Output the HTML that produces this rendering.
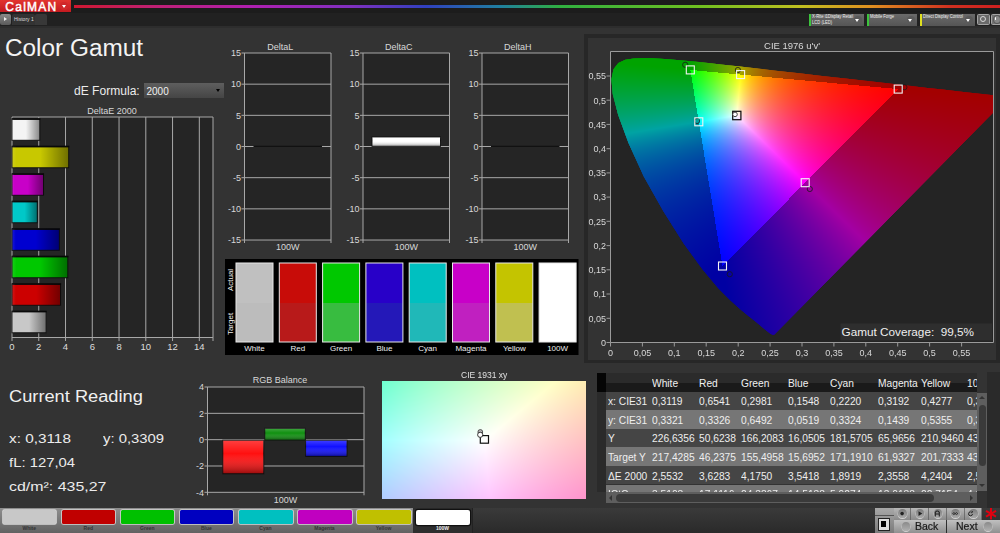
<!DOCTYPE html>
<html><head><meta charset="utf-8">
<style>
html,body{margin:0;padding:0;background:#333;}
#root{position:relative;width:1000px;height:533px;overflow:hidden;background:#333333;font-family:"Liberation Sans",sans-serif;color:#e8e8e8;}
.a{position:absolute;}
.t{position:absolute;white-space:nowrap;line-height:1;}
svg{position:absolute;left:0;top:0;}
svg text{font-family:"Liberation Sans",sans-serif;}
.fb7 rect{width:7px;height:7px;}
.fb4 rect{width:4px;height:4px;}
</style></head><body><div id="root">

<div class="a" style="left:0;top:0;width:1000px;height:13px;background:#1c1c1c"></div>
<div class="a" style="left:0;top:13px;width:1000px;height:13px;background:#212121"></div>
<div class="a" style="left:0;top:26px;width:1000px;height:2px;background:#2d2d2d"></div>
<div class="a" style="left:74px;top:5px;width:926px;height:2.5px;background:linear-gradient(90deg,#d01830 0%,#c02070 8%,#b020b0 19%,#8030c0 30%,#3040c0 38%,#2080a0 46%,#30b040 52.5%,#70c020 67.6%,#c0c020 78.4%,#e09020 86%,#d03020 94.6%,#d02020 100%)"></div>
<div class="a" style="left:0;top:0;width:71px;height:12px;background:linear-gradient(#e2342f,#c41a20)"></div>
<div class="t" style="left:5.3px;top:0.5px;font-size:12px;font-weight:normal;letter-spacing:1.25px;color:#fff;-webkit-text-stroke:0.45px #fff">CalMAN</div>
<div class="a" style="left:60px;top:2px;width:8px;height:8px;border-radius:50%;background:#d0282a"></div>
<div class="a" style="left:62px;top:5px;width:0;height:0;border-left:2.5px solid transparent;border-right:2.5px solid transparent;border-top:3px solid #fff"></div>
<div class="a" style="left:0;top:13.5px;width:10.5px;height:11.5px;background:linear-gradient(#8a8a8a,#5a5a5a);border-radius:2px"></div>
<div class="a" style="left:4px;top:17px;width:0;height:0;border-top:2.5px solid transparent;border-bottom:2.5px solid transparent;border-left:3px solid #eee"></div>
<div class="a" style="left:12px;top:13.5px;width:23px;height:11.5px;background:#333;border-radius:2px 2px 0 0"></div>
<div class="t" style="left:14px;top:16.5px;font-size:5px;color:#ddd">History 1</div>
<div class="a" style="left:35px;top:13.5px;width:12px;height:11.5px;background:#383838;border-radius:2px 2px 0 0"></div>
<div class="a" style="left:808.5px;top:14px;width:55.5px;height:11.5px;background:linear-gradient(#6a6a6a,#555)"></div>
<div class="a" style="left:808.5px;top:14px;width:2.5px;height:11.5px;background:#3cc43c"></div>
<div class="t" style="left:812.0px;top:15.0px;font-size:4.6px;color:#eee;transform-origin:0 0;transform:scaleX(0.9)">X-Rite i1Display Retail</div>
<div class="t" style="left:812.0px;top:20.5px;font-size:4.6px;color:#eee;transform-origin:0 0;transform:scaleX(0.9)">LCD (LED)</div>
<div class="a" style="left:853.5px;top:15.5px;width:8px;height:8px;border-radius:50%;background:#5a5a5a"></div>
<div class="a" style="left:855px;top:18.5px;width:0;height:0;border-left:2.5px solid transparent;border-right:2.5px solid transparent;border-top:3px solid #fff"></div>
<div class="a" style="left:866.5px;top:14px;width:50.5px;height:11.5px;background:linear-gradient(#6a6a6a,#555)"></div>
<div class="a" style="left:866.5px;top:14px;width:2.5px;height:11.5px;background:#3cc43c"></div>
<div class="t" style="left:870.0px;top:15.0px;font-size:4.6px;color:#eee;transform-origin:0 0;transform:scaleX(0.9)">Mobile Forge</div>
<div class="a" style="left:906.5px;top:15.5px;width:8px;height:8px;border-radius:50%;background:#5a5a5a"></div>
<div class="a" style="left:908px;top:18.5px;width:0;height:0;border-left:2.5px solid transparent;border-right:2.5px solid transparent;border-top:3px solid #fff"></div>
<div class="a" style="left:919.5px;top:14px;width:55.5px;height:11.5px;background:linear-gradient(#6a6a6a,#555)"></div>
<div class="a" style="left:919.5px;top:14px;width:2.5px;height:11.5px;background:#e0e020"></div>
<div class="t" style="left:923.0px;top:15.0px;font-size:4.6px;color:#eee;transform-origin:0 0;transform:scaleX(0.9)">Direct Display Control</div>
<div class="a" style="left:964.5px;top:15.5px;width:8px;height:8px;border-radius:50%;background:#5a5a5a"></div>
<div class="a" style="left:966px;top:18.5px;width:0;height:0;border-left:2.5px solid transparent;border-right:2.5px solid transparent;border-top:3px solid #fff"></div>
<div class="a" style="left:977px;top:13.5px;width:10.5px;height:9.5px;background:#6a6a6a;border:1px solid #a4a4a4;border-radius:1.5px"></div>
<div class="a" style="left:979.6px;top:15.5px;width:4.2px;height:4.2px;border-radius:50%;border:1.3px solid #d8d8d8"></div>
<div class="a" style="left:991px;top:13.5px;width:10.5px;height:9.5px;background:#727272;border:1px solid #a4a4a4;border-radius:1.5px"></div>
<div class="a" style="left:993px;top:15px;width:6px;height:7px;border-radius:50%;background:#888;border:0.8px solid #555"></div>
<div class="a" style="left:994.6px;top:17px;width:1.8px;height:3px;border-radius:50%;background:#fff"></div>
<div class="t" style="left:5px;top:36.5px;font-size:23.5px;color:#f4f4f4;transform-origin:0 0;transform:scaleX(1.036)">Color Gamut</div>
<div class="t" style="left:74px;top:85px;font-size:12.5px;color:#ececec;transform-origin:0 0;transform:scaleX(0.965)">dE Formula:</div>
<div class="a" style="left:144px;top:83px;width:80px;height:14.5px;background:linear-gradient(#5e5e5e,#454545)"></div>
<div class="t" style="left:146.5px;top:87px;font-size:10px;color:#f0f0f0">2000</div>
<div class="a" style="left:216px;top:89px;width:0;height:0;border-left:2.8px solid transparent;border-right:2.8px solid transparent;border-top:3.5px solid #000"></div>
<div class="t" style="left:9px;top:389px;font-size:16px;color:#f0f0f0;transform-origin:0 0;transform:scaleX(1.14)">Current Reading</div>
<div class="t" style="left:9px;top:431.5px;font-size:13.5px;color:#ececec;transform-origin:0 0;transform:scaleX(1.135)">x: 0,3118</div>
<div class="t" style="left:102.5px;top:431.5px;font-size:13.5px;color:#ececec;transform-origin:0 0;transform:scaleX(1.1)">y: 0,3309</div>
<div class="t" style="left:9px;top:455.5px;font-size:13.5px;color:#ececec;transform-origin:0 0;transform:scaleX(1.1)">fL: 127,04</div>
<div class="t" style="left:9px;top:479.5px;font-size:13.5px;color:#ececec;transform-origin:0 0;transform:scaleX(1.18)">cd/m²: 435,27</div>
<svg width="1000" height="533" viewBox="0 0 1000 533">
<defs>
<linearGradient id="hbar" x1="0" x2="1" y1="0" y2="0"><stop offset="0" stop-color="#fff" stop-opacity="0.10"/><stop offset="0.08" stop-color="#fff" stop-opacity="0"/><stop offset="0.5" stop-color="#000" stop-opacity="0"/><stop offset="1" stop-color="#000" stop-opacity="0.45"/></linearGradient>
<linearGradient id="vbar" x1="0" x2="0" y1="0" y2="1"><stop offset="0" stop-color="#fff" stop-opacity="0.2"/><stop offset="0.4" stop-color="#fff" stop-opacity="0"/><stop offset="1" stop-color="#000" stop-opacity="0.4"/></linearGradient>
</defs>
<rect x="12" y="117" width="201" height="220.5" fill="#252525"/>
<text x="112" y="114" font-size="9" fill="#d8d8d8" text-anchor="middle">DeltaE 2000</text>
<line x1="12.0" y1="117" x2="12.0" y2="341.0" stroke="#a8a8a8" stroke-width="1"/>
<text x="12.0" y="350" font-size="9.5" fill="#dddddd" text-anchor="middle">0</text>
<line x1="38.760000000000005" y1="117" x2="38.760000000000005" y2="341.0" stroke="#a8a8a8" stroke-width="1"/>
<text x="38.760000000000005" y="350" font-size="9.5" fill="#dddddd" text-anchor="middle">2</text>
<line x1="65.52000000000001" y1="117" x2="65.52000000000001" y2="341.0" stroke="#a8a8a8" stroke-width="1"/>
<text x="65.52000000000001" y="350" font-size="9.5" fill="#dddddd" text-anchor="middle">4</text>
<line x1="92.28" y1="117" x2="92.28" y2="341.0" stroke="#a8a8a8" stroke-width="1"/>
<text x="92.28" y="350" font-size="9.5" fill="#dddddd" text-anchor="middle">6</text>
<line x1="119.04" y1="117" x2="119.04" y2="341.0" stroke="#a8a8a8" stroke-width="1"/>
<text x="119.04" y="350" font-size="9.5" fill="#dddddd" text-anchor="middle">8</text>
<line x1="145.8" y1="117" x2="145.8" y2="341.0" stroke="#a8a8a8" stroke-width="1"/>
<text x="145.8" y="350" font-size="9.5" fill="#dddddd" text-anchor="middle">10</text>
<line x1="172.56" y1="117" x2="172.56" y2="341.0" stroke="#a8a8a8" stroke-width="1"/>
<text x="172.56" y="350" font-size="9.5" fill="#dddddd" text-anchor="middle">12</text>
<line x1="199.32000000000002" y1="117" x2="199.32000000000002" y2="341.0" stroke="#a8a8a8" stroke-width="1"/>
<text x="199.32000000000002" y="350" font-size="9.5" fill="#dddddd" text-anchor="middle">14</text>
<line x1="12" y1="117" x2="213" y2="117" stroke="#a8a8a8" stroke-width="1"/>
<line x1="213" y1="117" x2="213" y2="341.0" stroke="#a8a8a8" stroke-width="1"/>
<line x1="12" y1="337.5" x2="213" y2="337.5" stroke="#a8a8a8" stroke-width="1"/>
<rect x="12" y="118.8" width="27.8304" height="21.5" fill="#f4f4f4" stroke="#111" stroke-width="1"/>
<rect x="12" y="118.3" width="28.3304" height="1.6" fill="#0a0a0a"/>
<rect x="12" y="118.8" width="27.8304" height="21.5" fill="url(#hbar)"/>
<rect x="12" y="146.3" width="56.736552" height="21.5" fill="#c8c800" stroke="#111" stroke-width="1"/>
<rect x="12" y="145.8" width="57.236552" height="1.6" fill="#0a0a0a"/>
<rect x="12" y="146.3" width="56.736552" height="21.5" fill="url(#hbar)"/>
<rect x="12" y="173.8" width="31.520604" height="21.5" fill="#c800c8" stroke="#111" stroke-width="1"/>
<rect x="12" y="173.3" width="32.020604" height="1.6" fill="#0a0a0a"/>
<rect x="12" y="173.8" width="31.520604" height="21.5" fill="url(#hbar)"/>
<rect x="12" y="201.3" width="25.313622" height="21.5" fill="#00c8c8" stroke="#111" stroke-width="1"/>
<rect x="12" y="200.8" width="25.813622" height="1.6" fill="#0a0a0a"/>
<rect x="12" y="201.3" width="25.313622" height="21.5" fill="url(#hbar)"/>
<rect x="12" y="228.8" width="47.389284" height="21.5" fill="#0000d0" stroke="#111" stroke-width="1"/>
<rect x="12" y="228.3" width="47.889284" height="1.6" fill="#0a0a0a"/>
<rect x="12" y="228.8" width="47.389284" height="21.5" fill="url(#hbar)"/>
<rect x="12" y="256.3" width="55.8615" height="21.5" fill="#00c800" stroke="#111" stroke-width="1"/>
<rect x="12" y="255.8" width="56.3615" height="1.6" fill="#0a0a0a"/>
<rect x="12" y="256.3" width="55.8615" height="21.5" fill="url(#hbar)"/>
<rect x="12" y="283.8" width="48.546654000000004" height="21.5" fill="#cc0000" stroke="#111" stroke-width="1"/>
<rect x="12" y="283.3" width="49.046654000000004" height="1.6" fill="#0a0a0a"/>
<rect x="12" y="283.8" width="48.546654000000004" height="21.5" fill="url(#hbar)"/>
<rect x="12" y="311.3" width="34.161816" height="21.5" fill="#c8c8c8" stroke="#111" stroke-width="1"/>
<rect x="12" y="310.8" width="34.661816" height="1.6" fill="#0a0a0a"/>
<rect x="12" y="311.3" width="34.161816" height="21.5" fill="url(#hbar)"/>
<rect x="244.5" y="53" width="86.5" height="187" fill="#252525"/>
<text x="280.25" y="50" font-size="9" fill="#d8d8d8" text-anchor="middle">DeltaL</text>
<line x1="244.5" y1="53" x2="244.5" y2="243" stroke="#a8a8a8"/>
<line x1="331.0" y1="53" x2="331.0" y2="243" stroke="#a8a8a8"/>
<line x1="241.5" y1="53.0" x2="331.0" y2="53.0" stroke="#a8a8a8"/>
<text x="241.0" y="56.3" font-size="9" fill="#d8d8d8" text-anchor="end">15</text>
<line x1="241.5" y1="84.17" x2="331.0" y2="84.17" stroke="#a8a8a8"/>
<text x="241.0" y="87.47" font-size="9" fill="#d8d8d8" text-anchor="end">10</text>
<line x1="241.5" y1="115.34" x2="331.0" y2="115.34" stroke="#a8a8a8"/>
<text x="241.0" y="118.64" font-size="9" fill="#d8d8d8" text-anchor="end">5</text>
<line x1="241.5" y1="146.51" x2="331.0" y2="146.51" stroke="#a8a8a8"/>
<text x="241.0" y="149.81" font-size="9" fill="#d8d8d8" text-anchor="end">0</text>
<line x1="241.5" y1="177.68" x2="331.0" y2="177.68" stroke="#a8a8a8"/>
<text x="241.0" y="180.98000000000002" font-size="9" fill="#d8d8d8" text-anchor="end">-5</text>
<line x1="241.5" y1="208.85000000000002" x2="331.0" y2="208.85000000000002" stroke="#a8a8a8"/>
<text x="241.0" y="212.15000000000003" font-size="9" fill="#d8d8d8" text-anchor="end">-10</text>
<line x1="241.5" y1="240.02" x2="331.0" y2="240.02" stroke="#a8a8a8"/>
<text x="241.0" y="243.32000000000002" font-size="9" fill="#d8d8d8" text-anchor="end">-15</text>
<text x="287.75" y="249.5" font-size="9" fill="#d8d8d8" text-anchor="middle">100W</text>
<line x1="253.5" y1="146.3" x2="322.0" y2="146.3" stroke="#111" stroke-width="1.2"/>
<rect x="363" y="53" width="86.5" height="187" fill="#252525"/>
<text x="398.75" y="50" font-size="9" fill="#d8d8d8" text-anchor="middle">DeltaC</text>
<line x1="363" y1="53" x2="363" y2="243" stroke="#a8a8a8"/>
<line x1="449.5" y1="53" x2="449.5" y2="243" stroke="#a8a8a8"/>
<line x1="360" y1="53.0" x2="449.5" y2="53.0" stroke="#a8a8a8"/>
<text x="359.5" y="56.3" font-size="9" fill="#d8d8d8" text-anchor="end">15</text>
<line x1="360" y1="84.17" x2="449.5" y2="84.17" stroke="#a8a8a8"/>
<text x="359.5" y="87.47" font-size="9" fill="#d8d8d8" text-anchor="end">10</text>
<line x1="360" y1="115.34" x2="449.5" y2="115.34" stroke="#a8a8a8"/>
<text x="359.5" y="118.64" font-size="9" fill="#d8d8d8" text-anchor="end">5</text>
<line x1="360" y1="146.51" x2="449.5" y2="146.51" stroke="#a8a8a8"/>
<text x="359.5" y="149.81" font-size="9" fill="#d8d8d8" text-anchor="end">0</text>
<line x1="360" y1="177.68" x2="449.5" y2="177.68" stroke="#a8a8a8"/>
<text x="359.5" y="180.98000000000002" font-size="9" fill="#d8d8d8" text-anchor="end">-5</text>
<line x1="360" y1="208.85000000000002" x2="449.5" y2="208.85000000000002" stroke="#a8a8a8"/>
<text x="359.5" y="212.15000000000003" font-size="9" fill="#d8d8d8" text-anchor="end">-10</text>
<line x1="360" y1="240.02" x2="449.5" y2="240.02" stroke="#a8a8a8"/>
<text x="359.5" y="243.32000000000002" font-size="9" fill="#d8d8d8" text-anchor="end">-15</text>
<text x="406.25" y="249.5" font-size="9" fill="#d8d8d8" text-anchor="middle">100W</text>
<rect x="372" y="137.0" width="68.5" height="9.3" fill="#ffffff" stroke="#111"/>
<rect x="372" y="137.0" width="68.5" height="9.3" fill="url(#vbar)"/>
<rect x="482" y="53" width="86.5" height="187" fill="#252525"/>
<text x="517.75" y="50" font-size="9" fill="#d8d8d8" text-anchor="middle">DeltaH</text>
<line x1="482" y1="53" x2="482" y2="243" stroke="#a8a8a8"/>
<line x1="568.5" y1="53" x2="568.5" y2="243" stroke="#a8a8a8"/>
<line x1="479" y1="53.0" x2="568.5" y2="53.0" stroke="#a8a8a8"/>
<text x="478.5" y="56.3" font-size="9" fill="#d8d8d8" text-anchor="end">15</text>
<line x1="479" y1="84.17" x2="568.5" y2="84.17" stroke="#a8a8a8"/>
<text x="478.5" y="87.47" font-size="9" fill="#d8d8d8" text-anchor="end">10</text>
<line x1="479" y1="115.34" x2="568.5" y2="115.34" stroke="#a8a8a8"/>
<text x="478.5" y="118.64" font-size="9" fill="#d8d8d8" text-anchor="end">5</text>
<line x1="479" y1="146.51" x2="568.5" y2="146.51" stroke="#a8a8a8"/>
<text x="478.5" y="149.81" font-size="9" fill="#d8d8d8" text-anchor="end">0</text>
<line x1="479" y1="177.68" x2="568.5" y2="177.68" stroke="#a8a8a8"/>
<text x="478.5" y="180.98000000000002" font-size="9" fill="#d8d8d8" text-anchor="end">-5</text>
<line x1="479" y1="208.85000000000002" x2="568.5" y2="208.85000000000002" stroke="#a8a8a8"/>
<text x="478.5" y="212.15000000000003" font-size="9" fill="#d8d8d8" text-anchor="end">-10</text>
<line x1="479" y1="240.02" x2="568.5" y2="240.02" stroke="#a8a8a8"/>
<text x="478.5" y="243.32000000000002" font-size="9" fill="#d8d8d8" text-anchor="end">-15</text>
<text x="525.25" y="249.5" font-size="9" fill="#d8d8d8" text-anchor="middle">100W</text>
<line x1="491" y1="146.3" x2="559.5" y2="146.3" stroke="#111" stroke-width="1.2"/>
<rect x="225" y="259" width="353.5" height="96" fill="#000"/>
<rect x="236.0" y="263" width="37" height="40" fill="#c0c0c0"/>
<rect x="236.0" y="303" width="37" height="39" fill="#bcbcbc"/>
<rect x="236.0" y="263" width="37" height="79" fill="none" stroke="#e8e8e8" stroke-width="1"/>
<text x="254.5" y="351" font-size="8" fill="#eeeeee" text-anchor="middle">White</text>
<rect x="279.3" y="263" width="37" height="40" fill="#c80c08"/>
<rect x="279.3" y="303" width="37" height="39" fill="#b81a1a"/>
<rect x="279.3" y="263" width="37" height="79" fill="none" stroke="#e8e8e8" stroke-width="1"/>
<text x="297.8" y="351" font-size="8" fill="#eeeeee" text-anchor="middle">Red</text>
<rect x="322.6" y="263" width="37" height="40" fill="#00c800"/>
<rect x="322.6" y="303" width="37" height="39" fill="#38bc40"/>
<rect x="322.6" y="263" width="37" height="79" fill="none" stroke="#e8e8e8" stroke-width="1"/>
<text x="341.1" y="351" font-size="8" fill="#eeeeee" text-anchor="middle">Green</text>
<rect x="365.9" y="263" width="37" height="40" fill="#2800c8"/>
<rect x="365.9" y="303" width="37" height="39" fill="#2418b8"/>
<rect x="365.9" y="263" width="37" height="79" fill="none" stroke="#e8e8e8" stroke-width="1"/>
<text x="384.4" y="351" font-size="8" fill="#eeeeee" text-anchor="middle">Blue</text>
<rect x="409.2" y="263" width="37" height="40" fill="#00c0c0"/>
<rect x="409.2" y="303" width="37" height="39" fill="#20b8b8"/>
<rect x="409.2" y="263" width="37" height="79" fill="none" stroke="#e8e8e8" stroke-width="1"/>
<text x="427.7" y="351" font-size="8" fill="#eeeeee" text-anchor="middle">Cyan</text>
<rect x="452.5" y="263" width="37" height="40" fill="#c800c8"/>
<rect x="452.5" y="303" width="37" height="39" fill="#c020c0"/>
<rect x="452.5" y="263" width="37" height="79" fill="none" stroke="#e8e8e8" stroke-width="1"/>
<text x="471.0" y="351" font-size="8" fill="#eeeeee" text-anchor="middle">Magenta</text>
<rect x="495.79999999999995" y="263" width="37" height="40" fill="#c4c400"/>
<rect x="495.79999999999995" y="303" width="37" height="39" fill="#c0c050"/>
<rect x="495.79999999999995" y="263" width="37" height="79" fill="none" stroke="#e8e8e8" stroke-width="1"/>
<text x="514.3" y="351" font-size="8" fill="#eeeeee" text-anchor="middle">Yellow</text>
<rect x="539.0999999999999" y="263" width="37" height="40" fill="#ffffff"/>
<rect x="539.0999999999999" y="303" width="37" height="39" fill="#ffffff"/>
<rect x="539.0999999999999" y="263" width="37" height="79" fill="none" stroke="#e8e8e8" stroke-width="1"/>
<text x="557.5999999999999" y="351" font-size="8" fill="#eeeeee" text-anchor="middle">100W</text>
<text transform="translate(233,280) rotate(-90)" font-size="8" fill="#eeeeee" text-anchor="middle">Actual</text>
<text transform="translate(233,324) rotate(-90)" font-size="8" fill="#eeeeee" text-anchor="middle">Target</text>
<rect x="207.5" y="387" width="156.5" height="105.30000000000001" fill="#252525"/>
<text x="280" y="383" font-size="9" fill="#d8d8d8" text-anchor="middle">RGB Balance</text>
<line x1="207.5" y1="387" x2="207.5" y2="495.3" stroke="#a8a8a8"/>
<line x1="364" y1="387" x2="364" y2="495.3" stroke="#a8a8a8"/>
<line x1="204.5" y1="387.0" x2="364" y2="387.0" stroke="#a8a8a8"/>
<text x="204.0" y="390.3" font-size="9" fill="#d8d8d8" text-anchor="end">4</text>
<line x1="204.5" y1="413.33" x2="364" y2="413.33" stroke="#a8a8a8"/>
<text x="204.0" y="416.63" font-size="9" fill="#d8d8d8" text-anchor="end">2</text>
<line x1="204.5" y1="439.65999999999997" x2="364" y2="439.65999999999997" stroke="#a8a8a8"/>
<text x="204.0" y="442.96" font-size="9" fill="#d8d8d8" text-anchor="end">0</text>
<line x1="204.5" y1="465.99" x2="364" y2="465.99" stroke="#a8a8a8"/>
<text x="204.0" y="469.29" font-size="9" fill="#d8d8d8" text-anchor="end">-2</text>
<line x1="204.5" y1="492.32" x2="364" y2="492.32" stroke="#a8a8a8"/>
<text x="204.0" y="495.62" font-size="9" fill="#d8d8d8" text-anchor="end">-4</text>
<text x="285.5" y="502.5" font-size="9" fill="#d8d8d8" text-anchor="middle">100W</text>
<rect x="222.8" y="440.2" width="41.0" height="33.5835" fill="#ff1010" stroke="#111"/>
<rect x="222.8" y="440.2" width="41.0" height="33.5835" fill="url(#vbar)"/>
<rect x="264.8" y="428.347" width="40.5" height="11.853" fill="#109010" stroke="#111"/>
<rect x="264.8" y="428.347" width="40.5" height="11.853" fill="url(#vbar)"/>
<rect x="305.6" y="440.2" width="41.39999999999998" height="16.1991" fill="#1010ff" stroke="#111"/>
<rect x="305.6" y="440.2" width="41.39999999999998" height="16.1991" fill="url(#vbar)"/>
</svg>
<div class="a" style="left:584px;top:33.5px;width:416px;height:329.5px;background:#272727"></div>
<div class="a" style="left:587.5px;top:37.5px;width:408.5px;height:322px;background:#333333"></div>
<div class="a" style="left:610.5px;top:51.5px;width:383px;height:291px;background:#242424"></div>
<svg class="fb7" style="left:611px;top:52px" width="382" height="290" viewBox="0 0 382 290"><defs><clipPath id="lc"><polygon points="163.4,282.5 163.2,282.6 162.7,282.8 162.0,282.8 160.5,282.3 158.8,281.2 156.6,279.5 153.4,277.0 149.3,273.5 144.2,269.3 137.4,263.9 129.3,257.2 119.3,248.3 107.3,236.3 91.5,217.3 72.7,191.5 52.4,159.3 32.8,124.4 17.5,91.0 7.1,62.8 1.7,41.9 0.4,27.3 2.5,17.3 7.3,10.9 14.3,7.7 22.5,6.5 31.5,6.2 40.6,6.3 50.1,6.7 60.3,7.4 71.4,8.4 83.7,9.6 97.2,11.1 112.2,12.7 128.8,14.6 147.1,16.6 167.0,18.9 188.4,21.3 211.1,23.9 234.4,26.6 257.0,29.1 279.0,31.6 299.0,33.9 316.6,35.9 331.6,37.6 344.1,39.0 354.7,40.2 363.9,41.3 371.7,42.1 377.9,42.8 382.8,43.4 386.6,43.8 389.4,44.1 391.3,44.4 392.8,44.5 395.2,44.8 397.4,45.1"/></clipPath></defs><g clip-path="url(#lc)" shape-rendering="crispEdges"><rect x="0" y="0" fill="#00ff00"/><rect x="7" y="0" fill="#00ff00"/><rect x="14" y="0" fill="#00ff00"/><rect x="21" y="0" fill="#00ff00"/><rect x="28" y="0" fill="#00ff00"/><rect x="35" y="0" fill="#00ff00"/><rect x="42" y="0" fill="#00ff00"/><rect x="49" y="0" fill="#00ff00"/><rect x="56" y="0" fill="#00ff00"/><rect x="63" y="0" fill="#00ff00"/><rect x="70" y="0" fill="#00ff00"/><rect x="77" y="0" fill="#0dff00"/><rect x="84" y="0" fill="#28ff00"/><rect x="91" y="0" fill="#45ff00"/><rect x="98" y="0" fill="#63ff00"/><rect x="105" y="0" fill="#84ff00"/><rect x="112" y="0" fill="#a6ff00"/><rect x="119" y="0" fill="#cbff00"/><rect x="126" y="0" fill="#f3ff00"/><rect x="133" y="0" fill="#ffe300"/><rect x="140" y="0" fill="#ffc400"/><rect x="147" y="0" fill="#ffaa00"/><rect x="154" y="0" fill="#ff9500"/><rect x="161" y="0" fill="#ff8300"/><rect x="168" y="0" fill="#ff7400"/><rect x="175" y="0" fill="#ff6700"/><rect x="182" y="0" fill="#ff5c00"/><rect x="189" y="0" fill="#ff5200"/><rect x="196" y="0" fill="#ff4900"/><rect x="203" y="0" fill="#ff4100"/><rect x="210" y="0" fill="#ff3a00"/><rect x="217" y="0" fill="#ff3300"/><rect x="224" y="0" fill="#ff2e00"/><rect x="231" y="0" fill="#ff2800"/><rect x="238" y="0" fill="#ff2300"/><rect x="245" y="0" fill="#ff1f00"/><rect x="252" y="0" fill="#ff1b00"/><rect x="259" y="0" fill="#ff1700"/><rect x="266" y="0" fill="#ff1400"/><rect x="273" y="0" fill="#ff1000"/><rect x="280" y="0" fill="#ff0d00"/><rect x="287" y="0" fill="#ff0a00"/><rect x="294" y="0" fill="#ff0800"/><rect x="301" y="0" fill="#ff0500"/><rect x="308" y="0" fill="#ff0300"/><rect x="315" y="0" fill="#ff0100"/><rect x="322" y="0" fill="#ff0000"/><rect x="329" y="0" fill="#ff0000"/><rect x="336" y="0" fill="#ff0000"/><rect x="343" y="0" fill="#ff0000"/><rect x="350" y="0" fill="#ff0000"/><rect x="357" y="0" fill="#ff0000"/><rect x="364" y="0" fill="#ff0000"/><rect x="371" y="0" fill="#ff0000"/><rect x="378" y="0" fill="#ff0000"/><rect x="0" y="7" fill="#00ff00"/><rect x="7" y="7" fill="#00ff00"/><rect x="14" y="7" fill="#00ff00"/><rect x="21" y="7" fill="#00ff00"/><rect x="28" y="7" fill="#00ff00"/><rect x="35" y="7" fill="#00ff00"/><rect x="42" y="7" fill="#00ff00"/><rect x="49" y="7" fill="#00ff00"/><rect x="56" y="7" fill="#00ff00"/><rect x="63" y="7" fill="#00ff00"/><rect x="70" y="7" fill="#00ff00"/><rect x="77" y="7" fill="#09ff00"/><rect x="84" y="7" fill="#25ff00"/><rect x="91" y="7" fill="#42ff00"/><rect x="98" y="7" fill="#62ff00"/><rect x="105" y="7" fill="#83ff00"/><rect x="112" y="7" fill="#a7ff00"/><rect x="119" y="7" fill="#cdff00"/><rect x="126" y="7" fill="#f7ff00"/><rect x="133" y="7" fill="#ffdf00"/><rect x="140" y="7" fill="#ffbf00"/><rect x="147" y="7" fill="#ffa600"/><rect x="154" y="7" fill="#ff9100"/><rect x="161" y="7" fill="#ff7f00"/><rect x="168" y="7" fill="#ff7000"/><rect x="175" y="7" fill="#ff6300"/><rect x="182" y="7" fill="#ff5800"/><rect x="189" y="7" fill="#ff4e00"/><rect x="196" y="7" fill="#ff4500"/><rect x="203" y="7" fill="#ff3d00"/><rect x="210" y="7" fill="#ff3600"/><rect x="217" y="7" fill="#ff3000"/><rect x="224" y="7" fill="#ff2a00"/><rect x="231" y="7" fill="#ff2500"/><rect x="238" y="7" fill="#ff2000"/><rect x="245" y="7" fill="#ff1c00"/><rect x="252" y="7" fill="#ff1800"/><rect x="259" y="7" fill="#ff1400"/><rect x="266" y="7" fill="#ff1100"/><rect x="273" y="7" fill="#ff0e00"/><rect x="280" y="7" fill="#ff0b00"/><rect x="287" y="7" fill="#ff0800"/><rect x="294" y="7" fill="#ff0500"/><rect x="301" y="7" fill="#ff0300"/><rect x="308" y="7" fill="#ff0100"/><rect x="315" y="7" fill="#ff0000"/><rect x="322" y="7" fill="#ff0000"/><rect x="329" y="7" fill="#ff0000"/><rect x="336" y="7" fill="#ff0000"/><rect x="343" y="7" fill="#ff0000"/><rect x="350" y="7" fill="#ff0000"/><rect x="357" y="7" fill="#ff0000"/><rect x="364" y="7" fill="#ff0000"/><rect x="371" y="7" fill="#ff0000"/><rect x="378" y="7" fill="#ff0000"/><rect x="0" y="14" fill="#00ff12"/><rect x="7" y="14" fill="#00ff11"/><rect x="14" y="14" fill="#00ff0f"/><rect x="21" y="14" fill="#00ff0e"/><rect x="28" y="14" fill="#00ff0c"/><rect x="35" y="14" fill="#00ff0a"/><rect x="42" y="14" fill="#00ff09"/><rect x="49" y="14" fill="#00ff07"/><rect x="56" y="14" fill="#00ff05"/><rect x="63" y="14" fill="#00ff03"/><rect x="70" y="14" fill="#00ff00"/><rect x="77" y="14" fill="#05ff00"/><rect x="84" y="14" fill="#21ff00"/><rect x="91" y="14" fill="#40ff00"/><rect x="98" y="14" fill="#60ff00"/><rect x="105" y="14" fill="#83ff00"/><rect x="112" y="14" fill="#a8ff00"/><rect x="119" y="14" fill="#d0ff00"/><rect x="126" y="14" fill="#fbff00"/><rect x="133" y="14" fill="#ffdb00"/><rect x="140" y="14" fill="#ffbb00"/><rect x="147" y="14" fill="#ffa100"/><rect x="154" y="14" fill="#ff8c00"/><rect x="161" y="14" fill="#ff7b00"/><rect x="168" y="14" fill="#ff6c00"/><rect x="175" y="14" fill="#ff5f00"/><rect x="182" y="14" fill="#ff5400"/><rect x="189" y="14" fill="#ff4a00"/><rect x="196" y="14" fill="#ff4200"/><rect x="203" y="14" fill="#ff3a00"/><rect x="210" y="14" fill="#ff3300"/><rect x="217" y="14" fill="#ff2d00"/><rect x="224" y="14" fill="#ff2700"/><rect x="231" y="14" fill="#ff2200"/><rect x="238" y="14" fill="#ff1e00"/><rect x="245" y="14" fill="#ff1900"/><rect x="252" y="14" fill="#ff1500"/><rect x="259" y="14" fill="#ff1200"/><rect x="266" y="14" fill="#ff0e00"/><rect x="273" y="14" fill="#ff0b00"/><rect x="280" y="14" fill="#ff0800"/><rect x="287" y="14" fill="#ff0600"/><rect x="294" y="14" fill="#ff0300"/><rect x="301" y="14" fill="#ff0100"/><rect x="308" y="14" fill="#ff0000"/><rect x="315" y="14" fill="#ff0000"/><rect x="322" y="14" fill="#ff0000"/><rect x="329" y="14" fill="#ff0000"/><rect x="336" y="14" fill="#ff0000"/><rect x="343" y="14" fill="#ff0000"/><rect x="350" y="14" fill="#ff0000"/><rect x="357" y="14" fill="#ff0000"/><rect x="364" y="14" fill="#ff0000"/><rect x="371" y="14" fill="#ff0000"/><rect x="378" y="14" fill="#ff0000"/><rect x="0" y="21" fill="#00ff26"/><rect x="7" y="21" fill="#00ff25"/><rect x="14" y="21" fill="#00ff24"/><rect x="21" y="21" fill="#00ff23"/><rect x="28" y="21" fill="#00ff22"/><rect x="35" y="21" fill="#00ff21"/><rect x="42" y="21" fill="#00ff20"/><rect x="49" y="21" fill="#00ff1f"/><rect x="56" y="21" fill="#00ff1d"/><rect x="63" y="21" fill="#00ff1c"/><rect x="70" y="21" fill="#00ff1a"/><rect x="77" y="21" fill="#01ff19"/><rect x="84" y="21" fill="#1eff17"/><rect x="91" y="21" fill="#3dff15"/><rect x="98" y="21" fill="#5eff13"/><rect x="105" y="21" fill="#82ff11"/><rect x="112" y="21" fill="#a9ff0f"/><rect x="119" y="21" fill="#d2ff0c"/><rect x="126" y="21" fill="#ffff0a"/><rect x="133" y="21" fill="#ffd606"/><rect x="140" y="21" fill="#ffb603"/><rect x="147" y="21" fill="#ff9d00"/><rect x="154" y="21" fill="#ff8800"/><rect x="161" y="21" fill="#ff7600"/><rect x="168" y="21" fill="#ff6800"/><rect x="175" y="21" fill="#ff5b00"/><rect x="182" y="21" fill="#ff5000"/><rect x="189" y="21" fill="#ff4600"/><rect x="196" y="21" fill="#ff3e00"/><rect x="203" y="21" fill="#ff3600"/><rect x="210" y="21" fill="#ff3000"/><rect x="217" y="21" fill="#ff2a00"/><rect x="224" y="21" fill="#ff2400"/><rect x="231" y="21" fill="#ff1f00"/><rect x="238" y="21" fill="#ff1b00"/><rect x="245" y="21" fill="#ff1600"/><rect x="252" y="21" fill="#ff1300"/><rect x="259" y="21" fill="#ff0f00"/><rect x="266" y="21" fill="#ff0c00"/><rect x="273" y="21" fill="#ff0900"/><rect x="280" y="21" fill="#ff0600"/><rect x="287" y="21" fill="#ff0300"/><rect x="294" y="21" fill="#ff0100"/><rect x="301" y="21" fill="#ff0000"/><rect x="308" y="21" fill="#ff0000"/><rect x="315" y="21" fill="#ff0000"/><rect x="322" y="21" fill="#ff0000"/><rect x="329" y="21" fill="#ff0000"/><rect x="336" y="21" fill="#ff0000"/><rect x="343" y="21" fill="#ff0000"/><rect x="350" y="21" fill="#ff0000"/><rect x="357" y="21" fill="#ff0000"/><rect x="364" y="21" fill="#ff0000"/><rect x="371" y="21" fill="#ff0000"/><rect x="378" y="21" fill="#ff0000"/><rect x="0" y="28" fill="#00ff3b"/><rect x="7" y="28" fill="#00ff3b"/><rect x="14" y="28" fill="#00ff3a"/><rect x="21" y="28" fill="#00ff3a"/><rect x="28" y="28" fill="#00ff39"/><rect x="35" y="28" fill="#00ff39"/><rect x="42" y="28" fill="#00ff38"/><rect x="49" y="28" fill="#00ff38"/><rect x="56" y="28" fill="#00ff37"/><rect x="63" y="28" fill="#00ff36"/><rect x="70" y="28" fill="#00ff36"/><rect x="77" y="28" fill="#00ff35"/><rect x="84" y="28" fill="#1aff34"/><rect x="91" y="28" fill="#3aff33"/><rect x="98" y="28" fill="#5cff32"/><rect x="105" y="28" fill="#81ff31"/><rect x="112" y="28" fill="#a9ff30"/><rect x="119" y="28" fill="#d5ff2f"/><rect x="126" y="28" fill="#fffa2d"/><rect x="133" y="28" fill="#ffd124"/><rect x="140" y="28" fill="#ffb11e"/><rect x="147" y="28" fill="#ff9818"/><rect x="154" y="28" fill="#ff8314"/><rect x="161" y="28" fill="#ff7211"/><rect x="168" y="28" fill="#ff630e"/><rect x="175" y="28" fill="#ff570b"/><rect x="182" y="28" fill="#ff4c09"/><rect x="189" y="28" fill="#ff4307"/><rect x="196" y="28" fill="#ff3a05"/><rect x="203" y="28" fill="#ff3304"/><rect x="210" y="28" fill="#ff2c02"/><rect x="217" y="28" fill="#ff2601"/><rect x="224" y="28" fill="#ff2100"/><rect x="231" y="28" fill="#ff1c00"/><rect x="238" y="28" fill="#ff1800"/><rect x="245" y="28" fill="#ff1400"/><rect x="252" y="28" fill="#ff1000"/><rect x="259" y="28" fill="#ff0c00"/><rect x="266" y="28" fill="#ff0900"/><rect x="273" y="28" fill="#ff0600"/><rect x="280" y="28" fill="#ff0300"/><rect x="287" y="28" fill="#ff0100"/><rect x="294" y="28" fill="#ff0000"/><rect x="301" y="28" fill="#ff0000"/><rect x="308" y="28" fill="#ff0000"/><rect x="315" y="28" fill="#ff0000"/><rect x="322" y="28" fill="#ff0000"/><rect x="329" y="28" fill="#ff0000"/><rect x="336" y="28" fill="#ff0000"/><rect x="343" y="28" fill="#ff0000"/><rect x="350" y="28" fill="#ff0000"/><rect x="357" y="28" fill="#ff0000"/><rect x="364" y="28" fill="#ff0000"/><rect x="371" y="28" fill="#ff0000"/><rect x="378" y="28" fill="#ff0000"/><rect x="0" y="35" fill="#00ff51"/><rect x="7" y="35" fill="#00ff52"/><rect x="14" y="35" fill="#00ff52"/><rect x="21" y="35" fill="#00ff52"/><rect x="28" y="35" fill="#00ff52"/><rect x="35" y="35" fill="#00ff52"/><rect x="42" y="35" fill="#00ff52"/><rect x="49" y="35" fill="#00ff52"/><rect x="56" y="35" fill="#00ff53"/><rect x="63" y="35" fill="#00ff53"/><rect x="70" y="35" fill="#00ff53"/><rect x="77" y="35" fill="#00ff53"/><rect x="84" y="35" fill="#16ff53"/><rect x="91" y="35" fill="#37ff54"/><rect x="98" y="35" fill="#5aff54"/><rect x="105" y="35" fill="#81ff54"/><rect x="112" y="35" fill="#aaff54"/><rect x="119" y="35" fill="#d8ff55"/><rect x="126" y="35" fill="#fff652"/><rect x="133" y="35" fill="#ffcc44"/><rect x="140" y="35" fill="#ffac3a"/><rect x="147" y="35" fill="#ff9332"/><rect x="154" y="35" fill="#ff7e2b"/><rect x="161" y="35" fill="#ff6d25"/><rect x="168" y="35" fill="#ff5f21"/><rect x="175" y="35" fill="#ff521d"/><rect x="182" y="35" fill="#ff4819"/><rect x="189" y="35" fill="#ff3f16"/><rect x="196" y="35" fill="#ff3614"/><rect x="203" y="35" fill="#ff2f11"/><rect x="210" y="35" fill="#ff290f"/><rect x="217" y="35" fill="#ff230d"/><rect x="224" y="35" fill="#ff1e0b"/><rect x="231" y="35" fill="#ff190a"/><rect x="238" y="35" fill="#ff1509"/><rect x="245" y="35" fill="#ff1107"/><rect x="252" y="35" fill="#ff0d06"/><rect x="259" y="35" fill="#ff0a05"/><rect x="266" y="35" fill="#ff0604"/><rect x="273" y="35" fill="#ff0403"/><rect x="280" y="35" fill="#ff0102"/><rect x="287" y="35" fill="#ff0001"/><rect x="294" y="35" fill="#ff0000"/><rect x="301" y="35" fill="#ff0000"/><rect x="308" y="35" fill="#ff0000"/><rect x="315" y="35" fill="#ff0000"/><rect x="322" y="35" fill="#ff0000"/><rect x="329" y="35" fill="#ff0000"/><rect x="336" y="35" fill="#ff0000"/><rect x="343" y="35" fill="#ff0000"/><rect x="350" y="35" fill="#ff0000"/><rect x="357" y="35" fill="#ff0000"/><rect x="364" y="35" fill="#ff0000"/><rect x="371" y="35" fill="#ff0000"/><rect x="378" y="35" fill="#ff0000"/><rect x="0" y="42" fill="#00ff69"/><rect x="7" y="42" fill="#00ff69"/><rect x="14" y="42" fill="#00ff6a"/><rect x="21" y="42" fill="#00ff6b"/><rect x="28" y="42" fill="#00ff6c"/><rect x="35" y="42" fill="#00ff6d"/><rect x="42" y="42" fill="#00ff6e"/><rect x="49" y="42" fill="#00ff6f"/><rect x="56" y="42" fill="#00ff70"/><rect x="63" y="42" fill="#00ff71"/><rect x="70" y="42" fill="#00ff72"/><rect x="77" y="42" fill="#00ff73"/><rect x="84" y="42" fill="#11ff75"/><rect x="91" y="42" fill="#33ff76"/><rect x="98" y="42" fill="#58ff78"/><rect x="105" y="42" fill="#80ff7a"/><rect x="112" y="42" fill="#abff7c"/><rect x="119" y="42" fill="#dbff7e"/><rect x="126" y="42" fill="#fff179"/><rect x="133" y="42" fill="#ffc766"/><rect x="140" y="42" fill="#ffa757"/><rect x="147" y="42" fill="#ff8e4c"/><rect x="154" y="42" fill="#ff7942"/><rect x="161" y="42" fill="#ff683b"/><rect x="168" y="42" fill="#ff5a34"/><rect x="175" y="42" fill="#ff4e2f"/><rect x="182" y="42" fill="#ff442a"/><rect x="189" y="42" fill="#ff3a26"/><rect x="196" y="42" fill="#ff3322"/><rect x="203" y="42" fill="#ff2b1f"/><rect x="210" y="42" fill="#ff251c"/><rect x="217" y="42" fill="#ff1f1a"/><rect x="224" y="42" fill="#ff1a17"/><rect x="231" y="42" fill="#ff1615"/><rect x="238" y="42" fill="#ff1113"/><rect x="245" y="42" fill="#ff0e11"/><rect x="252" y="42" fill="#ff0a10"/><rect x="259" y="42" fill="#ff070e"/><rect x="266" y="42" fill="#ff040d"/><rect x="273" y="42" fill="#ff010c"/><rect x="280" y="42" fill="#ff000b"/><rect x="287" y="42" fill="#ff0009"/><rect x="294" y="42" fill="#ff0008"/><rect x="301" y="42" fill="#ff0007"/><rect x="308" y="42" fill="#ff0006"/><rect x="315" y="42" fill="#ff0006"/><rect x="322" y="42" fill="#ff0005"/><rect x="329" y="42" fill="#ff0004"/><rect x="336" y="42" fill="#ff0003"/><rect x="343" y="42" fill="#ff0003"/><rect x="350" y="42" fill="#ff0002"/><rect x="357" y="42" fill="#ff0001"/><rect x="364" y="42" fill="#ff0001"/><rect x="371" y="42" fill="#ff0000"/><rect x="378" y="42" fill="#ff0000"/><rect x="0" y="49" fill="#00ff81"/><rect x="7" y="49" fill="#00ff83"/><rect x="14" y="49" fill="#00ff84"/><rect x="21" y="49" fill="#00ff86"/><rect x="28" y="49" fill="#00ff87"/><rect x="35" y="49" fill="#00ff89"/><rect x="42" y="49" fill="#00ff8b"/><rect x="49" y="49" fill="#00ff8d"/><rect x="56" y="49" fill="#00ff8f"/><rect x="63" y="49" fill="#00ff91"/><rect x="70" y="49" fill="#00ff94"/><rect x="77" y="49" fill="#00ff96"/><rect x="84" y="49" fill="#0cff99"/><rect x="91" y="49" fill="#2fff9c"/><rect x="98" y="49" fill="#56ff9f"/><rect x="105" y="49" fill="#7fffa3"/><rect x="112" y="49" fill="#adffa7"/><rect x="119" y="49" fill="#deffab"/><rect x="126" y="49" fill="#ffeba2"/><rect x="133" y="49" fill="#ffc189"/><rect x="140" y="49" fill="#ffa176"/><rect x="147" y="49" fill="#ff8867"/><rect x="154" y="49" fill="#ff745b"/><rect x="161" y="49" fill="#ff6351"/><rect x="168" y="49" fill="#ff5548"/><rect x="175" y="49" fill="#ff4a41"/><rect x="182" y="49" fill="#ff3f3b"/><rect x="189" y="49" fill="#ff3636"/><rect x="196" y="49" fill="#ff2f31"/><rect x="203" y="49" fill="#ff282d"/><rect x="210" y="49" fill="#ff212a"/><rect x="217" y="49" fill="#ff1c26"/><rect x="224" y="49" fill="#ff1723"/><rect x="231" y="49" fill="#ff1221"/><rect x="238" y="49" fill="#ff0e1e"/><rect x="245" y="49" fill="#ff0b1c"/><rect x="252" y="49" fill="#ff071a"/><rect x="259" y="49" fill="#ff0418"/><rect x="266" y="49" fill="#ff0116"/><rect x="273" y="49" fill="#ff0015"/><rect x="280" y="49" fill="#ff0013"/><rect x="287" y="49" fill="#ff0012"/><rect x="294" y="49" fill="#ff0010"/><rect x="301" y="49" fill="#ff000f"/><rect x="308" y="49" fill="#ff000e"/><rect x="315" y="49" fill="#ff000d"/><rect x="322" y="49" fill="#ff000c"/><rect x="329" y="49" fill="#ff000b"/><rect x="336" y="49" fill="#ff000a"/><rect x="343" y="49" fill="#ff0009"/><rect x="350" y="49" fill="#ff0008"/><rect x="357" y="49" fill="#ff0008"/><rect x="364" y="49" fill="#ff0007"/><rect x="371" y="49" fill="#ff0006"/><rect x="378" y="49" fill="#ff0005"/><rect x="0" y="56" fill="#00ff9b"/><rect x="7" y="56" fill="#00ff9d"/><rect x="14" y="56" fill="#00ff9f"/><rect x="21" y="56" fill="#00ffa2"/><rect x="28" y="56" fill="#00ffa4"/><rect x="35" y="56" fill="#00ffa7"/><rect x="42" y="56" fill="#00ffaa"/><rect x="49" y="56" fill="#00ffad"/><rect x="56" y="56" fill="#00ffb0"/><rect x="63" y="56" fill="#00ffb4"/><rect x="70" y="56" fill="#00ffb7"/><rect x="77" y="56" fill="#00ffbb"/><rect x="84" y="56" fill="#07ffc0"/><rect x="91" y="56" fill="#2bffc5"/><rect x="98" y="56" fill="#53ffca"/><rect x="105" y="56" fill="#7effcf"/><rect x="112" y="56" fill="#aeffd5"/><rect x="119" y="56" fill="#e2ffdc"/><rect x="126" y="56" fill="#ffe6cd"/><rect x="133" y="56" fill="#ffbcad"/><rect x="140" y="56" fill="#ff9c95"/><rect x="147" y="56" fill="#ff8383"/><rect x="154" y="56" fill="#ff6f74"/><rect x="161" y="56" fill="#ff5e67"/><rect x="168" y="56" fill="#ff515d"/><rect x="175" y="56" fill="#ff4554"/><rect x="182" y="56" fill="#ff3b4d"/><rect x="189" y="56" fill="#ff3246"/><rect x="196" y="56" fill="#ff2a41"/><rect x="203" y="56" fill="#ff243c"/><rect x="210" y="56" fill="#ff1e37"/><rect x="217" y="56" fill="#ff1833"/><rect x="224" y="56" fill="#ff142f"/><rect x="231" y="56" fill="#ff0f2c"/><rect x="238" y="56" fill="#ff0b29"/><rect x="245" y="56" fill="#ff0726"/><rect x="252" y="56" fill="#ff0424"/><rect x="259" y="56" fill="#ff0122"/><rect x="266" y="56" fill="#ff0020"/><rect x="273" y="56" fill="#ff001e"/><rect x="280" y="56" fill="#ff001c"/><rect x="287" y="56" fill="#ff001a"/><rect x="294" y="56" fill="#ff0018"/><rect x="301" y="56" fill="#ff0017"/><rect x="308" y="56" fill="#ff0016"/><rect x="315" y="56" fill="#ff0014"/><rect x="322" y="56" fill="#ff0013"/><rect x="329" y="56" fill="#ff0012"/><rect x="336" y="56" fill="#ff0011"/><rect x="343" y="56" fill="#ff0010"/><rect x="350" y="56" fill="#ff000f"/><rect x="357" y="56" fill="#ff000e"/><rect x="364" y="56" fill="#ff000d"/><rect x="371" y="56" fill="#ff000c"/><rect x="378" y="56" fill="#ff000b"/><rect x="0" y="63" fill="#00ffb6"/><rect x="7" y="63" fill="#00ffb9"/><rect x="14" y="63" fill="#00ffbc"/><rect x="21" y="63" fill="#00ffc0"/><rect x="28" y="63" fill="#00ffc3"/><rect x="35" y="63" fill="#00ffc7"/><rect x="42" y="63" fill="#00ffcb"/><rect x="49" y="63" fill="#00ffcf"/><rect x="56" y="63" fill="#00ffd4"/><rect x="63" y="63" fill="#00ffd9"/><rect x="70" y="63" fill="#00ffde"/><rect x="77" y="63" fill="#00ffe4"/><rect x="84" y="63" fill="#01ffea"/><rect x="91" y="63" fill="#27fff1"/><rect x="98" y="63" fill="#50fff8"/><rect x="105" y="63" fill="#7dfeff"/><rect x="112" y="63" fill="#a9f6ff"/><rect x="119" y="63" fill="#d6edff"/><rect x="126" y="63" fill="#ffe0fa"/><rect x="133" y="63" fill="#ffb6d4"/><rect x="140" y="63" fill="#ff96b6"/><rect x="147" y="63" fill="#ff7da0"/><rect x="154" y="63" fill="#ff698e"/><rect x="161" y="63" fill="#ff597f"/><rect x="168" y="63" fill="#ff4c72"/><rect x="175" y="63" fill="#ff4068"/><rect x="182" y="63" fill="#ff365f"/><rect x="189" y="63" fill="#ff2e57"/><rect x="196" y="63" fill="#ff2650"/><rect x="203" y="63" fill="#ff204a"/><rect x="210" y="63" fill="#ff1a45"/><rect x="217" y="63" fill="#ff1540"/><rect x="224" y="63" fill="#ff103c"/><rect x="231" y="63" fill="#ff0c38"/><rect x="238" y="63" fill="#ff0834"/><rect x="245" y="63" fill="#ff0431"/><rect x="252" y="63" fill="#ff012e"/><rect x="259" y="63" fill="#ff002b"/><rect x="266" y="63" fill="#ff0029"/><rect x="273" y="63" fill="#ff0027"/><rect x="280" y="63" fill="#ff0024"/><rect x="287" y="63" fill="#ff0022"/><rect x="294" y="63" fill="#ff0021"/><rect x="301" y="63" fill="#ff001f"/><rect x="308" y="63" fill="#ff001d"/><rect x="315" y="63" fill="#ff001c"/><rect x="322" y="63" fill="#ff001a"/><rect x="329" y="63" fill="#ff0019"/><rect x="336" y="63" fill="#ff0017"/><rect x="343" y="63" fill="#ff0016"/><rect x="350" y="63" fill="#ff0015"/><rect x="357" y="63" fill="#ff0014"/><rect x="364" y="63" fill="#ff0013"/><rect x="371" y="63" fill="#ff0012"/><rect x="378" y="63" fill="#ff0011"/><rect x="0" y="70" fill="#00ffd3"/><rect x="7" y="70" fill="#00ffd7"/><rect x="14" y="70" fill="#00ffdb"/><rect x="21" y="70" fill="#00ffdf"/><rect x="28" y="70" fill="#00ffe4"/><rect x="35" y="70" fill="#00ffe9"/><rect x="42" y="70" fill="#00ffee"/><rect x="49" y="70" fill="#00fff4"/><rect x="56" y="70" fill="#00fffa"/><rect x="63" y="70" fill="#00feff"/><rect x="70" y="70" fill="#00f7ff"/><rect x="77" y="70" fill="#00f0ff"/><rect x="84" y="70" fill="#00e9ff"/><rect x="91" y="70" fill="#1ee1ff"/><rect x="98" y="70" fill="#42daff"/><rect x="105" y="70" fill="#67d2ff"/><rect x="112" y="70" fill="#8ccaff"/><rect x="119" y="70" fill="#b3c2ff"/><rect x="126" y="70" fill="#dabaff"/><rect x="133" y="70" fill="#ffaffc"/><rect x="140" y="70" fill="#ff90d9"/><rect x="147" y="70" fill="#ff77be"/><rect x="154" y="70" fill="#ff64a8"/><rect x="161" y="70" fill="#ff5497"/><rect x="168" y="70" fill="#ff4688"/><rect x="175" y="70" fill="#ff3b7c"/><rect x="182" y="70" fill="#ff3271"/><rect x="189" y="70" fill="#ff2968"/><rect x="196" y="70" fill="#ff2260"/><rect x="203" y="70" fill="#ff1c59"/><rect x="210" y="70" fill="#ff1653"/><rect x="217" y="70" fill="#ff114d"/><rect x="224" y="70" fill="#ff0c48"/><rect x="231" y="70" fill="#ff0844"/><rect x="238" y="70" fill="#ff0540"/><rect x="245" y="70" fill="#ff013c"/><rect x="252" y="70" fill="#ff0039"/><rect x="259" y="70" fill="#ff0035"/><rect x="266" y="70" fill="#ff0033"/><rect x="273" y="70" fill="#ff0030"/><rect x="280" y="70" fill="#ff002d"/><rect x="287" y="70" fill="#ff002b"/><rect x="294" y="70" fill="#ff0029"/><rect x="301" y="70" fill="#ff0027"/><rect x="308" y="70" fill="#ff0025"/><rect x="315" y="70" fill="#ff0023"/><rect x="322" y="70" fill="#ff0021"/><rect x="329" y="70" fill="#ff0020"/><rect x="336" y="70" fill="#ff001e"/><rect x="343" y="70" fill="#ff001d"/><rect x="350" y="70" fill="#ff001b"/><rect x="357" y="70" fill="#ff001a"/><rect x="364" y="70" fill="#ff0019"/><rect x="371" y="70" fill="#ff0018"/><rect x="378" y="70" fill="#ff0017"/><rect x="0" y="77" fill="#00fff1"/><rect x="7" y="77" fill="#00fff6"/><rect x="14" y="77" fill="#00fffb"/><rect x="21" y="77" fill="#00fdff"/><rect x="28" y="77" fill="#00f8ff"/><rect x="35" y="77" fill="#00f2ff"/><rect x="42" y="77" fill="#00ecff"/><rect x="49" y="77" fill="#00e6ff"/><rect x="56" y="77" fill="#00e0ff"/><rect x="63" y="77" fill="#00d9ff"/><rect x="70" y="77" fill="#00d3ff"/><rect x="77" y="77" fill="#00ccff"/><rect x="84" y="77" fill="#00c6ff"/><rect x="91" y="77" fill="#16bfff"/><rect x="98" y="77" fill="#35b8ff"/><rect x="105" y="77" fill="#55b1ff"/><rect x="112" y="77" fill="#76a9ff"/><rect x="119" y="77" fill="#98a2ff"/><rect x="126" y="77" fill="#ba9aff"/><rect x="133" y="77" fill="#dd92ff"/><rect x="140" y="77" fill="#ff89fd"/><rect x="147" y="77" fill="#ff71dd"/><rect x="154" y="77" fill="#ff5ec4"/><rect x="161" y="77" fill="#ff4eb0"/><rect x="168" y="77" fill="#ff419f"/><rect x="175" y="77" fill="#ff3690"/><rect x="182" y="77" fill="#ff2d84"/><rect x="189" y="77" fill="#ff257a"/><rect x="196" y="77" fill="#ff1e71"/><rect x="203" y="77" fill="#ff1869"/><rect x="210" y="77" fill="#ff1261"/><rect x="217" y="77" fill="#ff0d5b"/><rect x="224" y="77" fill="#ff0955"/><rect x="231" y="77" fill="#ff0550"/><rect x="238" y="77" fill="#ff014b"/><rect x="245" y="77" fill="#ff0047"/><rect x="252" y="77" fill="#ff0043"/><rect x="259" y="77" fill="#ff0040"/><rect x="266" y="77" fill="#ff003c"/><rect x="273" y="77" fill="#ff0039"/><rect x="280" y="77" fill="#ff0036"/><rect x="287" y="77" fill="#ff0034"/><rect x="294" y="77" fill="#ff0031"/><rect x="301" y="77" fill="#ff002f"/><rect x="308" y="77" fill="#ff002d"/><rect x="315" y="77" fill="#ff002b"/><rect x="322" y="77" fill="#ff0029"/><rect x="329" y="77" fill="#ff0027"/><rect x="336" y="77" fill="#ff0025"/><rect x="343" y="77" fill="#ff0023"/><rect x="350" y="77" fill="#ff0022"/><rect x="357" y="77" fill="#ff0021"/><rect x="364" y="77" fill="#ff001f"/><rect x="371" y="77" fill="#ff001e"/><rect x="378" y="77" fill="#ff001d"/><rect x="0" y="84" fill="#00eeff"/><rect x="7" y="84" fill="#00e9ff"/><rect x="14" y="84" fill="#00e4ff"/><rect x="21" y="84" fill="#00deff"/><rect x="28" y="84" fill="#00d9ff"/><rect x="35" y="84" fill="#00d3ff"/><rect x="42" y="84" fill="#00ceff"/><rect x="49" y="84" fill="#00c8ff"/><rect x="56" y="84" fill="#00c2ff"/><rect x="63" y="84" fill="#00bcff"/><rect x="70" y="84" fill="#00b6ff"/><rect x="77" y="84" fill="#00b0ff"/><rect x="84" y="84" fill="#00aaff"/><rect x="91" y="84" fill="#0fa3ff"/><rect x="98" y="84" fill="#2b9dff"/><rect x="105" y="84" fill="#4896ff"/><rect x="112" y="84" fill="#658fff"/><rect x="119" y="84" fill="#8388ff"/><rect x="126" y="84" fill="#a181ff"/><rect x="133" y="84" fill="#c07aff"/><rect x="140" y="84" fill="#e073ff"/><rect x="147" y="84" fill="#ff6bfe"/><rect x="154" y="84" fill="#ff58e1"/><rect x="161" y="84" fill="#ff48c9"/><rect x="168" y="84" fill="#ff3cb6"/><rect x="175" y="84" fill="#ff31a6"/><rect x="182" y="84" fill="#ff2898"/><rect x="189" y="84" fill="#ff208c"/><rect x="196" y="84" fill="#ff1981"/><rect x="203" y="84" fill="#ff1378"/><rect x="210" y="84" fill="#ff0e70"/><rect x="217" y="84" fill="#ff0969"/><rect x="224" y="84" fill="#ff0562"/><rect x="231" y="84" fill="#ff015c"/><rect x="238" y="84" fill="#ff0057"/><rect x="245" y="84" fill="#ff0052"/><rect x="252" y="84" fill="#ff004e"/><rect x="259" y="84" fill="#ff004a"/><rect x="266" y="84" fill="#ff0046"/><rect x="273" y="84" fill="#ff0043"/><rect x="280" y="84" fill="#ff003f"/><rect x="287" y="84" fill="#ff003c"/><rect x="294" y="84" fill="#ff003a"/><rect x="301" y="84" fill="#ff0037"/><rect x="308" y="84" fill="#ff0034"/><rect x="315" y="84" fill="#ff0032"/><rect x="322" y="84" fill="#ff0030"/><rect x="329" y="84" fill="#ff002e"/><rect x="336" y="84" fill="#ff002c"/><rect x="343" y="84" fill="#ff002a"/><rect x="350" y="84" fill="#ff0029"/><rect x="357" y="84" fill="#ff0027"/><rect x="364" y="84" fill="#ff0025"/><rect x="371" y="84" fill="#ff0024"/><rect x="378" y="84" fill="#ff0022"/><rect x="0" y="91" fill="#00d4ff"/><rect x="7" y="91" fill="#00cfff"/><rect x="14" y="91" fill="#00caff"/><rect x="21" y="91" fill="#00c5ff"/><rect x="28" y="91" fill="#00bfff"/><rect x="35" y="91" fill="#00baff"/><rect x="42" y="91" fill="#00b5ff"/><rect x="49" y="91" fill="#00afff"/><rect x="56" y="91" fill="#00aaff"/><rect x="63" y="91" fill="#00a4ff"/><rect x="70" y="91" fill="#009eff"/><rect x="77" y="91" fill="#0099ff"/><rect x="84" y="91" fill="#0093ff"/><rect x="91" y="91" fill="#098dff"/><rect x="98" y="91" fill="#2387ff"/><rect x="105" y="91" fill="#3d80ff"/><rect x="112" y="91" fill="#577aff"/><rect x="119" y="91" fill="#7274ff"/><rect x="126" y="91" fill="#8d6dff"/><rect x="133" y="91" fill="#a967ff"/><rect x="140" y="91" fill="#c660ff"/><rect x="147" y="91" fill="#e259ff"/><rect x="154" y="91" fill="#ff52fe"/><rect x="161" y="91" fill="#ff43e4"/><rect x="168" y="91" fill="#ff36ce"/><rect x="175" y="91" fill="#ff2cbb"/><rect x="182" y="91" fill="#ff23ac"/><rect x="189" y="91" fill="#ff1c9e"/><rect x="196" y="91" fill="#ff1592"/><rect x="203" y="91" fill="#ff0f88"/><rect x="210" y="91" fill="#ff0a7f"/><rect x="217" y="91" fill="#ff0677"/><rect x="224" y="91" fill="#ff0170"/><rect x="231" y="91" fill="#ff0069"/><rect x="238" y="91" fill="#ff0063"/><rect x="245" y="91" fill="#ff005e"/><rect x="252" y="91" fill="#ff0059"/><rect x="259" y="91" fill="#ff0054"/><rect x="266" y="91" fill="#ff0050"/><rect x="273" y="91" fill="#ff004c"/><rect x="280" y="91" fill="#ff0048"/><rect x="287" y="91" fill="#ff0045"/><rect x="294" y="91" fill="#ff0042"/><rect x="301" y="91" fill="#ff003f"/><rect x="308" y="91" fill="#ff003c"/><rect x="315" y="91" fill="#ff003a"/><rect x="322" y="91" fill="#ff0037"/><rect x="329" y="91" fill="#ff0035"/><rect x="336" y="91" fill="#ff0033"/><rect x="343" y="91" fill="#ff0031"/><rect x="350" y="91" fill="#ff002f"/><rect x="357" y="91" fill="#ff002d"/><rect x="364" y="91" fill="#ff002c"/><rect x="371" y="91" fill="#ff002a"/><rect x="378" y="91" fill="#ff0028"/><rect x="0" y="98" fill="#00bdff"/><rect x="7" y="98" fill="#00b8ff"/><rect x="14" y="98" fill="#00b4ff"/><rect x="21" y="98" fill="#00afff"/><rect x="28" y="98" fill="#00aaff"/><rect x="35" y="98" fill="#00a5ff"/><rect x="42" y="98" fill="#00a0ff"/><rect x="49" y="98" fill="#009bff"/><rect x="56" y="98" fill="#0096ff"/><rect x="63" y="98" fill="#0090ff"/><rect x="70" y="98" fill="#008bff"/><rect x="77" y="98" fill="#0085ff"/><rect x="84" y="98" fill="#0080ff"/><rect x="91" y="98" fill="#057aff"/><rect x="98" y="98" fill="#1c74ff"/><rect x="105" y="98" fill="#346fff"/><rect x="112" y="98" fill="#4c69ff"/><rect x="119" y="98" fill="#6463ff"/><rect x="126" y="98" fill="#7d5dff"/><rect x="133" y="98" fill="#9656ff"/><rect x="140" y="98" fill="#b050ff"/><rect x="147" y="98" fill="#ca4aff"/><rect x="154" y="98" fill="#e443ff"/><rect x="161" y="98" fill="#ff3cff"/><rect x="168" y="98" fill="#ff31e6"/><rect x="175" y="98" fill="#ff27d1"/><rect x="182" y="98" fill="#ff1ec0"/><rect x="189" y="98" fill="#ff17b1"/><rect x="196" y="98" fill="#ff10a4"/><rect x="203" y="98" fill="#ff0b98"/><rect x="210" y="98" fill="#ff068e"/><rect x="217" y="98" fill="#ff0285"/><rect x="224" y="98" fill="#ff007d"/><rect x="231" y="98" fill="#ff0076"/><rect x="238" y="98" fill="#ff006f"/><rect x="245" y="98" fill="#ff0069"/><rect x="252" y="98" fill="#ff0064"/><rect x="259" y="98" fill="#ff005f"/><rect x="266" y="98" fill="#ff005a"/><rect x="273" y="98" fill="#ff0056"/><rect x="280" y="98" fill="#ff0052"/><rect x="287" y="98" fill="#ff004e"/><rect x="294" y="98" fill="#ff004b"/><rect x="301" y="98" fill="#ff0047"/><rect x="308" y="98" fill="#ff0044"/><rect x="315" y="98" fill="#ff0042"/><rect x="322" y="98" fill="#ff003f"/><rect x="329" y="98" fill="#ff003c"/><rect x="336" y="98" fill="#ff003a"/><rect x="343" y="98" fill="#ff0038"/><rect x="350" y="98" fill="#ff0036"/><rect x="357" y="98" fill="#ff0034"/><rect x="364" y="98" fill="#ff0032"/><rect x="371" y="98" fill="#ff0030"/><rect x="378" y="98" fill="#ff002e"/><rect x="0" y="105" fill="#00aaff"/><rect x="7" y="105" fill="#00a6ff"/><rect x="14" y="105" fill="#00a1ff"/><rect x="21" y="105" fill="#009cff"/><rect x="28" y="105" fill="#0098ff"/><rect x="35" y="105" fill="#0093ff"/><rect x="42" y="105" fill="#008eff"/><rect x="49" y="105" fill="#0089ff"/><rect x="56" y="105" fill="#0084ff"/><rect x="63" y="105" fill="#007fff"/><rect x="70" y="105" fill="#007aff"/><rect x="77" y="105" fill="#0075ff"/><rect x="84" y="105" fill="#0070ff"/><rect x="91" y="105" fill="#016bff"/><rect x="98" y="105" fill="#1665ff"/><rect x="105" y="105" fill="#2c60ff"/><rect x="112" y="105" fill="#425aff"/><rect x="119" y="105" fill="#5854ff"/><rect x="126" y="105" fill="#6f4fff"/><rect x="133" y="105" fill="#8649ff"/><rect x="140" y="105" fill="#9e43ff"/><rect x="147" y="105" fill="#b53dff"/><rect x="154" y="105" fill="#cd37ff"/><rect x="161" y="105" fill="#e631ff"/><rect x="168" y="105" fill="#ff2bff"/><rect x="175" y="105" fill="#ff21e8"/><rect x="182" y="105" fill="#ff19d5"/><rect x="189" y="105" fill="#ff12c4"/><rect x="196" y="105" fill="#ff0cb6"/><rect x="203" y="105" fill="#ff06a9"/><rect x="210" y="105" fill="#ff029e"/><rect x="217" y="105" fill="#ff0094"/><rect x="224" y="105" fill="#ff008b"/><rect x="231" y="105" fill="#ff0083"/><rect x="238" y="105" fill="#ff007b"/><rect x="245" y="105" fill="#ff0075"/><rect x="252" y="105" fill="#ff006f"/><rect x="259" y="105" fill="#ff0069"/><rect x="266" y="105" fill="#ff0064"/><rect x="273" y="105" fill="#ff005f"/><rect x="280" y="105" fill="#ff005b"/><rect x="287" y="105" fill="#ff0057"/><rect x="294" y="105" fill="#ff0053"/><rect x="301" y="105" fill="#ff0050"/><rect x="308" y="105" fill="#ff004d"/><rect x="315" y="105" fill="#ff0049"/><rect x="322" y="105" fill="#ff0047"/><rect x="329" y="105" fill="#ff0044"/><rect x="336" y="105" fill="#ff0041"/><rect x="343" y="105" fill="#ff003f"/><rect x="350" y="105" fill="#ff003d"/><rect x="357" y="105" fill="#ff003a"/><rect x="364" y="105" fill="#ff0038"/><rect x="371" y="105" fill="#ff0036"/><rect x="378" y="105" fill="#ff0034"/><rect x="0" y="112" fill="#009aff"/><rect x="7" y="112" fill="#0095ff"/><rect x="14" y="112" fill="#0091ff"/><rect x="21" y="112" fill="#008cff"/><rect x="28" y="112" fill="#0088ff"/><rect x="35" y="112" fill="#0083ff"/><rect x="42" y="112" fill="#007fff"/><rect x="49" y="112" fill="#007aff"/><rect x="56" y="112" fill="#0076ff"/><rect x="63" y="112" fill="#0071ff"/><rect x="70" y="112" fill="#006cff"/><rect x="77" y="112" fill="#0067ff"/><rect x="84" y="112" fill="#0062ff"/><rect x="91" y="112" fill="#005dff"/><rect x="98" y="112" fill="#1258ff"/><rect x="105" y="112" fill="#2653ff"/><rect x="112" y="112" fill="#3a4eff"/><rect x="119" y="112" fill="#4f48ff"/><rect x="126" y="112" fill="#6343ff"/><rect x="133" y="112" fill="#793eff"/><rect x="140" y="112" fill="#8e38ff"/><rect x="147" y="112" fill="#a432ff"/><rect x="154" y="112" fill="#ba2dff"/><rect x="161" y="112" fill="#d027ff"/><rect x="168" y="112" fill="#e721ff"/><rect x="175" y="112" fill="#fe1bff"/><rect x="182" y="112" fill="#ff13ea"/><rect x="189" y="112" fill="#ff0dd8"/><rect x="196" y="112" fill="#ff07c8"/><rect x="203" y="112" fill="#ff02ba"/><rect x="210" y="112" fill="#ff00ad"/><rect x="217" y="112" fill="#ff00a2"/><rect x="224" y="112" fill="#ff0099"/><rect x="231" y="112" fill="#ff0090"/><rect x="238" y="112" fill="#ff0088"/><rect x="245" y="112" fill="#ff0081"/><rect x="252" y="112" fill="#ff007a"/><rect x="259" y="112" fill="#ff0074"/><rect x="266" y="112" fill="#ff006f"/><rect x="273" y="112" fill="#ff0069"/><rect x="280" y="112" fill="#ff0065"/><rect x="287" y="112" fill="#ff0060"/><rect x="294" y="112" fill="#ff005c"/><rect x="301" y="112" fill="#ff0058"/><rect x="308" y="112" fill="#ff0055"/><rect x="315" y="112" fill="#ff0051"/><rect x="322" y="112" fill="#ff004e"/><rect x="329" y="112" fill="#ff004b"/><rect x="336" y="112" fill="#ff0048"/><rect x="343" y="112" fill="#ff0046"/><rect x="350" y="112" fill="#ff0043"/><rect x="357" y="112" fill="#ff0041"/><rect x="364" y="112" fill="#ff003f"/><rect x="371" y="112" fill="#ff003d"/><rect x="378" y="112" fill="#ff003b"/><rect x="0" y="119" fill="#008bff"/><rect x="7" y="119" fill="#0087ff"/><rect x="14" y="119" fill="#0083ff"/><rect x="21" y="119" fill="#007fff"/><rect x="28" y="119" fill="#007aff"/><rect x="35" y="119" fill="#0076ff"/><rect x="42" y="119" fill="#0072ff"/><rect x="49" y="119" fill="#006dff"/><rect x="56" y="119" fill="#0069ff"/><rect x="63" y="119" fill="#0064ff"/><rect x="70" y="119" fill="#0060ff"/><rect x="77" y="119" fill="#005bff"/><rect x="84" y="119" fill="#0056ff"/><rect x="91" y="119" fill="#0052ff"/><rect x="98" y="119" fill="#0d4dff"/><rect x="105" y="119" fill="#2048ff"/><rect x="112" y="119" fill="#3343ff"/><rect x="119" y="119" fill="#463eff"/><rect x="126" y="119" fill="#5939ff"/><rect x="133" y="119" fill="#6d34ff"/><rect x="140" y="119" fill="#812fff"/><rect x="147" y="119" fill="#9529ff"/><rect x="154" y="119" fill="#a924ff"/><rect x="161" y="119" fill="#be1fff"/><rect x="168" y="119" fill="#d319ff"/><rect x="175" y="119" fill="#e814ff"/><rect x="182" y="119" fill="#fe0eff"/><rect x="189" y="119" fill="#ff08ec"/><rect x="196" y="119" fill="#ff02da"/><rect x="203" y="119" fill="#ff00cb"/><rect x="210" y="119" fill="#ff00bd"/><rect x="217" y="119" fill="#ff00b2"/><rect x="224" y="119" fill="#ff00a7"/><rect x="231" y="119" fill="#ff009d"/><rect x="238" y="119" fill="#ff0095"/><rect x="245" y="119" fill="#ff008d"/><rect x="252" y="119" fill="#ff0086"/><rect x="259" y="119" fill="#ff007f"/><rect x="266" y="119" fill="#ff0079"/><rect x="273" y="119" fill="#ff0073"/><rect x="280" y="119" fill="#ff006e"/><rect x="287" y="119" fill="#ff0069"/><rect x="294" y="119" fill="#ff0065"/><rect x="301" y="119" fill="#ff0061"/><rect x="308" y="119" fill="#ff005d"/><rect x="315" y="119" fill="#ff0059"/><rect x="322" y="119" fill="#ff0056"/><rect x="329" y="119" fill="#ff0053"/><rect x="336" y="119" fill="#ff0050"/><rect x="343" y="119" fill="#ff004d"/><rect x="350" y="119" fill="#ff004a"/><rect x="357" y="119" fill="#ff0048"/><rect x="364" y="119" fill="#ff0045"/><rect x="371" y="119" fill="#ff0043"/><rect x="378" y="119" fill="#ff0041"/><rect x="0" y="126" fill="#007eff"/><rect x="7" y="126" fill="#007aff"/><rect x="14" y="126" fill="#0076ff"/><rect x="21" y="126" fill="#0072ff"/><rect x="28" y="126" fill="#006eff"/><rect x="35" y="126" fill="#006aff"/><rect x="42" y="126" fill="#0066ff"/><rect x="49" y="126" fill="#0062ff"/><rect x="56" y="126" fill="#005dff"/><rect x="63" y="126" fill="#0059ff"/><rect x="70" y="126" fill="#0055ff"/><rect x="77" y="126" fill="#0050ff"/><rect x="84" y="126" fill="#004cff"/><rect x="91" y="126" fill="#0047ff"/><rect x="98" y="126" fill="#0a43ff"/><rect x="105" y="126" fill="#1b3eff"/><rect x="112" y="126" fill="#2d3aff"/><rect x="119" y="126" fill="#3f35ff"/><rect x="126" y="126" fill="#5130ff"/><rect x="133" y="126" fill="#632bff"/><rect x="140" y="126" fill="#7526ff"/><rect x="147" y="126" fill="#8821ff"/><rect x="154" y="126" fill="#9b1cff"/><rect x="161" y="126" fill="#ae17ff"/><rect x="168" y="126" fill="#c212ff"/><rect x="175" y="126" fill="#d50dff"/><rect x="182" y="126" fill="#e908ff"/><rect x="189" y="126" fill="#fe02ff"/><rect x="196" y="126" fill="#ff00ed"/><rect x="203" y="126" fill="#ff00dd"/><rect x="210" y="126" fill="#ff00ce"/><rect x="217" y="126" fill="#ff00c1"/><rect x="224" y="126" fill="#ff00b5"/><rect x="231" y="126" fill="#ff00ab"/><rect x="238" y="126" fill="#ff00a1"/><rect x="245" y="126" fill="#ff0099"/><rect x="252" y="126" fill="#ff0091"/><rect x="259" y="126" fill="#ff008a"/><rect x="266" y="126" fill="#ff0084"/><rect x="273" y="126" fill="#ff007e"/><rect x="280" y="126" fill="#ff0078"/><rect x="287" y="126" fill="#ff0073"/><rect x="294" y="126" fill="#ff006e"/><rect x="301" y="126" fill="#ff006a"/><rect x="308" y="126" fill="#ff0065"/><rect x="315" y="126" fill="#ff0061"/><rect x="322" y="126" fill="#ff005e"/><rect x="329" y="126" fill="#ff005a"/><rect x="336" y="126" fill="#ff0057"/><rect x="343" y="126" fill="#ff0054"/><rect x="350" y="126" fill="#ff0051"/><rect x="357" y="126" fill="#ff004e"/><rect x="364" y="126" fill="#ff004c"/><rect x="371" y="126" fill="#ff0049"/><rect x="378" y="126" fill="#ff0047"/><rect x="0" y="133" fill="#0073ff"/><rect x="7" y="133" fill="#006fff"/><rect x="14" y="133" fill="#006bff"/><rect x="21" y="133" fill="#0067ff"/><rect x="28" y="133" fill="#0064ff"/><rect x="35" y="133" fill="#0060ff"/><rect x="42" y="133" fill="#005cff"/><rect x="49" y="133" fill="#0058ff"/><rect x="56" y="133" fill="#0054ff"/><rect x="63" y="133" fill="#004fff"/><rect x="70" y="133" fill="#004bff"/><rect x="77" y="133" fill="#0047ff"/><rect x="84" y="133" fill="#0043ff"/><rect x="91" y="133" fill="#003fff"/><rect x="98" y="133" fill="#063aff"/><rect x="105" y="133" fill="#1736ff"/><rect x="112" y="133" fill="#2731ff"/><rect x="119" y="133" fill="#382dff"/><rect x="126" y="133" fill="#4928ff"/><rect x="133" y="133" fill="#5a24ff"/><rect x="140" y="133" fill="#6b1fff"/><rect x="147" y="133" fill="#7d1aff"/><rect x="154" y="133" fill="#8f16ff"/><rect x="161" y="133" fill="#a111ff"/><rect x="168" y="133" fill="#b30cff"/><rect x="175" y="133" fill="#c507ff"/><rect x="182" y="133" fill="#d802ff"/><rect x="189" y="133" fill="#ea00ff"/><rect x="196" y="133" fill="#fd00ff"/><rect x="203" y="133" fill="#ff00ef"/><rect x="210" y="133" fill="#ff00df"/><rect x="217" y="133" fill="#ff00d1"/><rect x="224" y="133" fill="#ff00c4"/><rect x="231" y="133" fill="#ff00b9"/><rect x="238" y="133" fill="#ff00af"/><rect x="245" y="133" fill="#ff00a5"/><rect x="252" y="133" fill="#ff009d"/><rect x="259" y="133" fill="#ff0095"/><rect x="266" y="133" fill="#ff008e"/><rect x="273" y="133" fill="#ff0088"/><rect x="280" y="133" fill="#ff0082"/><rect x="287" y="133" fill="#ff007c"/><rect x="294" y="133" fill="#ff0077"/><rect x="301" y="133" fill="#ff0072"/><rect x="308" y="133" fill="#ff006e"/><rect x="315" y="133" fill="#ff006a"/><rect x="322" y="133" fill="#ff0066"/><rect x="329" y="133" fill="#ff0062"/><rect x="336" y="133" fill="#ff005e"/><rect x="343" y="133" fill="#ff005b"/><rect x="350" y="133" fill="#ff0058"/><rect x="357" y="133" fill="#ff0055"/><rect x="364" y="133" fill="#ff0052"/><rect x="371" y="133" fill="#ff0050"/><rect x="378" y="133" fill="#ff004d"/><rect x="0" y="140" fill="#0069ff"/><rect x="7" y="140" fill="#0065ff"/><rect x="14" y="140" fill="#0061ff"/><rect x="21" y="140" fill="#005eff"/><rect x="28" y="140" fill="#005aff"/><rect x="35" y="140" fill="#0056ff"/><rect x="42" y="140" fill="#0052ff"/><rect x="49" y="140" fill="#004fff"/><rect x="56" y="140" fill="#004bff"/><rect x="63" y="140" fill="#0047ff"/><rect x="70" y="140" fill="#0043ff"/><rect x="77" y="140" fill="#003fff"/><rect x="84" y="140" fill="#003bff"/><rect x="91" y="140" fill="#0037ff"/><rect x="98" y="140" fill="#0333ff"/><rect x="105" y="140" fill="#132eff"/><rect x="112" y="140" fill="#222aff"/><rect x="119" y="140" fill="#3226ff"/><rect x="126" y="140" fill="#4222ff"/><rect x="133" y="140" fill="#521dff"/><rect x="140" y="140" fill="#6219ff"/><rect x="147" y="140" fill="#7314ff"/><rect x="154" y="140" fill="#8410ff"/><rect x="161" y="140" fill="#940bff"/><rect x="168" y="140" fill="#a507ff"/><rect x="175" y="140" fill="#b602ff"/><rect x="182" y="140" fill="#c800ff"/><rect x="189" y="140" fill="#d900ff"/><rect x="196" y="140" fill="#eb00ff"/><rect x="203" y="140" fill="#fd00ff"/><rect x="210" y="140" fill="#ff00f0"/><rect x="217" y="140" fill="#ff00e0"/><rect x="224" y="140" fill="#ff00d3"/><rect x="231" y="140" fill="#ff00c7"/><rect x="238" y="140" fill="#ff00bc"/><rect x="245" y="140" fill="#ff00b2"/><rect x="252" y="140" fill="#ff00a9"/><rect x="259" y="140" fill="#ff00a1"/><rect x="266" y="140" fill="#ff0099"/><rect x="273" y="140" fill="#ff0092"/><rect x="280" y="140" fill="#ff008c"/><rect x="287" y="140" fill="#ff0086"/><rect x="294" y="140" fill="#ff0080"/><rect x="301" y="140" fill="#ff007b"/><rect x="308" y="140" fill="#ff0076"/><rect x="315" y="140" fill="#ff0072"/><rect x="322" y="140" fill="#ff006e"/><rect x="329" y="140" fill="#ff006a"/><rect x="336" y="140" fill="#ff0066"/><rect x="343" y="140" fill="#ff0062"/><rect x="350" y="140" fill="#ff005f"/><rect x="357" y="140" fill="#ff005c"/><rect x="364" y="140" fill="#ff0059"/><rect x="371" y="140" fill="#ff0056"/><rect x="378" y="140" fill="#ff0053"/><rect x="0" y="147" fill="#0060ff"/><rect x="7" y="147" fill="#005cff"/><rect x="14" y="147" fill="#0059ff"/><rect x="21" y="147" fill="#0055ff"/><rect x="28" y="147" fill="#0051ff"/><rect x="35" y="147" fill="#004eff"/><rect x="42" y="147" fill="#004aff"/><rect x="49" y="147" fill="#0046ff"/><rect x="56" y="147" fill="#0043ff"/><rect x="63" y="147" fill="#003fff"/><rect x="70" y="147" fill="#003bff"/><rect x="77" y="147" fill="#0037ff"/><rect x="84" y="147" fill="#0034ff"/><rect x="91" y="147" fill="#0030ff"/><rect x="98" y="147" fill="#012cff"/><rect x="105" y="147" fill="#0f28ff"/><rect x="112" y="147" fill="#1e24ff"/><rect x="119" y="147" fill="#2d20ff"/><rect x="126" y="147" fill="#3c1bff"/><rect x="133" y="147" fill="#4b17ff"/><rect x="140" y="147" fill="#5b13ff"/><rect x="147" y="147" fill="#6a0fff"/><rect x="154" y="147" fill="#7a0bff"/><rect x="161" y="147" fill="#8a06ff"/><rect x="168" y="147" fill="#9902ff"/><rect x="175" y="147" fill="#aa00ff"/><rect x="182" y="147" fill="#ba00ff"/><rect x="189" y="147" fill="#ca00ff"/><rect x="196" y="147" fill="#db00ff"/><rect x="203" y="147" fill="#ec00ff"/><rect x="210" y="147" fill="#fd00ff"/><rect x="217" y="147" fill="#ff00f1"/><rect x="224" y="147" fill="#ff00e2"/><rect x="231" y="147" fill="#ff00d5"/><rect x="238" y="147" fill="#ff00c9"/><rect x="245" y="147" fill="#ff00bf"/><rect x="252" y="147" fill="#ff00b5"/><rect x="259" y="147" fill="#ff00ac"/><rect x="266" y="147" fill="#ff00a4"/><rect x="273" y="147" fill="#ff009d"/><rect x="280" y="147" fill="#ff0096"/><rect x="287" y="147" fill="#ff0090"/><rect x="294" y="147" fill="#ff008a"/><rect x="301" y="147" fill="#ff0084"/><rect x="308" y="147" fill="#ff007f"/><rect x="315" y="147" fill="#ff007a"/><rect x="322" y="147" fill="#ff0076"/><rect x="329" y="147" fill="#ff0071"/><rect x="336" y="147" fill="#ff006e"/><rect x="343" y="147" fill="#ff006a"/><rect x="350" y="147" fill="#ff0066"/><rect x="357" y="147" fill="#ff0063"/><rect x="364" y="147" fill="#ff0060"/><rect x="371" y="147" fill="#ff005d"/><rect x="378" y="147" fill="#ff005a"/><rect x="0" y="154" fill="#0057ff"/><rect x="7" y="154" fill="#0054ff"/><rect x="14" y="154" fill="#0051ff"/><rect x="21" y="154" fill="#004dff"/><rect x="28" y="154" fill="#004aff"/><rect x="35" y="154" fill="#0046ff"/><rect x="42" y="154" fill="#0043ff"/><rect x="49" y="154" fill="#003fff"/><rect x="56" y="154" fill="#003cff"/><rect x="63" y="154" fill="#0038ff"/><rect x="70" y="154" fill="#0034ff"/><rect x="77" y="154" fill="#0031ff"/><rect x="84" y="154" fill="#002dff"/><rect x="91" y="154" fill="#0029ff"/><rect x="98" y="154" fill="#0025ff"/><rect x="105" y="154" fill="#0c22ff"/><rect x="112" y="154" fill="#1a1eff"/><rect x="119" y="154" fill="#281aff"/><rect x="126" y="154" fill="#3716ff"/><rect x="133" y="154" fill="#4512ff"/><rect x="140" y="154" fill="#540eff"/><rect x="147" y="154" fill="#620aff"/><rect x="154" y="154" fill="#7106ff"/><rect x="161" y="154" fill="#8002ff"/><rect x="168" y="154" fill="#8f00ff"/><rect x="175" y="154" fill="#9e00ff"/><rect x="182" y="154" fill="#ad00ff"/><rect x="189" y="154" fill="#bd00ff"/><rect x="196" y="154" fill="#cd00ff"/><rect x="203" y="154" fill="#dd00ff"/><rect x="210" y="154" fill="#ed00ff"/><rect x="217" y="154" fill="#fd00ff"/><rect x="224" y="154" fill="#ff00f2"/><rect x="231" y="154" fill="#ff00e4"/><rect x="238" y="154" fill="#ff00d7"/><rect x="245" y="154" fill="#ff00cc"/><rect x="252" y="154" fill="#ff00c1"/><rect x="259" y="154" fill="#ff00b8"/><rect x="266" y="154" fill="#ff00af"/><rect x="273" y="154" fill="#ff00a8"/><rect x="280" y="154" fill="#ff00a0"/><rect x="287" y="154" fill="#ff0099"/><rect x="294" y="154" fill="#ff0093"/><rect x="301" y="154" fill="#ff008d"/><rect x="308" y="154" fill="#ff0088"/><rect x="315" y="154" fill="#ff0083"/><rect x="322" y="154" fill="#ff007e"/><rect x="329" y="154" fill="#ff0079"/><rect x="336" y="154" fill="#ff0075"/><rect x="343" y="154" fill="#ff0071"/><rect x="350" y="154" fill="#ff006d"/><rect x="357" y="154" fill="#ff006a"/><rect x="364" y="154" fill="#ff0066"/><rect x="371" y="154" fill="#ff0063"/><rect x="378" y="154" fill="#ff0060"/><rect x="0" y="161" fill="#0050ff"/><rect x="7" y="161" fill="#004dff"/><rect x="14" y="161" fill="#0049ff"/><rect x="21" y="161" fill="#0046ff"/><rect x="28" y="161" fill="#0043ff"/><rect x="35" y="161" fill="#003fff"/><rect x="42" y="161" fill="#003cff"/><rect x="49" y="161" fill="#0039ff"/><rect x="56" y="161" fill="#0035ff"/><rect x="63" y="161" fill="#0032ff"/><rect x="70" y="161" fill="#002eff"/><rect x="77" y="161" fill="#002bff"/><rect x="84" y="161" fill="#0027ff"/><rect x="91" y="161" fill="#0024ff"/><rect x="98" y="161" fill="#0020ff"/><rect x="105" y="161" fill="#0a1cff"/><rect x="112" y="161" fill="#1719ff"/><rect x="119" y="161" fill="#2415ff"/><rect x="126" y="161" fill="#3211ff"/><rect x="133" y="161" fill="#3f0dff"/><rect x="140" y="161" fill="#4d0aff"/><rect x="147" y="161" fill="#5b06ff"/><rect x="154" y="161" fill="#6902ff"/><rect x="161" y="161" fill="#7700ff"/><rect x="168" y="161" fill="#8500ff"/><rect x="175" y="161" fill="#9400ff"/><rect x="182" y="161" fill="#a200ff"/><rect x="189" y="161" fill="#b100ff"/><rect x="196" y="161" fill="#c000ff"/><rect x="203" y="161" fill="#cf00ff"/><rect x="210" y="161" fill="#de00ff"/><rect x="217" y="161" fill="#ed00ff"/><rect x="224" y="161" fill="#fd00ff"/><rect x="231" y="161" fill="#ff00f3"/><rect x="238" y="161" fill="#ff00e5"/><rect x="245" y="161" fill="#ff00d9"/><rect x="252" y="161" fill="#ff00ce"/><rect x="259" y="161" fill="#ff00c4"/><rect x="266" y="161" fill="#ff00bb"/><rect x="273" y="161" fill="#ff00b2"/><rect x="280" y="161" fill="#ff00ab"/><rect x="287" y="161" fill="#ff00a3"/><rect x="294" y="161" fill="#ff009d"/><rect x="301" y="161" fill="#ff0096"/><rect x="308" y="161" fill="#ff0091"/><rect x="315" y="161" fill="#ff008b"/><rect x="322" y="161" fill="#ff0086"/><rect x="329" y="161" fill="#ff0081"/><rect x="336" y="161" fill="#ff007d"/><rect x="343" y="161" fill="#ff0079"/><rect x="350" y="161" fill="#ff0075"/><rect x="357" y="161" fill="#ff0071"/><rect x="364" y="161" fill="#ff006d"/><rect x="371" y="161" fill="#ff006a"/><rect x="378" y="161" fill="#ff0067"/><rect x="0" y="168" fill="#0049ff"/><rect x="7" y="168" fill="#0046ff"/><rect x="14" y="168" fill="#0043ff"/><rect x="21" y="168" fill="#0040ff"/><rect x="28" y="168" fill="#003cff"/><rect x="35" y="168" fill="#0039ff"/><rect x="42" y="168" fill="#0036ff"/><rect x="49" y="168" fill="#0033ff"/><rect x="56" y="168" fill="#002fff"/><rect x="63" y="168" fill="#002cff"/><rect x="70" y="168" fill="#0029ff"/><rect x="77" y="168" fill="#0025ff"/><rect x="84" y="168" fill="#0022ff"/><rect x="91" y="168" fill="#001eff"/><rect x="98" y="168" fill="#001bff"/><rect x="105" y="168" fill="#0717ff"/><rect x="112" y="168" fill="#1414ff"/><rect x="119" y="168" fill="#2110ff"/><rect x="126" y="168" fill="#2d0dff"/><rect x="133" y="168" fill="#3a09ff"/><rect x="140" y="168" fill="#4705ff"/><rect x="147" y="168" fill="#5502ff"/><rect x="154" y="168" fill="#6200ff"/><rect x="161" y="168" fill="#6f00ff"/><rect x="168" y="168" fill="#7d00ff"/><rect x="175" y="168" fill="#8a00ff"/><rect x="182" y="168" fill="#9800ff"/><rect x="189" y="168" fill="#a600ff"/><rect x="196" y="168" fill="#b400ff"/><rect x="203" y="168" fill="#c200ff"/><rect x="210" y="168" fill="#d100ff"/><rect x="217" y="168" fill="#df00ff"/><rect x="224" y="168" fill="#ee00ff"/><rect x="231" y="168" fill="#fc00ff"/><rect x="238" y="168" fill="#ff00f3"/><rect x="245" y="168" fill="#ff00e6"/><rect x="252" y="168" fill="#ff00db"/><rect x="259" y="168" fill="#ff00d0"/><rect x="266" y="168" fill="#ff00c6"/><rect x="273" y="168" fill="#ff00bd"/><rect x="280" y="168" fill="#ff00b5"/><rect x="287" y="168" fill="#ff00ad"/><rect x="294" y="168" fill="#ff00a6"/><rect x="301" y="168" fill="#ff00a0"/><rect x="308" y="168" fill="#ff009a"/><rect x="315" y="168" fill="#ff0094"/><rect x="322" y="168" fill="#ff008e"/><rect x="329" y="168" fill="#ff0089"/><rect x="336" y="168" fill="#ff0085"/><rect x="343" y="168" fill="#ff0080"/><rect x="350" y="168" fill="#ff007c"/><rect x="357" y="168" fill="#ff0078"/><rect x="364" y="168" fill="#ff0074"/><rect x="371" y="168" fill="#ff0071"/><rect x="378" y="168" fill="#ff006d"/><rect x="0" y="175" fill="#0043ff"/><rect x="7" y="175" fill="#0040ff"/><rect x="14" y="175" fill="#003dff"/><rect x="21" y="175" fill="#003aff"/><rect x="28" y="175" fill="#0036ff"/><rect x="35" y="175" fill="#0033ff"/><rect x="42" y="175" fill="#0030ff"/><rect x="49" y="175" fill="#002dff"/><rect x="56" y="175" fill="#002aff"/><rect x="63" y="175" fill="#0027ff"/><rect x="70" y="175" fill="#0023ff"/><rect x="77" y="175" fill="#0020ff"/><rect x="84" y="175" fill="#001dff"/><rect x="91" y="175" fill="#001aff"/><rect x="98" y="175" fill="#0016ff"/><rect x="105" y="175" fill="#0513ff"/><rect x="112" y="175" fill="#110fff"/><rect x="119" y="175" fill="#1d0cff"/><rect x="126" y="175" fill="#2909ff"/><rect x="133" y="175" fill="#3605ff"/><rect x="140" y="175" fill="#4202ff"/><rect x="147" y="175" fill="#4f00ff"/><rect x="154" y="175" fill="#5b00ff"/><rect x="161" y="175" fill="#6800ff"/><rect x="168" y="175" fill="#7500ff"/><rect x="175" y="175" fill="#8200ff"/><rect x="182" y="175" fill="#8f00ff"/><rect x="189" y="175" fill="#9c00ff"/><rect x="196" y="175" fill="#aa00ff"/><rect x="203" y="175" fill="#b700ff"/><rect x="210" y="175" fill="#c500ff"/><rect x="217" y="175" fill="#d200ff"/><rect x="224" y="175" fill="#e000ff"/><rect x="231" y="175" fill="#ee00ff"/><rect x="238" y="175" fill="#fc00ff"/><rect x="245" y="175" fill="#ff00f4"/><rect x="252" y="175" fill="#ff00e8"/><rect x="259" y="175" fill="#ff00dc"/><rect x="266" y="175" fill="#ff00d2"/><rect x="273" y="175" fill="#ff00c8"/><rect x="280" y="175" fill="#ff00c0"/><rect x="287" y="175" fill="#ff00b8"/><rect x="294" y="175" fill="#ff00b0"/><rect x="301" y="175" fill="#ff00a9"/><rect x="308" y="175" fill="#ff00a3"/><rect x="315" y="175" fill="#ff009d"/><rect x="322" y="175" fill="#ff0097"/><rect x="329" y="175" fill="#ff0091"/><rect x="336" y="175" fill="#ff008c"/><rect x="343" y="175" fill="#ff0088"/><rect x="350" y="175" fill="#ff0083"/><rect x="357" y="175" fill="#ff007f"/><rect x="364" y="175" fill="#ff007b"/><rect x="371" y="175" fill="#ff0077"/><rect x="378" y="175" fill="#ff0074"/><rect x="0" y="182" fill="#003dff"/><rect x="7" y="182" fill="#003aff"/><rect x="14" y="182" fill="#0037ff"/><rect x="21" y="182" fill="#0034ff"/><rect x="28" y="182" fill="#0031ff"/><rect x="35" y="182" fill="#002eff"/><rect x="42" y="182" fill="#002bff"/><rect x="49" y="182" fill="#0028ff"/><rect x="56" y="182" fill="#0025ff"/><rect x="63" y="182" fill="#0022ff"/><rect x="70" y="182" fill="#001fff"/><rect x="77" y="182" fill="#001cff"/><rect x="84" y="182" fill="#0018ff"/><rect x="91" y="182" fill="#0015ff"/><rect x="98" y="182" fill="#0012ff"/><rect x="105" y="182" fill="#030fff"/><rect x="112" y="182" fill="#0e0cff"/><rect x="119" y="182" fill="#1a08ff"/><rect x="126" y="182" fill="#2605ff"/><rect x="133" y="182" fill="#3102ff"/><rect x="140" y="182" fill="#3d00ff"/><rect x="147" y="182" fill="#4900ff"/><rect x="154" y="182" fill="#5500ff"/><rect x="161" y="182" fill="#6200ff"/><rect x="168" y="182" fill="#6e00ff"/><rect x="175" y="182" fill="#7a00ff"/><rect x="182" y="182" fill="#8700ff"/><rect x="189" y="182" fill="#9300ff"/><rect x="196" y="182" fill="#a000ff"/><rect x="203" y="182" fill="#ad00ff"/><rect x="210" y="182" fill="#ba00ff"/><rect x="217" y="182" fill="#c700ff"/><rect x="224" y="182" fill="#d400ff"/><rect x="231" y="182" fill="#e100ff"/><rect x="238" y="182" fill="#ef00ff"/><rect x="245" y="182" fill="#fc00ff"/><rect x="252" y="182" fill="#ff00f5"/><rect x="259" y="182" fill="#ff00e9"/><rect x="266" y="182" fill="#ff00de"/><rect x="273" y="182" fill="#ff00d4"/><rect x="280" y="182" fill="#ff00ca"/><rect x="287" y="182" fill="#ff00c2"/><rect x="294" y="182" fill="#ff00ba"/><rect x="301" y="182" fill="#ff00b3"/><rect x="308" y="182" fill="#ff00ac"/><rect x="315" y="182" fill="#ff00a5"/><rect x="322" y="182" fill="#ff009f"/><rect x="329" y="182" fill="#ff009a"/><rect x="336" y="182" fill="#ff0094"/><rect x="343" y="182" fill="#ff008f"/><rect x="350" y="182" fill="#ff008b"/><rect x="357" y="182" fill="#ff0086"/><rect x="364" y="182" fill="#ff0082"/><rect x="371" y="182" fill="#ff007e"/><rect x="378" y="182" fill="#ff007a"/><rect x="0" y="189" fill="#0038ff"/><rect x="7" y="189" fill="#0035ff"/><rect x="14" y="189" fill="#0032ff"/><rect x="21" y="189" fill="#002fff"/><rect x="28" y="189" fill="#002cff"/><rect x="35" y="189" fill="#0029ff"/><rect x="42" y="189" fill="#0026ff"/><rect x="49" y="189" fill="#0023ff"/><rect x="56" y="189" fill="#0020ff"/><rect x="63" y="189" fill="#001dff"/><rect x="70" y="189" fill="#001aff"/><rect x="77" y="189" fill="#0017ff"/><rect x="84" y="189" fill="#0014ff"/><rect x="91" y="189" fill="#0011ff"/><rect x="98" y="189" fill="#000eff"/><rect x="105" y="189" fill="#010bff"/><rect x="112" y="189" fill="#0c08ff"/><rect x="119" y="189" fill="#1705ff"/><rect x="126" y="189" fill="#2202ff"/><rect x="133" y="189" fill="#2e00ff"/><rect x="140" y="189" fill="#3900ff"/><rect x="147" y="189" fill="#4400ff"/><rect x="154" y="189" fill="#5000ff"/><rect x="161" y="189" fill="#5c00ff"/><rect x="168" y="189" fill="#6700ff"/><rect x="175" y="189" fill="#7300ff"/><rect x="182" y="189" fill="#7f00ff"/><rect x="189" y="189" fill="#8b00ff"/><rect x="196" y="189" fill="#9700ff"/><rect x="203" y="189" fill="#a400ff"/><rect x="210" y="189" fill="#b000ff"/><rect x="217" y="189" fill="#bc00ff"/><rect x="224" y="189" fill="#c900ff"/><rect x="231" y="189" fill="#d500ff"/><rect x="238" y="189" fill="#e200ff"/><rect x="245" y="189" fill="#ef00ff"/><rect x="252" y="189" fill="#fc00ff"/><rect x="259" y="189" fill="#ff00f5"/><rect x="266" y="189" fill="#ff00ea"/><rect x="273" y="189" fill="#ff00df"/><rect x="280" y="189" fill="#ff00d5"/><rect x="287" y="189" fill="#ff00cc"/><rect x="294" y="189" fill="#ff00c4"/><rect x="301" y="189" fill="#ff00bc"/><rect x="308" y="189" fill="#ff00b5"/><rect x="315" y="189" fill="#ff00ae"/><rect x="322" y="189" fill="#ff00a8"/><rect x="329" y="189" fill="#ff00a2"/><rect x="336" y="189" fill="#ff009c"/><rect x="343" y="189" fill="#ff0097"/><rect x="350" y="189" fill="#ff0092"/><rect x="357" y="189" fill="#ff008e"/><rect x="364" y="189" fill="#ff0089"/><rect x="371" y="189" fill="#ff0085"/><rect x="378" y="189" fill="#ff0081"/><rect x="0" y="196" fill="#0033ff"/><rect x="7" y="196" fill="#0030ff"/><rect x="14" y="196" fill="#002dff"/><rect x="21" y="196" fill="#002aff"/><rect x="28" y="196" fill="#0028ff"/><rect x="35" y="196" fill="#0025ff"/><rect x="42" y="196" fill="#0022ff"/><rect x="49" y="196" fill="#001fff"/><rect x="56" y="196" fill="#001cff"/><rect x="63" y="196" fill="#0019ff"/><rect x="70" y="196" fill="#0016ff"/><rect x="77" y="196" fill="#0013ff"/><rect x="84" y="196" fill="#0011ff"/><rect x="91" y="196" fill="#000eff"/><rect x="98" y="196" fill="#000bff"/><rect x="105" y="196" fill="#0008ff"/><rect x="112" y="196" fill="#0a05ff"/><rect x="119" y="196" fill="#1401ff"/><rect x="126" y="196" fill="#1f00ff"/><rect x="133" y="196" fill="#2a00ff"/><rect x="140" y="196" fill="#3500ff"/><rect x="147" y="196" fill="#4000ff"/><rect x="154" y="196" fill="#4b00ff"/><rect x="161" y="196" fill="#5600ff"/><rect x="168" y="196" fill="#6100ff"/><rect x="175" y="196" fill="#6d00ff"/><rect x="182" y="196" fill="#7800ff"/><rect x="189" y="196" fill="#8400ff"/><rect x="196" y="196" fill="#8f00ff"/><rect x="203" y="196" fill="#9b00ff"/><rect x="210" y="196" fill="#a700ff"/><rect x="217" y="196" fill="#b300ff"/><rect x="224" y="196" fill="#bf00ff"/><rect x="231" y="196" fill="#cb00ff"/><rect x="238" y="196" fill="#d700ff"/><rect x="245" y="196" fill="#e300ff"/><rect x="252" y="196" fill="#ef00ff"/><rect x="259" y="196" fill="#fc00ff"/><rect x="266" y="196" fill="#ff00f6"/><rect x="273" y="196" fill="#ff00eb"/><rect x="280" y="196" fill="#ff00e0"/><rect x="287" y="196" fill="#ff00d7"/><rect x="294" y="196" fill="#ff00ce"/><rect x="301" y="196" fill="#ff00c6"/><rect x="308" y="196" fill="#ff00be"/><rect x="315" y="196" fill="#ff00b7"/><rect x="322" y="196" fill="#ff00b1"/><rect x="329" y="196" fill="#ff00aa"/><rect x="336" y="196" fill="#ff00a4"/><rect x="343" y="196" fill="#ff009f"/><rect x="350" y="196" fill="#ff009a"/><rect x="357" y="196" fill="#ff0095"/><rect x="364" y="196" fill="#ff0090"/><rect x="371" y="196" fill="#ff008c"/><rect x="378" y="196" fill="#ff0088"/><rect x="0" y="203" fill="#002eff"/><rect x="7" y="203" fill="#002bff"/><rect x="14" y="203" fill="#0029ff"/><rect x="21" y="203" fill="#0026ff"/><rect x="28" y="203" fill="#0023ff"/><rect x="35" y="203" fill="#0021ff"/><rect x="42" y="203" fill="#001eff"/><rect x="49" y="203" fill="#001bff"/><rect x="56" y="203" fill="#0018ff"/><rect x="63" y="203" fill="#0016ff"/><rect x="70" y="203" fill="#0013ff"/><rect x="77" y="203" fill="#0010ff"/><rect x="84" y="203" fill="#000dff"/><rect x="91" y="203" fill="#000aff"/><rect x="98" y="203" fill="#0007ff"/><rect x="105" y="203" fill="#0004ff"/><rect x="112" y="203" fill="#0801ff"/><rect x="119" y="203" fill="#1200ff"/><rect x="126" y="203" fill="#1c00ff"/><rect x="133" y="203" fill="#2700ff"/><rect x="140" y="203" fill="#3100ff"/><rect x="147" y="203" fill="#3c00ff"/><rect x="154" y="203" fill="#4600ff"/><rect x="161" y="203" fill="#5100ff"/><rect x="168" y="203" fill="#5c00ff"/><rect x="175" y="203" fill="#6700ff"/><rect x="182" y="203" fill="#7200ff"/><rect x="189" y="203" fill="#7d00ff"/><rect x="196" y="203" fill="#8800ff"/><rect x="203" y="203" fill="#9300ff"/><rect x="210" y="203" fill="#9e00ff"/><rect x="217" y="203" fill="#aa00ff"/><rect x="224" y="203" fill="#b500ff"/><rect x="231" y="203" fill="#c100ff"/><rect x="238" y="203" fill="#cc00ff"/><rect x="245" y="203" fill="#d800ff"/><rect x="252" y="203" fill="#e400ff"/><rect x="259" y="203" fill="#f000ff"/><rect x="266" y="203" fill="#fc00ff"/><rect x="273" y="203" fill="#ff00f7"/><rect x="280" y="203" fill="#ff00ec"/><rect x="287" y="203" fill="#ff00e2"/><rect x="294" y="203" fill="#ff00d8"/><rect x="301" y="203" fill="#ff00d0"/><rect x="308" y="203" fill="#ff00c8"/><rect x="315" y="203" fill="#ff00c0"/><rect x="322" y="203" fill="#ff00b9"/><rect x="329" y="203" fill="#ff00b3"/><rect x="336" y="203" fill="#ff00ad"/><rect x="343" y="203" fill="#ff00a7"/><rect x="350" y="203" fill="#ff00a1"/><rect x="357" y="203" fill="#ff009c"/><rect x="364" y="203" fill="#ff0097"/><rect x="371" y="203" fill="#ff0093"/><rect x="378" y="203" fill="#ff008e"/><rect x="0" y="210" fill="#002aff"/><rect x="7" y="210" fill="#0027ff"/><rect x="14" y="210" fill="#0025ff"/><rect x="21" y="210" fill="#0022ff"/><rect x="28" y="210" fill="#001fff"/><rect x="35" y="210" fill="#001dff"/><rect x="42" y="210" fill="#001aff"/><rect x="49" y="210" fill="#0017ff"/><rect x="56" y="210" fill="#0015ff"/><rect x="63" y="210" fill="#0012ff"/><rect x="70" y="210" fill="#000fff"/><rect x="77" y="210" fill="#000dff"/><rect x="84" y="210" fill="#000aff"/><rect x="91" y="210" fill="#0007ff"/><rect x="98" y="210" fill="#0004ff"/><rect x="105" y="210" fill="#0001ff"/><rect x="112" y="210" fill="#0600ff"/><rect x="119" y="210" fill="#1000ff"/><rect x="126" y="210" fill="#1a00ff"/><rect x="133" y="210" fill="#2400ff"/><rect x="140" y="210" fill="#2e00ff"/><rect x="147" y="210" fill="#3800ff"/><rect x="154" y="210" fill="#4200ff"/><rect x="161" y="210" fill="#4c00ff"/><rect x="168" y="210" fill="#5700ff"/><rect x="175" y="210" fill="#6100ff"/><rect x="182" y="210" fill="#6c00ff"/><rect x="189" y="210" fill="#7600ff"/><rect x="196" y="210" fill="#8100ff"/><rect x="203" y="210" fill="#8c00ff"/><rect x="210" y="210" fill="#9700ff"/><rect x="217" y="210" fill="#a200ff"/><rect x="224" y="210" fill="#ad00ff"/><rect x="231" y="210" fill="#b800ff"/><rect x="238" y="210" fill="#c300ff"/><rect x="245" y="210" fill="#ce00ff"/><rect x="252" y="210" fill="#d900ff"/><rect x="259" y="210" fill="#e500ff"/><rect x="266" y="210" fill="#f000ff"/><rect x="273" y="210" fill="#fc00ff"/><rect x="280" y="210" fill="#ff00f7"/><rect x="287" y="210" fill="#ff00ec"/><rect x="294" y="210" fill="#ff00e3"/><rect x="301" y="210" fill="#ff00da"/><rect x="308" y="210" fill="#ff00d1"/><rect x="315" y="210" fill="#ff00ca"/><rect x="322" y="210" fill="#ff00c2"/><rect x="329" y="210" fill="#ff00bb"/><rect x="336" y="210" fill="#ff00b5"/><rect x="343" y="210" fill="#ff00af"/><rect x="350" y="210" fill="#ff00a9"/><rect x="357" y="210" fill="#ff00a4"/><rect x="364" y="210" fill="#ff009f"/><rect x="371" y="210" fill="#ff009a"/><rect x="378" y="210" fill="#ff0095"/><rect x="0" y="217" fill="#0026ff"/><rect x="7" y="217" fill="#0023ff"/><rect x="14" y="217" fill="#0021ff"/><rect x="21" y="217" fill="#001eff"/><rect x="28" y="217" fill="#001cff"/><rect x="35" y="217" fill="#0019ff"/><rect x="42" y="217" fill="#0017ff"/><rect x="49" y="217" fill="#0014ff"/><rect x="56" y="217" fill="#0011ff"/><rect x="63" y="217" fill="#000fff"/><rect x="70" y="217" fill="#000cff"/><rect x="77" y="217" fill="#0009ff"/><rect x="84" y="217" fill="#0007ff"/><rect x="91" y="217" fill="#0004ff"/><rect x="98" y="217" fill="#0001ff"/><rect x="105" y="217" fill="#0000ff"/><rect x="112" y="217" fill="#0400ff"/><rect x="119" y="217" fill="#0e00ff"/><rect x="126" y="217" fill="#1700ff"/><rect x="133" y="217" fill="#2100ff"/><rect x="140" y="217" fill="#2b00ff"/><rect x="147" y="217" fill="#3400ff"/><rect x="154" y="217" fill="#3e00ff"/><rect x="161" y="217" fill="#4800ff"/><rect x="168" y="217" fill="#5200ff"/><rect x="175" y="217" fill="#5c00ff"/><rect x="182" y="217" fill="#6600ff"/><rect x="189" y="217" fill="#7000ff"/><rect x="196" y="217" fill="#7b00ff"/><rect x="203" y="217" fill="#8500ff"/><rect x="210" y="217" fill="#8f00ff"/><rect x="217" y="217" fill="#9a00ff"/><rect x="224" y="217" fill="#a400ff"/><rect x="231" y="217" fill="#af00ff"/><rect x="238" y="217" fill="#ba00ff"/><rect x="245" y="217" fill="#c500ff"/><rect x="252" y="217" fill="#cf00ff"/><rect x="259" y="217" fill="#da00ff"/><rect x="266" y="217" fill="#e500ff"/><rect x="273" y="217" fill="#f000ff"/><rect x="280" y="217" fill="#fc00ff"/><rect x="287" y="217" fill="#ff00f7"/><rect x="294" y="217" fill="#ff00ed"/><rect x="301" y="217" fill="#ff00e4"/><rect x="308" y="217" fill="#ff00db"/><rect x="315" y="217" fill="#ff00d3"/><rect x="322" y="217" fill="#ff00cb"/><rect x="329" y="217" fill="#ff00c4"/><rect x="336" y="217" fill="#ff00bd"/><rect x="343" y="217" fill="#ff00b7"/><rect x="350" y="217" fill="#ff00b1"/><rect x="357" y="217" fill="#ff00ab"/><rect x="364" y="217" fill="#ff00a6"/><rect x="371" y="217" fill="#ff00a1"/><rect x="378" y="217" fill="#ff009c"/><rect x="0" y="224" fill="#0022ff"/><rect x="7" y="224" fill="#0020ff"/><rect x="14" y="224" fill="#001dff"/><rect x="21" y="224" fill="#001bff"/><rect x="28" y="224" fill="#0018ff"/><rect x="35" y="224" fill="#0016ff"/><rect x="42" y="224" fill="#0013ff"/><rect x="49" y="224" fill="#0011ff"/><rect x="56" y="224" fill="#000eff"/><rect x="63" y="224" fill="#000cff"/><rect x="70" y="224" fill="#0009ff"/><rect x="77" y="224" fill="#0007ff"/><rect x="84" y="224" fill="#0004ff"/><rect x="91" y="224" fill="#0001ff"/><rect x="98" y="224" fill="#0000ff"/><rect x="105" y="224" fill="#0000ff"/><rect x="112" y="224" fill="#0200ff"/><rect x="119" y="224" fill="#0c00ff"/><rect x="126" y="224" fill="#1500ff"/><rect x="133" y="224" fill="#1e00ff"/><rect x="140" y="224" fill="#2800ff"/><rect x="147" y="224" fill="#3100ff"/><rect x="154" y="224" fill="#3b00ff"/><rect x="161" y="224" fill="#4400ff"/><rect x="168" y="224" fill="#4e00ff"/><rect x="175" y="224" fill="#5700ff"/><rect x="182" y="224" fill="#6100ff"/><rect x="189" y="224" fill="#6b00ff"/><rect x="196" y="224" fill="#7500ff"/><rect x="203" y="224" fill="#7f00ff"/><rect x="210" y="224" fill="#8900ff"/><rect x="217" y="224" fill="#9300ff"/><rect x="224" y="224" fill="#9d00ff"/><rect x="231" y="224" fill="#a700ff"/><rect x="238" y="224" fill="#b200ff"/><rect x="245" y="224" fill="#bc00ff"/><rect x="252" y="224" fill="#c600ff"/><rect x="259" y="224" fill="#d100ff"/><rect x="266" y="224" fill="#db00ff"/><rect x="273" y="224" fill="#e600ff"/><rect x="280" y="224" fill="#f100ff"/><rect x="287" y="224" fill="#fb00ff"/><rect x="294" y="224" fill="#ff00f8"/><rect x="301" y="224" fill="#ff00ee"/><rect x="308" y="224" fill="#ff00e5"/><rect x="315" y="224" fill="#ff00dc"/><rect x="322" y="224" fill="#ff00d4"/><rect x="329" y="224" fill="#ff00cd"/><rect x="336" y="224" fill="#ff00c6"/><rect x="343" y="224" fill="#ff00bf"/><rect x="350" y="224" fill="#ff00b9"/><rect x="357" y="224" fill="#ff00b3"/><rect x="364" y="224" fill="#ff00ad"/><rect x="371" y="224" fill="#ff00a8"/><rect x="378" y="224" fill="#ff00a3"/><rect x="0" y="231" fill="#001fff"/><rect x="7" y="231" fill="#001cff"/><rect x="14" y="231" fill="#001aff"/><rect x="21" y="231" fill="#0017ff"/><rect x="28" y="231" fill="#0015ff"/><rect x="35" y="231" fill="#0013ff"/><rect x="42" y="231" fill="#0010ff"/><rect x="49" y="231" fill="#000eff"/><rect x="56" y="231" fill="#000bff"/><rect x="63" y="231" fill="#0009ff"/><rect x="70" y="231" fill="#0006ff"/><rect x="77" y="231" fill="#0004ff"/><rect x="84" y="231" fill="#0001ff"/><rect x="91" y="231" fill="#0000ff"/><rect x="98" y="231" fill="#0000ff"/><rect x="105" y="231" fill="#0000ff"/><rect x="112" y="231" fill="#0100ff"/><rect x="119" y="231" fill="#0a00ff"/><rect x="126" y="231" fill="#1300ff"/><rect x="133" y="231" fill="#1c00ff"/><rect x="140" y="231" fill="#2500ff"/><rect x="147" y="231" fill="#2e00ff"/><rect x="154" y="231" fill="#3700ff"/><rect x="161" y="231" fill="#4000ff"/><rect x="168" y="231" fill="#4a00ff"/><rect x="175" y="231" fill="#5300ff"/><rect x="182" y="231" fill="#5c00ff"/><rect x="189" y="231" fill="#6600ff"/><rect x="196" y="231" fill="#6f00ff"/><rect x="203" y="231" fill="#7900ff"/><rect x="210" y="231" fill="#8300ff"/><rect x="217" y="231" fill="#8c00ff"/><rect x="224" y="231" fill="#9600ff"/><rect x="231" y="231" fill="#a000ff"/><rect x="238" y="231" fill="#aa00ff"/><rect x="245" y="231" fill="#b400ff"/><rect x="252" y="231" fill="#be00ff"/><rect x="259" y="231" fill="#c800ff"/><rect x="266" y="231" fill="#d200ff"/><rect x="273" y="231" fill="#dc00ff"/><rect x="280" y="231" fill="#e700ff"/><rect x="287" y="231" fill="#f100ff"/><rect x="294" y="231" fill="#fb00ff"/><rect x="301" y="231" fill="#ff00f8"/><rect x="308" y="231" fill="#ff00ef"/><rect x="315" y="231" fill="#ff00e6"/><rect x="322" y="231" fill="#ff00dd"/><rect x="329" y="231" fill="#ff00d6"/><rect x="336" y="231" fill="#ff00ce"/><rect x="343" y="231" fill="#ff00c7"/><rect x="350" y="231" fill="#ff00c1"/><rect x="357" y="231" fill="#ff00bb"/><rect x="364" y="231" fill="#ff00b5"/><rect x="371" y="231" fill="#ff00af"/><rect x="378" y="231" fill="#ff00aa"/><rect x="0" y="238" fill="#001bff"/><rect x="7" y="238" fill="#0019ff"/><rect x="14" y="238" fill="#0017ff"/><rect x="21" y="238" fill="#0014ff"/><rect x="28" y="238" fill="#0012ff"/><rect x="35" y="238" fill="#0010ff"/><rect x="42" y="238" fill="#000dff"/><rect x="49" y="238" fill="#000bff"/><rect x="56" y="238" fill="#0009ff"/><rect x="63" y="238" fill="#0006ff"/><rect x="70" y="238" fill="#0004ff"/><rect x="77" y="238" fill="#0001ff"/><rect x="84" y="238" fill="#0000ff"/><rect x="91" y="238" fill="#0000ff"/><rect x="98" y="238" fill="#0000ff"/><rect x="105" y="238" fill="#0000ff"/><rect x="112" y="238" fill="#0000ff"/><rect x="119" y="238" fill="#0800ff"/><rect x="126" y="238" fill="#1100ff"/><rect x="133" y="238" fill="#1900ff"/><rect x="140" y="238" fill="#2200ff"/><rect x="147" y="238" fill="#2b00ff"/><rect x="154" y="238" fill="#3400ff"/><rect x="161" y="238" fill="#3d00ff"/><rect x="168" y="238" fill="#4600ff"/><rect x="175" y="238" fill="#4f00ff"/><rect x="182" y="238" fill="#5800ff"/><rect x="189" y="238" fill="#6100ff"/><rect x="196" y="238" fill="#6a00ff"/><rect x="203" y="238" fill="#7300ff"/><rect x="210" y="238" fill="#7d00ff"/><rect x="217" y="238" fill="#8600ff"/><rect x="224" y="238" fill="#9000ff"/><rect x="231" y="238" fill="#9900ff"/><rect x="238" y="238" fill="#a300ff"/><rect x="245" y="238" fill="#ac00ff"/><rect x="252" y="238" fill="#b600ff"/><rect x="259" y="238" fill="#c000ff"/><rect x="266" y="238" fill="#c900ff"/><rect x="273" y="238" fill="#d300ff"/><rect x="280" y="238" fill="#dd00ff"/><rect x="287" y="238" fill="#e700ff"/><rect x="294" y="238" fill="#f100ff"/><rect x="301" y="238" fill="#fb00ff"/><rect x="308" y="238" fill="#ff00f9"/><rect x="315" y="238" fill="#ff00ef"/><rect x="322" y="238" fill="#ff00e7"/><rect x="329" y="238" fill="#ff00de"/><rect x="336" y="238" fill="#ff00d7"/><rect x="343" y="238" fill="#ff00d0"/><rect x="350" y="238" fill="#ff00c9"/><rect x="357" y="238" fill="#ff00c2"/><rect x="364" y="238" fill="#ff00bc"/><rect x="371" y="238" fill="#ff00b7"/><rect x="378" y="238" fill="#ff00b1"/><rect x="0" y="245" fill="#0018ff"/><rect x="7" y="245" fill="#0016ff"/><rect x="14" y="245" fill="#0014ff"/><rect x="21" y="245" fill="#0011ff"/><rect x="28" y="245" fill="#000fff"/><rect x="35" y="245" fill="#000dff"/><rect x="42" y="245" fill="#000bff"/><rect x="49" y="245" fill="#0008ff"/><rect x="56" y="245" fill="#0006ff"/><rect x="63" y="245" fill="#0004ff"/><rect x="70" y="245" fill="#0001ff"/><rect x="77" y="245" fill="#0000ff"/><rect x="84" y="245" fill="#0000ff"/><rect x="91" y="245" fill="#0000ff"/><rect x="98" y="245" fill="#0000ff"/><rect x="105" y="245" fill="#0000ff"/><rect x="112" y="245" fill="#0000ff"/><rect x="119" y="245" fill="#0600ff"/><rect x="126" y="245" fill="#0f00ff"/><rect x="133" y="245" fill="#1700ff"/><rect x="140" y="245" fill="#2000ff"/><rect x="147" y="245" fill="#2800ff"/><rect x="154" y="245" fill="#3100ff"/><rect x="161" y="245" fill="#3900ff"/><rect x="168" y="245" fill="#4200ff"/><rect x="175" y="245" fill="#4b00ff"/><rect x="182" y="245" fill="#5400ff"/><rect x="189" y="245" fill="#5d00ff"/><rect x="196" y="245" fill="#6500ff"/><rect x="203" y="245" fill="#6e00ff"/><rect x="210" y="245" fill="#7700ff"/><rect x="217" y="245" fill="#8000ff"/><rect x="224" y="245" fill="#8a00ff"/><rect x="231" y="245" fill="#9300ff"/><rect x="238" y="245" fill="#9c00ff"/><rect x="245" y="245" fill="#a500ff"/><rect x="252" y="245" fill="#af00ff"/><rect x="259" y="245" fill="#b800ff"/><rect x="266" y="245" fill="#c100ff"/><rect x="273" y="245" fill="#cb00ff"/><rect x="280" y="245" fill="#d400ff"/><rect x="287" y="245" fill="#de00ff"/><rect x="294" y="245" fill="#e800ff"/><rect x="301" y="245" fill="#f100ff"/><rect x="308" y="245" fill="#fb00ff"/><rect x="315" y="245" fill="#ff00f9"/><rect x="322" y="245" fill="#ff00f0"/><rect x="329" y="245" fill="#ff00e7"/><rect x="336" y="245" fill="#ff00df"/><rect x="343" y="245" fill="#ff00d8"/><rect x="350" y="245" fill="#ff00d1"/><rect x="357" y="245" fill="#ff00ca"/><rect x="364" y="245" fill="#ff00c4"/><rect x="371" y="245" fill="#ff00be"/><rect x="378" y="245" fill="#ff00b8"/><rect x="0" y="252" fill="#0015ff"/><rect x="7" y="252" fill="#0013ff"/><rect x="14" y="252" fill="#0011ff"/><rect x="21" y="252" fill="#000fff"/><rect x="28" y="252" fill="#000cff"/><rect x="35" y="252" fill="#000aff"/><rect x="42" y="252" fill="#0008ff"/><rect x="49" y="252" fill="#0006ff"/><rect x="56" y="252" fill="#0003ff"/><rect x="63" y="252" fill="#0001ff"/><rect x="70" y="252" fill="#0000ff"/><rect x="77" y="252" fill="#0000ff"/><rect x="84" y="252" fill="#0000ff"/><rect x="91" y="252" fill="#0000ff"/><rect x="98" y="252" fill="#0000ff"/><rect x="105" y="252" fill="#0000ff"/><rect x="112" y="252" fill="#0000ff"/><rect x="119" y="252" fill="#0500ff"/><rect x="126" y="252" fill="#0d00ff"/><rect x="133" y="252" fill="#1500ff"/><rect x="140" y="252" fill="#1d00ff"/><rect x="147" y="252" fill="#2600ff"/><rect x="154" y="252" fill="#2e00ff"/><rect x="161" y="252" fill="#3600ff"/><rect x="168" y="252" fill="#3f00ff"/><rect x="175" y="252" fill="#4700ff"/><rect x="182" y="252" fill="#5000ff"/><rect x="189" y="252" fill="#5800ff"/><rect x="196" y="252" fill="#6100ff"/><rect x="203" y="252" fill="#6a00ff"/><rect x="210" y="252" fill="#7200ff"/><rect x="217" y="252" fill="#7b00ff"/><rect x="224" y="252" fill="#8400ff"/><rect x="231" y="252" fill="#8d00ff"/><rect x="238" y="252" fill="#9600ff"/><rect x="245" y="252" fill="#9f00ff"/><rect x="252" y="252" fill="#a800ff"/><rect x="259" y="252" fill="#b100ff"/><rect x="266" y="252" fill="#ba00ff"/><rect x="273" y="252" fill="#c300ff"/><rect x="280" y="252" fill="#cc00ff"/><rect x="287" y="252" fill="#d500ff"/><rect x="294" y="252" fill="#df00ff"/><rect x="301" y="252" fill="#e800ff"/><rect x="308" y="252" fill="#f200ff"/><rect x="315" y="252" fill="#fb00ff"/><rect x="322" y="252" fill="#ff00f9"/><rect x="329" y="252" fill="#ff00f1"/><rect x="336" y="252" fill="#ff00e8"/><rect x="343" y="252" fill="#ff00e0"/><rect x="350" y="252" fill="#ff00d9"/><rect x="357" y="252" fill="#ff00d2"/><rect x="364" y="252" fill="#ff00cc"/><rect x="371" y="252" fill="#ff00c5"/><rect x="378" y="252" fill="#ff00c0"/><rect x="0" y="259" fill="#0013ff"/><rect x="7" y="259" fill="#0010ff"/><rect x="14" y="259" fill="#000eff"/><rect x="21" y="259" fill="#000cff"/><rect x="28" y="259" fill="#000aff"/><rect x="35" y="259" fill="#0008ff"/><rect x="42" y="259" fill="#0006ff"/><rect x="49" y="259" fill="#0003ff"/><rect x="56" y="259" fill="#0001ff"/><rect x="63" y="259" fill="#0000ff"/><rect x="70" y="259" fill="#0000ff"/><rect x="77" y="259" fill="#0000ff"/><rect x="84" y="259" fill="#0000ff"/><rect x="91" y="259" fill="#0000ff"/><rect x="98" y="259" fill="#0000ff"/><rect x="105" y="259" fill="#0000ff"/><rect x="112" y="259" fill="#0000ff"/><rect x="119" y="259" fill="#0300ff"/><rect x="126" y="259" fill="#0b00ff"/><rect x="133" y="259" fill="#1300ff"/><rect x="140" y="259" fill="#1b00ff"/><rect x="147" y="259" fill="#2300ff"/><rect x="154" y="259" fill="#2b00ff"/><rect x="161" y="259" fill="#3300ff"/><rect x="168" y="259" fill="#3c00ff"/><rect x="175" y="259" fill="#4400ff"/><rect x="182" y="259" fill="#4c00ff"/><rect x="189" y="259" fill="#5400ff"/><rect x="196" y="259" fill="#5d00ff"/><rect x="203" y="259" fill="#6500ff"/><rect x="210" y="259" fill="#6d00ff"/><rect x="217" y="259" fill="#7600ff"/><rect x="224" y="259" fill="#7e00ff"/><rect x="231" y="259" fill="#8700ff"/><rect x="238" y="259" fill="#9000ff"/><rect x="245" y="259" fill="#9800ff"/><rect x="252" y="259" fill="#a100ff"/><rect x="259" y="259" fill="#aa00ff"/><rect x="266" y="259" fill="#b300ff"/><rect x="273" y="259" fill="#bc00ff"/><rect x="280" y="259" fill="#c400ff"/><rect x="287" y="259" fill="#cd00ff"/><rect x="294" y="259" fill="#d600ff"/><rect x="301" y="259" fill="#e000ff"/><rect x="308" y="259" fill="#e900ff"/><rect x="315" y="259" fill="#f200ff"/><rect x="322" y="259" fill="#fb00ff"/><rect x="329" y="259" fill="#ff00fa"/><rect x="336" y="259" fill="#ff00f1"/><rect x="343" y="259" fill="#ff00e9"/><rect x="350" y="259" fill="#ff00e1"/><rect x="357" y="259" fill="#ff00da"/><rect x="364" y="259" fill="#ff00d3"/><rect x="371" y="259" fill="#ff00cd"/><rect x="378" y="259" fill="#ff00c7"/><rect x="0" y="266" fill="#0010ff"/><rect x="7" y="266" fill="#000eff"/><rect x="14" y="266" fill="#000cff"/><rect x="21" y="266" fill="#000aff"/><rect x="28" y="266" fill="#0008ff"/><rect x="35" y="266" fill="#0005ff"/><rect x="42" y="266" fill="#0003ff"/><rect x="49" y="266" fill="#0001ff"/><rect x="56" y="266" fill="#0000ff"/><rect x="63" y="266" fill="#0000ff"/><rect x="70" y="266" fill="#0000ff"/><rect x="77" y="266" fill="#0000ff"/><rect x="84" y="266" fill="#0000ff"/><rect x="91" y="266" fill="#0000ff"/><rect x="98" y="266" fill="#0000ff"/><rect x="105" y="266" fill="#0000ff"/><rect x="112" y="266" fill="#0000ff"/><rect x="119" y="266" fill="#0200ff"/><rect x="126" y="266" fill="#0a00ff"/><rect x="133" y="266" fill="#1100ff"/><rect x="140" y="266" fill="#1900ff"/><rect x="147" y="266" fill="#2100ff"/><rect x="154" y="266" fill="#2900ff"/><rect x="161" y="266" fill="#3100ff"/><rect x="168" y="266" fill="#3900ff"/><rect x="175" y="266" fill="#4100ff"/><rect x="182" y="266" fill="#4900ff"/><rect x="189" y="266" fill="#5100ff"/><rect x="196" y="266" fill="#5900ff"/><rect x="203" y="266" fill="#6100ff"/><rect x="210" y="266" fill="#6900ff"/><rect x="217" y="266" fill="#7100ff"/><rect x="224" y="266" fill="#7900ff"/><rect x="231" y="266" fill="#8200ff"/><rect x="238" y="266" fill="#8a00ff"/><rect x="245" y="266" fill="#9300ff"/><rect x="252" y="266" fill="#9b00ff"/><rect x="259" y="266" fill="#a300ff"/><rect x="266" y="266" fill="#ac00ff"/><rect x="273" y="266" fill="#b500ff"/><rect x="280" y="266" fill="#bd00ff"/><rect x="287" y="266" fill="#c600ff"/><rect x="294" y="266" fill="#cf00ff"/><rect x="301" y="266" fill="#d700ff"/><rect x="308" y="266" fill="#e000ff"/><rect x="315" y="266" fill="#e900ff"/><rect x="322" y="266" fill="#f200ff"/><rect x="329" y="266" fill="#fb00ff"/><rect x="336" y="266" fill="#ff00fa"/><rect x="343" y="266" fill="#ff00f2"/><rect x="350" y="266" fill="#ff00ea"/><rect x="357" y="266" fill="#ff00e2"/><rect x="364" y="266" fill="#ff00db"/><rect x="371" y="266" fill="#ff00d5"/><rect x="378" y="266" fill="#ff00ce"/><rect x="0" y="273" fill="#000dff"/><rect x="7" y="273" fill="#000bff"/><rect x="14" y="273" fill="#0009ff"/><rect x="21" y="273" fill="#0007ff"/><rect x="28" y="273" fill="#0005ff"/><rect x="35" y="273" fill="#0003ff"/><rect x="42" y="273" fill="#0001ff"/><rect x="49" y="273" fill="#0000ff"/><rect x="56" y="273" fill="#0000ff"/><rect x="63" y="273" fill="#0000ff"/><rect x="70" y="273" fill="#0000ff"/><rect x="77" y="273" fill="#0000ff"/><rect x="84" y="273" fill="#0000ff"/><rect x="91" y="273" fill="#0000ff"/><rect x="98" y="273" fill="#0000ff"/><rect x="105" y="273" fill="#0000ff"/><rect x="112" y="273" fill="#0000ff"/><rect x="119" y="273" fill="#0100ff"/><rect x="126" y="273" fill="#0800ff"/><rect x="133" y="273" fill="#1000ff"/><rect x="140" y="273" fill="#1700ff"/><rect x="147" y="273" fill="#1f00ff"/><rect x="154" y="273" fill="#2600ff"/><rect x="161" y="273" fill="#2e00ff"/><rect x="168" y="273" fill="#3600ff"/><rect x="175" y="273" fill="#3e00ff"/><rect x="182" y="273" fill="#4500ff"/><rect x="189" y="273" fill="#4d00ff"/><rect x="196" y="273" fill="#5500ff"/><rect x="203" y="273" fill="#5d00ff"/><rect x="210" y="273" fill="#6500ff"/><rect x="217" y="273" fill="#6d00ff"/><rect x="224" y="273" fill="#7500ff"/><rect x="231" y="273" fill="#7d00ff"/><rect x="238" y="273" fill="#8500ff"/><rect x="245" y="273" fill="#8d00ff"/><rect x="252" y="273" fill="#9500ff"/><rect x="259" y="273" fill="#9d00ff"/><rect x="266" y="273" fill="#a600ff"/><rect x="273" y="273" fill="#ae00ff"/><rect x="280" y="273" fill="#b600ff"/><rect x="287" y="273" fill="#bf00ff"/><rect x="294" y="273" fill="#c700ff"/><rect x="301" y="273" fill="#d000ff"/><rect x="308" y="273" fill="#d800ff"/><rect x="315" y="273" fill="#e100ff"/><rect x="322" y="273" fill="#ea00ff"/><rect x="329" y="273" fill="#f200ff"/><rect x="336" y="273" fill="#fb00ff"/><rect x="343" y="273" fill="#ff00fa"/><rect x="350" y="273" fill="#ff00f2"/><rect x="357" y="273" fill="#ff00ea"/><rect x="364" y="273" fill="#ff00e3"/><rect x="371" y="273" fill="#ff00dc"/><rect x="378" y="273" fill="#ff00d6"/><rect x="0" y="280" fill="#000bff"/><rect x="7" y="280" fill="#0009ff"/><rect x="14" y="280" fill="#0007ff"/><rect x="21" y="280" fill="#0005ff"/><rect x="28" y="280" fill="#0003ff"/><rect x="35" y="280" fill="#0001ff"/><rect x="42" y="280" fill="#0000ff"/><rect x="49" y="280" fill="#0000ff"/><rect x="56" y="280" fill="#0000ff"/><rect x="63" y="280" fill="#0000ff"/><rect x="70" y="280" fill="#0000ff"/><rect x="77" y="280" fill="#0000ff"/><rect x="84" y="280" fill="#0000ff"/><rect x="91" y="280" fill="#0000ff"/><rect x="98" y="280" fill="#0000ff"/><rect x="105" y="280" fill="#0000ff"/><rect x="112" y="280" fill="#0000ff"/><rect x="119" y="280" fill="#0000ff"/><rect x="126" y="280" fill="#0700ff"/><rect x="133" y="280" fill="#0e00ff"/><rect x="140" y="280" fill="#1500ff"/><rect x="147" y="280" fill="#1d00ff"/><rect x="154" y="280" fill="#2400ff"/><rect x="161" y="280" fill="#2c00ff"/><rect x="168" y="280" fill="#3300ff"/><rect x="175" y="280" fill="#3b00ff"/><rect x="182" y="280" fill="#4200ff"/><rect x="189" y="280" fill="#4a00ff"/><rect x="196" y="280" fill="#5100ff"/><rect x="203" y="280" fill="#5900ff"/><rect x="210" y="280" fill="#6100ff"/><rect x="217" y="280" fill="#6800ff"/><rect x="224" y="280" fill="#7000ff"/><rect x="231" y="280" fill="#7800ff"/><rect x="238" y="280" fill="#8000ff"/><rect x="245" y="280" fill="#8800ff"/><rect x="252" y="280" fill="#9000ff"/><rect x="259" y="280" fill="#9800ff"/><rect x="266" y="280" fill="#a000ff"/><rect x="273" y="280" fill="#a800ff"/><rect x="280" y="280" fill="#b000ff"/><rect x="287" y="280" fill="#b800ff"/><rect x="294" y="280" fill="#c000ff"/><rect x="301" y="280" fill="#c900ff"/><rect x="308" y="280" fill="#d100ff"/><rect x="315" y="280" fill="#d900ff"/><rect x="322" y="280" fill="#e200ff"/><rect x="329" y="280" fill="#ea00ff"/><rect x="336" y="280" fill="#f200ff"/><rect x="343" y="280" fill="#fb00ff"/><rect x="350" y="280" fill="#ff00fb"/><rect x="357" y="280" fill="#ff00f3"/><rect x="364" y="280" fill="#ff00eb"/><rect x="371" y="280" fill="#ff00e4"/><rect x="378" y="280" fill="#ff00dd"/><rect x="0" y="287" fill="#0009ff"/><rect x="7" y="287" fill="#0007ff"/><rect x="14" y="287" fill="#0005ff"/><rect x="21" y="287" fill="#0004ff"/><rect x="28" y="287" fill="#0002ff"/><rect x="35" y="287" fill="#0000ff"/><rect x="42" y="287" fill="#0000ff"/><rect x="49" y="287" fill="#0000ff"/><rect x="56" y="287" fill="#0000ff"/><rect x="63" y="287" fill="#0000ff"/><rect x="70" y="287" fill="#0000ff"/><rect x="77" y="287" fill="#0000ff"/><rect x="84" y="287" fill="#0000ff"/><rect x="91" y="287" fill="#0000ff"/><rect x="98" y="287" fill="#0000ff"/><rect x="105" y="287" fill="#0000ff"/><rect x="112" y="287" fill="#0000ff"/><rect x="119" y="287" fill="#0000ff"/><rect x="126" y="287" fill="#0500ff"/><rect x="133" y="287" fill="#0c00ff"/><rect x="140" y="287" fill="#1300ff"/><rect x="147" y="287" fill="#1b00ff"/><rect x="154" y="287" fill="#2200ff"/><rect x="161" y="287" fill="#2900ff"/><rect x="168" y="287" fill="#3000ff"/><rect x="175" y="287" fill="#3800ff"/><rect x="182" y="287" fill="#3f00ff"/><rect x="189" y="287" fill="#4600ff"/><rect x="196" y="287" fill="#4e00ff"/><rect x="203" y="287" fill="#5500ff"/><rect x="210" y="287" fill="#5d00ff"/><rect x="217" y="287" fill="#6400ff"/><rect x="224" y="287" fill="#6c00ff"/><rect x="231" y="287" fill="#7300ff"/><rect x="238" y="287" fill="#7b00ff"/><rect x="245" y="287" fill="#8300ff"/><rect x="252" y="287" fill="#8b00ff"/><rect x="259" y="287" fill="#9200ff"/><rect x="266" y="287" fill="#9a00ff"/><rect x="273" y="287" fill="#a200ff"/><rect x="280" y="287" fill="#aa00ff"/><rect x="287" y="287" fill="#b200ff"/><rect x="294" y="287" fill="#ba00ff"/><rect x="301" y="287" fill="#c200ff"/><rect x="308" y="287" fill="#ca00ff"/><rect x="315" y="287" fill="#d200ff"/><rect x="322" y="287" fill="#da00ff"/><rect x="329" y="287" fill="#e200ff"/><rect x="336" y="287" fill="#ea00ff"/><rect x="343" y="287" fill="#f300ff"/><rect x="350" y="287" fill="#fb00ff"/><rect x="357" y="287" fill="#ff00fb"/><rect x="364" y="287" fill="#ff00f3"/><rect x="371" y="287" fill="#ff00ec"/><rect x="378" y="287" fill="#ff00e4"/></g><path d="M163.4,282.5 163.2,282.6 162.7,282.8 162.0,282.8 160.5,282.3 158.8,281.2 156.6,279.5 153.4,277.0 149.3,273.5 144.2,269.3 137.4,263.9 129.3,257.2 119.3,248.3 107.3,236.3 91.5,217.3 72.7,191.5 52.4,159.3 32.8,124.4 17.5,91.0 7.1,62.8 1.7,41.9 0.4,27.3 2.5,17.3 7.3,10.9 14.3,7.7 22.5,6.5 31.5,6.2 40.6,6.3 50.1,6.7 60.3,7.4 71.4,8.4 83.7,9.6 97.2,11.1 112.2,12.7 128.8,14.6 147.1,16.6 167.0,18.9 188.4,21.3 211.1,23.9 234.4,26.6 257.0,29.1 279.0,31.6 299.0,33.9 316.6,35.9 331.6,37.6 344.1,39.0 354.7,40.2 363.9,41.3 371.7,42.1 377.9,42.8 382.8,43.4 386.6,43.8 389.4,44.1 391.3,44.4 392.8,44.5 395.2,44.8 397.4,45.1Z M287.2,37.1 79.3,17.9 111.5,214.0Z" fill="#000" fill-opacity="0.36" fill-rule="evenodd"/></svg>
<canvas id="cie" class="a" style="left:611px;top:52px" width="382" height="290"></canvas>
<script>(function(){var cv=document.getElementById("cie");if(!cv.getContext)return;var c=cv.getContext("2d");var W=382,H=290;var off=document.createElement("canvas");off.width=W;off.height=H;var o=off.getContext("2d");var im=o.createImageData(W,H);var d=im.data;var L=[[163.42,282.46],[163.17,282.62],[162.71,282.78],[161.97,282.78],[160.48,282.32],[158.83,281.23],[156.60,279.54],[153.37,276.96],[149.30,273.53],[144.16,269.33],[137.41,263.87],[129.29,257.17],[119.32,248.28],[107.35,236.25],[91.46,217.33],[72.71,191.46],[52.36,159.26],[32.78,124.43],[17.47,91.00],[7.09,62.81],[1.72,41.87],[0.42,27.28],[2.46,17.26],[7.34,10.90],[14.25,7.66],[22.48,6.46],[31.45,6.16],[40.57,6.27],[50.07,6.71],[60.31,7.44],[71.44,8.43],[83.67,9.65],[97.22,11.08],[112.21,12.74],[128.82,14.59],[147.06,16.65],[166.95,18.91],[188.41,21.35],[211.11,23.91],[234.43,26.57],[257.04,29.14],[279.04,31.63],[298.97,33.87],[316.59,35.88],[331.58,37.59],[344.13,39.00],[354.72,40.21],[363.89,41.25],[371.65,42.14],[377.93,42.84],[382.80,43.39],[386.59,43.82],[389.42,44.14],[391.27,44.36],[392.80,44.53],[395.18,44.80],[397.41,45.05]];function g(v){v=v<=0.0031308?12.92*v:1.055*Math.pow(v,1/2.4)-0.055;return Math.max(0,Math.min(255,Math.round(v*255)));}var P=[[0.4507,0.5229],[0.1250,0.5625],[0.1754,0.1579]];function inTri(u,v){var s=0;for(var k=0;k<3;k++){var a=P[k],b=P[(k+1)%3];var cr=(b[0]-a[0])*(v-a[1])-(b[1]-a[1])*(u-a[0]);if(cr>0)s++;}return s==0||s==3;}for(var j=0;j<H;j++){for(var i=0;i<W;i++){var u=(611.000000+i+0.5-610.500000)/638.300000,v=(342.500000-(52.000000+j+0.5))/484.600000;var den=6*u-16*v+12;var x=9*u/den,y=4*v/den;if(y<=0.001)y=0.001;var X=x/y,Z=(1-x-y)/y;var R=3.2406*X-1.5372-0.4986*Z,G=-0.9689*X+1.8758+0.0415*Z,B=0.0557*X-0.2040+1.0570*Z;var ins=inTri(u,v);if(R<0)R=0;if(G<0)G=0;if(B<0)B=0;var m=Math.max(R,G,B);if(m<=0)m=1;R/=m;G/=m;B/=m;var p=(j*W+i)*4;var k=ins?1:0.64;d[p]=Math.round(255*R*k);d[p+1]=Math.round(255*G*k);d[p+2]=Math.round(255*B*k);d[p+3]=255;}}o.putImageData(im,0,0);c.beginPath();c.moveTo(L[0][0],L[0][1]);for(var q=1;q<L.length;q++)c.lineTo(L[q][0],L[q][1]);c.closePath();c.clip();c.drawImage(off,0,0);})();</script>
<svg width="1000" height="533" viewBox="0 0 1000 533">
<text x="792" y="48.5" font-size="9.5" fill="#d8d8d8" text-anchor="middle">CIE 1976 u'v'</text>
<polyline points="610.5,51.5 993.5,51.5 993.5,342.5" fill="none" stroke="#9a9a9a" stroke-width="1"/>
<line x1="610.5" y1="51.5" x2="610.5" y2="342.5" stroke="#9a9a9a"/>
<line x1="610.5" y1="342.5" x2="993.5" y2="342.5" stroke="#9a9a9a"/>
<line x1="606.5" y1="342.5" x2="610.5" y2="342.5" stroke="#9a9a9a"/>
<text x="606" y="345.8" font-size="9" fill="#d8d8d8" text-anchor="end">0</text>
<line x1="610.5" y1="342.5" x2="610.5" y2="346.5" stroke="#9a9a9a"/>
<text x="610.5" y="356.2" font-size="9" fill="#d8d8d8" text-anchor="middle">0</text>
<line x1="606.5" y1="318.3" x2="610.5" y2="318.3" stroke="#9a9a9a"/>
<text x="606" y="321.6" font-size="9" fill="#d8d8d8" text-anchor="end">0,05</text>
<line x1="642.4" y1="342.5" x2="642.4" y2="346.5" stroke="#9a9a9a"/>
<text x="642.4" y="356.2" font-size="9" fill="#d8d8d8" text-anchor="middle">0,05</text>
<line x1="606.5" y1="294.0" x2="610.5" y2="294.0" stroke="#9a9a9a"/>
<text x="606" y="297.3" font-size="9" fill="#d8d8d8" text-anchor="end">0,1</text>
<line x1="674.3" y1="342.5" x2="674.3" y2="346.5" stroke="#9a9a9a"/>
<text x="674.3" y="356.2" font-size="9" fill="#d8d8d8" text-anchor="middle">0,1</text>
<line x1="606.5" y1="269.8" x2="610.5" y2="269.8" stroke="#9a9a9a"/>
<text x="606" y="273.1" font-size="9" fill="#d8d8d8" text-anchor="end">0,15</text>
<line x1="706.2" y1="342.5" x2="706.2" y2="346.5" stroke="#9a9a9a"/>
<text x="706.2" y="356.2" font-size="9" fill="#d8d8d8" text-anchor="middle">0,15</text>
<line x1="606.5" y1="245.6" x2="610.5" y2="245.6" stroke="#9a9a9a"/>
<text x="606" y="248.9" font-size="9" fill="#d8d8d8" text-anchor="end">0,2</text>
<line x1="738.2" y1="342.5" x2="738.2" y2="346.5" stroke="#9a9a9a"/>
<text x="738.2" y="356.2" font-size="9" fill="#d8d8d8" text-anchor="middle">0,2</text>
<line x1="606.5" y1="221.3" x2="610.5" y2="221.3" stroke="#9a9a9a"/>
<text x="606" y="224.7" font-size="9" fill="#d8d8d8" text-anchor="end">0,25</text>
<line x1="770.1" y1="342.5" x2="770.1" y2="346.5" stroke="#9a9a9a"/>
<text x="770.1" y="356.2" font-size="9" fill="#d8d8d8" text-anchor="middle">0,25</text>
<line x1="606.5" y1="197.1" x2="610.5" y2="197.1" stroke="#9a9a9a"/>
<text x="606" y="200.4" font-size="9" fill="#d8d8d8" text-anchor="end">0,3</text>
<line x1="802.0" y1="342.5" x2="802.0" y2="346.5" stroke="#9a9a9a"/>
<text x="802.0" y="356.2" font-size="9" fill="#d8d8d8" text-anchor="middle">0,3</text>
<line x1="606.5" y1="172.9" x2="610.5" y2="172.9" stroke="#9a9a9a"/>
<text x="606" y="176.2" font-size="9" fill="#d8d8d8" text-anchor="end">0,35</text>
<line x1="833.9" y1="342.5" x2="833.9" y2="346.5" stroke="#9a9a9a"/>
<text x="833.9" y="356.2" font-size="9" fill="#d8d8d8" text-anchor="middle">0,35</text>
<line x1="606.5" y1="148.7" x2="610.5" y2="148.7" stroke="#9a9a9a"/>
<text x="606" y="152.0" font-size="9" fill="#d8d8d8" text-anchor="end">0,4</text>
<line x1="865.8" y1="342.5" x2="865.8" y2="346.5" stroke="#9a9a9a"/>
<text x="865.8" y="356.2" font-size="9" fill="#d8d8d8" text-anchor="middle">0,4</text>
<line x1="606.5" y1="124.4" x2="610.5" y2="124.4" stroke="#9a9a9a"/>
<text x="606" y="127.7" font-size="9" fill="#d8d8d8" text-anchor="end">0,45</text>
<line x1="897.7" y1="342.5" x2="897.7" y2="346.5" stroke="#9a9a9a"/>
<text x="897.7" y="356.2" font-size="9" fill="#d8d8d8" text-anchor="middle">0,45</text>
<line x1="606.5" y1="100.2" x2="610.5" y2="100.2" stroke="#9a9a9a"/>
<text x="606" y="103.5" font-size="9" fill="#d8d8d8" text-anchor="end">0,5</text>
<line x1="929.6" y1="342.5" x2="929.6" y2="346.5" stroke="#9a9a9a"/>
<text x="929.6" y="356.2" font-size="9" fill="#d8d8d8" text-anchor="middle">0,5</text>
<line x1="606.5" y1="76.0" x2="610.5" y2="76.0" stroke="#9a9a9a"/>
<text x="606" y="79.3" font-size="9" fill="#d8d8d8" text-anchor="end">0,55</text>
<line x1="961.6" y1="342.5" x2="961.6" y2="346.5" stroke="#9a9a9a"/>
<text x="961.6" y="356.2" font-size="9" fill="#d8d8d8" text-anchor="middle">0,55</text>
<circle cx="904.4" cy="87.2" r="2.6" fill="none" stroke="#1a1a1a" stroke-width="1" opacity="0.8"/>
<circle cx="685.2" cy="64.8" r="2.6" fill="none" stroke="#1a1a1a" stroke-width="1" opacity="0.8"/>
<circle cx="729.8" cy="274.2" r="2.6" fill="none" stroke="#1a1a1a" stroke-width="1" opacity="0.8"/>
<circle cx="697.1" cy="121.0" r="2.6" fill="none" stroke="#1a1a1a" stroke-width="1" opacity="0.8"/>
<circle cx="809.8" cy="189.0" r="2.6" fill="none" stroke="#1a1a1a" stroke-width="1" opacity="0.8"/>
<circle cx="737.9" cy="70.0" r="2.6" fill="none" stroke="#1a1a1a" stroke-width="1" opacity="0.8"/>
<rect x="894.2" y="85.1" width="8" height="8" fill="none" stroke="#f4f4f4" stroke-width="1.1"/>
<rect x="686.3" y="65.9" width="8" height="8" fill="none" stroke="#f4f4f4" stroke-width="1.1"/>
<rect x="718.5" y="262.0" width="8" height="8" fill="none" stroke="#f4f4f4" stroke-width="1.1"/>
<rect x="694.8" y="117.8" width="8" height="8" fill="none" stroke="#f4f4f4" stroke-width="1.1"/>
<rect x="801.2" y="178.7" width="8" height="8" fill="none" stroke="#f4f4f4" stroke-width="1.1"/>
<rect x="736.6" y="70.6" width="8" height="8" fill="none" stroke="#f4f4f4" stroke-width="1.1"/>
<rect x="732.7" y="111.3" width="8.2" height="8.4" fill="none" stroke="#111" stroke-width="1.25"/>
<circle cx="735.0" cy="114.4" r="2.3" fill="#fff" stroke="#333" stroke-width="0.9"/>
<rect x="840.5" y="323.5" width="151.5" height="17" fill="#2e2e2e"/>
<text x="841.5" y="336" font-size="11.5" fill="#eeeeee" textLength="132.5" lengthAdjust="spacingAndGlyphs" xml:space="preserve">Gamut Coverage:  99,5%</text>
</svg>
<div class="t" style="left:461px;top:370.5px;font-size:8.5px;color:#e0e0e0">CIE 1931 xy</div>
<svg class="fb4" style="left:382px;top:381px" width="204" height="117.5" viewBox="0 0 204 117.5" shape-rendering="crispEdges"><rect x="0" y="0" fill="#73ffd1"/><rect x="4" y="0" fill="#78ffd0"/><rect x="8" y="0" fill="#7dffd0"/><rect x="12" y="0" fill="#81ffd0"/><rect x="16" y="0" fill="#86ffd0"/><rect x="20" y="0" fill="#8affcf"/><rect x="24" y="0" fill="#8effcf"/><rect x="28" y="0" fill="#92ffcf"/><rect x="32" y="0" fill="#96ffcf"/><rect x="36" y="0" fill="#9affcf"/><rect x="40" y="0" fill="#9effce"/><rect x="44" y="0" fill="#a1ffce"/><rect x="48" y="0" fill="#a5ffce"/><rect x="52" y="0" fill="#a8ffce"/><rect x="56" y="0" fill="#acffcd"/><rect x="60" y="0" fill="#afffcd"/><rect x="64" y="0" fill="#b3ffcd"/><rect x="68" y="0" fill="#b6ffcd"/><rect x="72" y="0" fill="#b9ffcc"/><rect x="76" y="0" fill="#bcffcc"/><rect x="80" y="0" fill="#bfffcc"/><rect x="84" y="0" fill="#c3ffcb"/><rect x="88" y="0" fill="#c6ffcb"/><rect x="92" y="0" fill="#c9ffcb"/><rect x="96" y="0" fill="#ccffcb"/><rect x="100" y="0" fill="#cfffca"/><rect x="104" y="0" fill="#d2ffca"/><rect x="108" y="0" fill="#d5ffca"/><rect x="112" y="0" fill="#d8ffca"/><rect x="116" y="0" fill="#daffc9"/><rect x="120" y="0" fill="#ddffc9"/><rect x="124" y="0" fill="#e0ffc9"/><rect x="128" y="0" fill="#e3ffc8"/><rect x="132" y="0" fill="#e6ffc8"/><rect x="136" y="0" fill="#e9ffc8"/><rect x="140" y="0" fill="#ebffc7"/><rect x="144" y="0" fill="#eeffc7"/><rect x="148" y="0" fill="#f1ffc7"/><rect x="152" y="0" fill="#f4ffc6"/><rect x="156" y="0" fill="#f6ffc6"/><rect x="160" y="0" fill="#f9ffc6"/><rect x="164" y="0" fill="#fcffc5"/><rect x="168" y="0" fill="#feffc5"/><rect x="172" y="0" fill="#fffdc3"/><rect x="176" y="0" fill="#fffac1"/><rect x="180" y="0" fill="#fff8be"/><rect x="184" y="0" fill="#fff5bc"/><rect x="188" y="0" fill="#fff3ba"/><rect x="192" y="0" fill="#fff1b8"/><rect x="196" y="0" fill="#ffeeb6"/><rect x="200" y="0" fill="#ffecb3"/><rect x="0" y="4" fill="#76ffd4"/><rect x="4" y="4" fill="#7bffd3"/><rect x="8" y="4" fill="#80ffd3"/><rect x="12" y="4" fill="#84ffd3"/><rect x="16" y="4" fill="#89ffd3"/><rect x="20" y="4" fill="#8dffd2"/><rect x="24" y="4" fill="#91ffd2"/><rect x="28" y="4" fill="#95ffd2"/><rect x="32" y="4" fill="#99ffd2"/><rect x="36" y="4" fill="#9dffd2"/><rect x="40" y="4" fill="#a1ffd1"/><rect x="44" y="4" fill="#a4ffd1"/><rect x="48" y="4" fill="#a8ffd1"/><rect x="52" y="4" fill="#abffd1"/><rect x="56" y="4" fill="#afffd0"/><rect x="60" y="4" fill="#b2ffd0"/><rect x="64" y="4" fill="#b5ffd0"/><rect x="68" y="4" fill="#b9ffd0"/><rect x="72" y="4" fill="#bcffcf"/><rect x="76" y="4" fill="#bfffcf"/><rect x="80" y="4" fill="#c2ffcf"/><rect x="84" y="4" fill="#c6ffcf"/><rect x="88" y="4" fill="#c9ffce"/><rect x="92" y="4" fill="#ccffce"/><rect x="96" y="4" fill="#cfffce"/><rect x="100" y="4" fill="#d2ffce"/><rect x="104" y="4" fill="#d5ffcd"/><rect x="108" y="4" fill="#d8ffcd"/><rect x="112" y="4" fill="#dbffcd"/><rect x="116" y="4" fill="#ddffcd"/><rect x="120" y="4" fill="#e0ffcc"/><rect x="124" y="4" fill="#e3ffcc"/><rect x="128" y="4" fill="#e6ffcc"/><rect x="132" y="4" fill="#e9ffcb"/><rect x="136" y="4" fill="#ecffcb"/><rect x="140" y="4" fill="#eeffcb"/><rect x="144" y="4" fill="#f1ffcb"/><rect x="148" y="4" fill="#f4ffca"/><rect x="152" y="4" fill="#f7ffca"/><rect x="156" y="4" fill="#f9ffca"/><rect x="160" y="4" fill="#fcffc9"/><rect x="164" y="4" fill="#ffffc9"/><rect x="168" y="4" fill="#fffcc7"/><rect x="172" y="4" fill="#fffac4"/><rect x="176" y="4" fill="#fff7c2"/><rect x="180" y="4" fill="#fff5c0"/><rect x="184" y="4" fill="#fff2bd"/><rect x="188" y="4" fill="#fff0bb"/><rect x="192" y="4" fill="#ffeeb9"/><rect x="196" y="4" fill="#ffebb7"/><rect x="200" y="4" fill="#ffe9b5"/><rect x="0" y="8" fill="#7affd6"/><rect x="4" y="8" fill="#7fffd6"/><rect x="8" y="8" fill="#83ffd6"/><rect x="12" y="8" fill="#88ffd6"/><rect x="16" y="8" fill="#8cffd6"/><rect x="20" y="8" fill="#90ffd6"/><rect x="24" y="8" fill="#94ffd5"/><rect x="28" y="8" fill="#98ffd5"/><rect x="32" y="8" fill="#9cffd5"/><rect x="36" y="8" fill="#a0ffd5"/><rect x="40" y="8" fill="#a4ffd4"/><rect x="44" y="8" fill="#a7ffd4"/><rect x="48" y="8" fill="#abffd4"/><rect x="52" y="8" fill="#aeffd4"/><rect x="56" y="8" fill="#b2ffd4"/><rect x="60" y="8" fill="#b5ffd3"/><rect x="64" y="8" fill="#b8ffd3"/><rect x="68" y="8" fill="#bcffd3"/><rect x="72" y="8" fill="#bfffd3"/><rect x="76" y="8" fill="#c2ffd2"/><rect x="80" y="8" fill="#c5ffd2"/><rect x="84" y="8" fill="#c9ffd2"/><rect x="88" y="8" fill="#ccffd2"/><rect x="92" y="8" fill="#cfffd2"/><rect x="96" y="8" fill="#d2ffd1"/><rect x="100" y="8" fill="#d5ffd1"/><rect x="104" y="8" fill="#d8ffd1"/><rect x="108" y="8" fill="#dbffd1"/><rect x="112" y="8" fill="#deffd0"/><rect x="116" y="8" fill="#e1ffd0"/><rect x="120" y="8" fill="#e3ffd0"/><rect x="124" y="8" fill="#e6ffd0"/><rect x="128" y="8" fill="#e9ffcf"/><rect x="132" y="8" fill="#ecffcf"/><rect x="136" y="8" fill="#efffcf"/><rect x="140" y="8" fill="#f2ffce"/><rect x="144" y="8" fill="#f4ffce"/><rect x="148" y="8" fill="#f7ffce"/><rect x="152" y="8" fill="#faffce"/><rect x="156" y="8" fill="#fdffcd"/><rect x="160" y="8" fill="#ffffcd"/><rect x="164" y="8" fill="#fffcca"/><rect x="168" y="8" fill="#fff9c8"/><rect x="172" y="8" fill="#fff7c5"/><rect x="176" y="8" fill="#fff4c3"/><rect x="180" y="8" fill="#fff2c1"/><rect x="184" y="8" fill="#ffefbe"/><rect x="188" y="8" fill="#ffedbc"/><rect x="192" y="8" fill="#ffebba"/><rect x="196" y="8" fill="#ffe8b8"/><rect x="200" y="8" fill="#ffe6b6"/><rect x="0" y="12" fill="#7dffda"/><rect x="4" y="12" fill="#82ffd9"/><rect x="8" y="12" fill="#87ffd9"/><rect x="12" y="12" fill="#8bffd9"/><rect x="16" y="12" fill="#8fffd9"/><rect x="20" y="12" fill="#93ffd9"/><rect x="24" y="12" fill="#97ffd8"/><rect x="28" y="12" fill="#9bffd8"/><rect x="32" y="12" fill="#9fffd8"/><rect x="36" y="12" fill="#a3ffd8"/><rect x="40" y="12" fill="#a7ffd8"/><rect x="44" y="12" fill="#aaffd7"/><rect x="48" y="12" fill="#aeffd7"/><rect x="52" y="12" fill="#b1ffd7"/><rect x="56" y="12" fill="#b5ffd7"/><rect x="60" y="12" fill="#b8ffd7"/><rect x="64" y="12" fill="#bcffd6"/><rect x="68" y="12" fill="#bfffd6"/><rect x="72" y="12" fill="#c2ffd6"/><rect x="76" y="12" fill="#c5ffd6"/><rect x="80" y="12" fill="#c8ffd6"/><rect x="84" y="12" fill="#ccffd5"/><rect x="88" y="12" fill="#cfffd5"/><rect x="92" y="12" fill="#d2ffd5"/><rect x="96" y="12" fill="#d5ffd5"/><rect x="100" y="12" fill="#d8ffd4"/><rect x="104" y="12" fill="#dbffd4"/><rect x="108" y="12" fill="#deffd4"/><rect x="112" y="12" fill="#e1ffd4"/><rect x="116" y="12" fill="#e4ffd4"/><rect x="120" y="12" fill="#e7ffd3"/><rect x="124" y="12" fill="#eaffd3"/><rect x="128" y="12" fill="#ecffd3"/><rect x="132" y="12" fill="#efffd3"/><rect x="136" y="12" fill="#f2ffd2"/><rect x="140" y="12" fill="#f5ffd2"/><rect x="144" y="12" fill="#f8ffd2"/><rect x="148" y="12" fill="#faffd1"/><rect x="152" y="12" fill="#fdffd1"/><rect x="156" y="12" fill="#fffed0"/><rect x="160" y="12" fill="#fffbce"/><rect x="164" y="12" fill="#fff9cb"/><rect x="168" y="12" fill="#fff6c9"/><rect x="172" y="12" fill="#fff3c6"/><rect x="176" y="12" fill="#fff1c4"/><rect x="180" y="12" fill="#ffefc2"/><rect x="184" y="12" fill="#ffecc0"/><rect x="188" y="12" fill="#ffeabd"/><rect x="192" y="12" fill="#ffe8bb"/><rect x="196" y="12" fill="#ffe5b9"/><rect x="200" y="12" fill="#ffe3b7"/><rect x="0" y="16" fill="#81ffdd"/><rect x="4" y="16" fill="#85ffdc"/><rect x="8" y="16" fill="#8affdc"/><rect x="12" y="16" fill="#8effdc"/><rect x="16" y="16" fill="#92ffdc"/><rect x="20" y="16" fill="#97ffdc"/><rect x="24" y="16" fill="#9bffdc"/><rect x="28" y="16" fill="#9fffdb"/><rect x="32" y="16" fill="#a2ffdb"/><rect x="36" y="16" fill="#a6ffdb"/><rect x="40" y="16" fill="#aaffdb"/><rect x="44" y="16" fill="#adffdb"/><rect x="48" y="16" fill="#b1ffda"/><rect x="52" y="16" fill="#b4ffda"/><rect x="56" y="16" fill="#b8ffda"/><rect x="60" y="16" fill="#bbffda"/><rect x="64" y="16" fill="#bfffda"/><rect x="68" y="16" fill="#c2ffda"/><rect x="72" y="16" fill="#c5ffd9"/><rect x="76" y="16" fill="#c8ffd9"/><rect x="80" y="16" fill="#ccffd9"/><rect x="84" y="16" fill="#cfffd9"/><rect x="88" y="16" fill="#d2ffd9"/><rect x="92" y="16" fill="#d5ffd8"/><rect x="96" y="16" fill="#d8ffd8"/><rect x="100" y="16" fill="#dbffd8"/><rect x="104" y="16" fill="#deffd8"/><rect x="108" y="16" fill="#e1ffd7"/><rect x="112" y="16" fill="#e4ffd7"/><rect x="116" y="16" fill="#e7ffd7"/><rect x="120" y="16" fill="#eaffd7"/><rect x="124" y="16" fill="#edffd7"/><rect x="128" y="16" fill="#f0ffd6"/><rect x="132" y="16" fill="#f2ffd6"/><rect x="136" y="16" fill="#f5ffd6"/><rect x="140" y="16" fill="#f8ffd6"/><rect x="144" y="16" fill="#fbffd5"/><rect x="148" y="16" fill="#feffd5"/><rect x="152" y="16" fill="#fffdd4"/><rect x="156" y="16" fill="#fffbd1"/><rect x="160" y="16" fill="#fff8ce"/><rect x="164" y="16" fill="#fff5cc"/><rect x="168" y="16" fill="#fff3ca"/><rect x="172" y="16" fill="#fff0c7"/><rect x="176" y="16" fill="#ffeec5"/><rect x="180" y="16" fill="#ffebc3"/><rect x="184" y="16" fill="#ffe9c1"/><rect x="188" y="16" fill="#ffe7be"/><rect x="192" y="16" fill="#ffe5bc"/><rect x="196" y="16" fill="#ffe2ba"/><rect x="200" y="16" fill="#ffe0b8"/><rect x="0" y="20" fill="#84ffe0"/><rect x="4" y="20" fill="#89ffe0"/><rect x="8" y="20" fill="#8dffdf"/><rect x="12" y="20" fill="#92ffdf"/><rect x="16" y="20" fill="#96ffdf"/><rect x="20" y="20" fill="#9affdf"/><rect x="24" y="20" fill="#9effdf"/><rect x="28" y="20" fill="#a2ffdf"/><rect x="32" y="20" fill="#a6ffde"/><rect x="36" y="20" fill="#a9ffde"/><rect x="40" y="20" fill="#adffde"/><rect x="44" y="20" fill="#b1ffde"/><rect x="48" y="20" fill="#b4ffde"/><rect x="52" y="20" fill="#b8ffde"/><rect x="56" y="20" fill="#bbffdd"/><rect x="60" y="20" fill="#beffdd"/><rect x="64" y="20" fill="#c2ffdd"/><rect x="68" y="20" fill="#c5ffdd"/><rect x="72" y="20" fill="#c8ffdd"/><rect x="76" y="20" fill="#ccffdd"/><rect x="80" y="20" fill="#cfffdc"/><rect x="84" y="20" fill="#d2ffdc"/><rect x="88" y="20" fill="#d5ffdc"/><rect x="92" y="20" fill="#d8ffdc"/><rect x="96" y="20" fill="#dbffdc"/><rect x="100" y="20" fill="#deffdb"/><rect x="104" y="20" fill="#e1ffdb"/><rect x="108" y="20" fill="#e4ffdb"/><rect x="112" y="20" fill="#e7ffdb"/><rect x="116" y="20" fill="#eaffdb"/><rect x="120" y="20" fill="#edffda"/><rect x="124" y="20" fill="#f0ffda"/><rect x="128" y="20" fill="#f3ffda"/><rect x="132" y="20" fill="#f6ffda"/><rect x="136" y="20" fill="#f9ffda"/><rect x="140" y="20" fill="#fcffd9"/><rect x="144" y="20" fill="#feffd9"/><rect x="148" y="20" fill="#fffdd7"/><rect x="152" y="20" fill="#fffad4"/><rect x="156" y="20" fill="#fff7d2"/><rect x="160" y="20" fill="#fff5cf"/><rect x="164" y="20" fill="#fff2cd"/><rect x="168" y="20" fill="#fff0cb"/><rect x="172" y="20" fill="#ffedc8"/><rect x="176" y="20" fill="#ffebc6"/><rect x="180" y="20" fill="#ffe8c4"/><rect x="184" y="20" fill="#ffe6c2"/><rect x="188" y="20" fill="#ffe4bf"/><rect x="192" y="20" fill="#ffe2bd"/><rect x="196" y="20" fill="#ffdfbb"/><rect x="200" y="20" fill="#ffddb9"/><rect x="0" y="24" fill="#88ffe3"/><rect x="4" y="24" fill="#8cffe3"/><rect x="8" y="24" fill="#91ffe3"/><rect x="12" y="24" fill="#95ffe2"/><rect x="16" y="24" fill="#99ffe2"/><rect x="20" y="24" fill="#9dffe2"/><rect x="24" y="24" fill="#a1ffe2"/><rect x="28" y="24" fill="#a5ffe2"/><rect x="32" y="24" fill="#a9ffe2"/><rect x="36" y="24" fill="#acffe2"/><rect x="40" y="24" fill="#b0ffe1"/><rect x="44" y="24" fill="#b4ffe1"/><rect x="48" y="24" fill="#b7ffe1"/><rect x="52" y="24" fill="#bbffe1"/><rect x="56" y="24" fill="#beffe1"/><rect x="60" y="24" fill="#c2ffe1"/><rect x="64" y="24" fill="#c5ffe0"/><rect x="68" y="24" fill="#c8ffe0"/><rect x="72" y="24" fill="#cbffe0"/><rect x="76" y="24" fill="#cfffe0"/><rect x="80" y="24" fill="#d2ffe0"/><rect x="84" y="24" fill="#d5ffe0"/><rect x="88" y="24" fill="#d8ffe0"/><rect x="92" y="24" fill="#dbffdf"/><rect x="96" y="24" fill="#deffdf"/><rect x="100" y="24" fill="#e1ffdf"/><rect x="104" y="24" fill="#e4ffdf"/><rect x="108" y="24" fill="#e8ffdf"/><rect x="112" y="24" fill="#ebffde"/><rect x="116" y="24" fill="#edffde"/><rect x="120" y="24" fill="#f0ffde"/><rect x="124" y="24" fill="#f3ffde"/><rect x="128" y="24" fill="#f6ffde"/><rect x="132" y="24" fill="#f9ffde"/><rect x="136" y="24" fill="#fcffdd"/><rect x="140" y="24" fill="#ffffdd"/><rect x="144" y="24" fill="#fffcda"/><rect x="148" y="24" fill="#fff9d8"/><rect x="152" y="24" fill="#fff7d5"/><rect x="156" y="24" fill="#fff4d3"/><rect x="160" y="24" fill="#fff1d0"/><rect x="164" y="24" fill="#ffefce"/><rect x="168" y="24" fill="#ffeccc"/><rect x="172" y="24" fill="#ffeac9"/><rect x="176" y="24" fill="#ffe8c7"/><rect x="180" y="24" fill="#ffe5c5"/><rect x="184" y="24" fill="#ffe3c3"/><rect x="188" y="24" fill="#ffe1c0"/><rect x="192" y="24" fill="#ffdfbe"/><rect x="196" y="24" fill="#ffdcbc"/><rect x="200" y="24" fill="#ffdaba"/><rect x="0" y="28" fill="#8bffe6"/><rect x="4" y="28" fill="#90ffe6"/><rect x="8" y="28" fill="#94ffe6"/><rect x="12" y="28" fill="#98ffe6"/><rect x="16" y="28" fill="#9cffe6"/><rect x="20" y="28" fill="#a0ffe5"/><rect x="24" y="28" fill="#a4ffe5"/><rect x="28" y="28" fill="#a8ffe5"/><rect x="32" y="28" fill="#acffe5"/><rect x="36" y="28" fill="#b0ffe5"/><rect x="40" y="28" fill="#b3ffe5"/><rect x="44" y="28" fill="#b7ffe5"/><rect x="48" y="28" fill="#baffe4"/><rect x="52" y="28" fill="#beffe4"/><rect x="56" y="28" fill="#c1ffe4"/><rect x="60" y="28" fill="#c5ffe4"/><rect x="64" y="28" fill="#c8ffe4"/><rect x="68" y="28" fill="#cbffe4"/><rect x="72" y="28" fill="#cfffe4"/><rect x="76" y="28" fill="#d2ffe4"/><rect x="80" y="28" fill="#d5ffe3"/><rect x="84" y="28" fill="#d8ffe3"/><rect x="88" y="28" fill="#dbffe3"/><rect x="92" y="28" fill="#dfffe3"/><rect x="96" y="28" fill="#e2ffe3"/><rect x="100" y="28" fill="#e5ffe3"/><rect x="104" y="28" fill="#e8ffe2"/><rect x="108" y="28" fill="#ebffe2"/><rect x="112" y="28" fill="#eeffe2"/><rect x="116" y="28" fill="#f1ffe2"/><rect x="120" y="28" fill="#f4ffe2"/><rect x="124" y="28" fill="#f7ffe2"/><rect x="128" y="28" fill="#faffe1"/><rect x="132" y="28" fill="#fdffe1"/><rect x="136" y="28" fill="#fffee1"/><rect x="140" y="28" fill="#fffbde"/><rect x="144" y="28" fill="#fff9db"/><rect x="148" y="28" fill="#fff6d9"/><rect x="152" y="28" fill="#fff3d6"/><rect x="156" y="28" fill="#fff1d4"/><rect x="160" y="28" fill="#ffeed1"/><rect x="164" y="28" fill="#ffeccf"/><rect x="168" y="28" fill="#ffe9cc"/><rect x="172" y="28" fill="#ffe7ca"/><rect x="176" y="28" fill="#ffe5c8"/><rect x="180" y="28" fill="#ffe2c6"/><rect x="184" y="28" fill="#ffe0c4"/><rect x="188" y="28" fill="#ffdec1"/><rect x="192" y="28" fill="#ffdcbf"/><rect x="196" y="28" fill="#ffdabd"/><rect x="200" y="28" fill="#ffd7bb"/><rect x="0" y="32" fill="#8fffe9"/><rect x="4" y="32" fill="#93ffe9"/><rect x="8" y="32" fill="#97ffe9"/><rect x="12" y="32" fill="#9cffe9"/><rect x="16" y="32" fill="#a0ffe9"/><rect x="20" y="32" fill="#a4ffe9"/><rect x="24" y="32" fill="#a8ffe9"/><rect x="28" y="32" fill="#abffe9"/><rect x="32" y="32" fill="#afffe8"/><rect x="36" y="32" fill="#b3ffe8"/><rect x="40" y="32" fill="#b7ffe8"/><rect x="44" y="32" fill="#baffe8"/><rect x="48" y="32" fill="#beffe8"/><rect x="52" y="32" fill="#c1ffe8"/><rect x="56" y="32" fill="#c5ffe8"/><rect x="60" y="32" fill="#c8ffe8"/><rect x="64" y="32" fill="#cbffe7"/><rect x="68" y="32" fill="#cfffe7"/><rect x="72" y="32" fill="#d2ffe7"/><rect x="76" y="32" fill="#d5ffe7"/><rect x="80" y="32" fill="#d8ffe7"/><rect x="84" y="32" fill="#dcffe7"/><rect x="88" y="32" fill="#dfffe7"/><rect x="92" y="32" fill="#e2ffe7"/><rect x="96" y="32" fill="#e5ffe6"/><rect x="100" y="32" fill="#e8ffe6"/><rect x="104" y="32" fill="#ebffe6"/><rect x="108" y="32" fill="#eeffe6"/><rect x="112" y="32" fill="#f1ffe6"/><rect x="116" y="32" fill="#f4ffe6"/><rect x="120" y="32" fill="#f7ffe6"/><rect x="124" y="32" fill="#faffe5"/><rect x="128" y="32" fill="#fdffe5"/><rect x="132" y="32" fill="#fffee4"/><rect x="136" y="32" fill="#fffbe1"/><rect x="140" y="32" fill="#fff8df"/><rect x="144" y="32" fill="#fff5dc"/><rect x="148" y="32" fill="#fff3d9"/><rect x="152" y="32" fill="#fff0d7"/><rect x="156" y="32" fill="#ffedd4"/><rect x="160" y="32" fill="#ffebd2"/><rect x="164" y="32" fill="#ffe8d0"/><rect x="168" y="32" fill="#ffe6cd"/><rect x="172" y="32" fill="#ffe4cb"/><rect x="176" y="32" fill="#ffe1c9"/><rect x="180" y="32" fill="#ffdfc7"/><rect x="184" y="32" fill="#ffddc5"/><rect x="188" y="32" fill="#ffdbc2"/><rect x="192" y="32" fill="#ffd9c0"/><rect x="196" y="32" fill="#ffd7be"/><rect x="200" y="32" fill="#ffd5bc"/><rect x="0" y="36" fill="#92ffed"/><rect x="4" y="36" fill="#96ffec"/><rect x="8" y="36" fill="#9bffec"/><rect x="12" y="36" fill="#9fffec"/><rect x="16" y="36" fill="#a3ffec"/><rect x="20" y="36" fill="#a7ffec"/><rect x="24" y="36" fill="#abffec"/><rect x="28" y="36" fill="#afffec"/><rect x="32" y="36" fill="#b2ffec"/><rect x="36" y="36" fill="#b6ffec"/><rect x="40" y="36" fill="#baffec"/><rect x="44" y="36" fill="#bdffec"/><rect x="48" y="36" fill="#c1ffeb"/><rect x="52" y="36" fill="#c4ffeb"/><rect x="56" y="36" fill="#c8ffeb"/><rect x="60" y="36" fill="#cbffeb"/><rect x="64" y="36" fill="#cfffeb"/><rect x="68" y="36" fill="#d2ffeb"/><rect x="72" y="36" fill="#d5ffeb"/><rect x="76" y="36" fill="#d9ffeb"/><rect x="80" y="36" fill="#dcffeb"/><rect x="84" y="36" fill="#dfffea"/><rect x="88" y="36" fill="#e2ffea"/><rect x="92" y="36" fill="#e5ffea"/><rect x="96" y="36" fill="#e8ffea"/><rect x="100" y="36" fill="#ecffea"/><rect x="104" y="36" fill="#efffea"/><rect x="108" y="36" fill="#f2ffea"/><rect x="112" y="36" fill="#f5ffea"/><rect x="116" y="36" fill="#f8ffea"/><rect x="120" y="36" fill="#fbffe9"/><rect x="124" y="36" fill="#feffe9"/><rect x="128" y="36" fill="#fffde7"/><rect x="132" y="36" fill="#fffae5"/><rect x="136" y="36" fill="#fff7e2"/><rect x="140" y="36" fill="#fff5df"/><rect x="144" y="36" fill="#fff2dd"/><rect x="148" y="36" fill="#ffefda"/><rect x="152" y="36" fill="#ffedd8"/><rect x="156" y="36" fill="#ffead5"/><rect x="160" y="36" fill="#ffe8d3"/><rect x="164" y="36" fill="#ffe5d0"/><rect x="168" y="36" fill="#ffe3ce"/><rect x="172" y="36" fill="#ffe1cc"/><rect x="176" y="36" fill="#ffdeca"/><rect x="180" y="36" fill="#ffdcc8"/><rect x="184" y="36" fill="#ffdac5"/><rect x="188" y="36" fill="#ffd8c3"/><rect x="192" y="36" fill="#ffd6c1"/><rect x="196" y="36" fill="#ffd4bf"/><rect x="200" y="36" fill="#ffd2bd"/><rect x="0" y="40" fill="#95fff0"/><rect x="4" y="40" fill="#9afff0"/><rect x="8" y="40" fill="#9efff0"/><rect x="12" y="40" fill="#a2fff0"/><rect x="16" y="40" fill="#a6fff0"/><rect x="20" y="40" fill="#aafff0"/><rect x="24" y="40" fill="#aeffef"/><rect x="28" y="40" fill="#b2ffef"/><rect x="32" y="40" fill="#b6ffef"/><rect x="36" y="40" fill="#baffef"/><rect x="40" y="40" fill="#bdffef"/><rect x="44" y="40" fill="#c1ffef"/><rect x="48" y="40" fill="#c4ffef"/><rect x="52" y="40" fill="#c8ffef"/><rect x="56" y="40" fill="#cbffef"/><rect x="60" y="40" fill="#cfffef"/><rect x="64" y="40" fill="#d2ffef"/><rect x="68" y="40" fill="#d5ffef"/><rect x="72" y="40" fill="#d9ffef"/><rect x="76" y="40" fill="#dcffee"/><rect x="80" y="40" fill="#dfffee"/><rect x="84" y="40" fill="#e2ffee"/><rect x="88" y="40" fill="#e6ffee"/><rect x="92" y="40" fill="#e9ffee"/><rect x="96" y="40" fill="#ecffee"/><rect x="100" y="40" fill="#efffee"/><rect x="104" y="40" fill="#f2ffee"/><rect x="108" y="40" fill="#f5ffee"/><rect x="112" y="40" fill="#f8ffee"/><rect x="116" y="40" fill="#fbffed"/><rect x="120" y="40" fill="#ffffed"/><rect x="124" y="40" fill="#fffceb"/><rect x="128" y="40" fill="#fffae8"/><rect x="132" y="40" fill="#fff7e5"/><rect x="136" y="40" fill="#fff4e3"/><rect x="140" y="40" fill="#fff1e0"/><rect x="144" y="40" fill="#ffeedd"/><rect x="148" y="40" fill="#ffecdb"/><rect x="152" y="40" fill="#ffe9d8"/><rect x="156" y="40" fill="#ffe7d6"/><rect x="160" y="40" fill="#ffe4d4"/><rect x="164" y="40" fill="#ffe2d1"/><rect x="168" y="40" fill="#ffe0cf"/><rect x="172" y="40" fill="#ffddcd"/><rect x="176" y="40" fill="#ffdbcb"/><rect x="180" y="40" fill="#ffd9c8"/><rect x="184" y="40" fill="#ffd7c6"/><rect x="188" y="40" fill="#ffd5c4"/><rect x="192" y="40" fill="#ffd3c2"/><rect x="196" y="40" fill="#ffd1c0"/><rect x="200" y="40" fill="#ffcfbe"/><rect x="0" y="44" fill="#99fff3"/><rect x="4" y="44" fill="#9dfff3"/><rect x="8" y="44" fill="#a2fff3"/><rect x="12" y="44" fill="#a6fff3"/><rect x="16" y="44" fill="#aafff3"/><rect x="20" y="44" fill="#aefff3"/><rect x="24" y="44" fill="#b2fff3"/><rect x="28" y="44" fill="#b5fff3"/><rect x="32" y="44" fill="#b9fff3"/><rect x="36" y="44" fill="#bdfff3"/><rect x="40" y="44" fill="#c1fff3"/><rect x="44" y="44" fill="#c4fff3"/><rect x="48" y="44" fill="#c8fff3"/><rect x="52" y="44" fill="#cbfff3"/><rect x="56" y="44" fill="#cffff3"/><rect x="60" y="44" fill="#d2fff2"/><rect x="64" y="44" fill="#d5fff2"/><rect x="68" y="44" fill="#d9fff2"/><rect x="72" y="44" fill="#dcfff2"/><rect x="76" y="44" fill="#dffff2"/><rect x="80" y="44" fill="#e3fff2"/><rect x="84" y="44" fill="#e6fff2"/><rect x="88" y="44" fill="#e9fff2"/><rect x="92" y="44" fill="#ecfff2"/><rect x="96" y="44" fill="#f0fff2"/><rect x="100" y="44" fill="#f3fff2"/><rect x="104" y="44" fill="#f6fff2"/><rect x="108" y="44" fill="#f9fff2"/><rect x="112" y="44" fill="#fcfff2"/><rect x="116" y="44" fill="#fffff1"/><rect x="120" y="44" fill="#fffcee"/><rect x="124" y="44" fill="#fff9eb"/><rect x="128" y="44" fill="#fff6e9"/><rect x="132" y="44" fill="#fff3e6"/><rect x="136" y="44" fill="#fff0e3"/><rect x="140" y="44" fill="#ffeee1"/><rect x="144" y="44" fill="#ffebde"/><rect x="148" y="44" fill="#ffe9dc"/><rect x="152" y="44" fill="#ffe6d9"/><rect x="156" y="44" fill="#ffe4d7"/><rect x="160" y="44" fill="#ffe1d4"/><rect x="164" y="44" fill="#ffdfd2"/><rect x="168" y="44" fill="#ffddd0"/><rect x="172" y="44" fill="#ffdace"/><rect x="176" y="44" fill="#ffd8cb"/><rect x="180" y="44" fill="#ffd6c9"/><rect x="184" y="44" fill="#ffd4c7"/><rect x="188" y="44" fill="#ffd2c5"/><rect x="192" y="44" fill="#ffd0c3"/><rect x="196" y="44" fill="#ffcec1"/><rect x="200" y="44" fill="#ffccbf"/><rect x="0" y="48" fill="#9dfff7"/><rect x="4" y="48" fill="#a1fff7"/><rect x="8" y="48" fill="#a5fff7"/><rect x="12" y="48" fill="#a9fff7"/><rect x="16" y="48" fill="#adfff7"/><rect x="20" y="48" fill="#b1fff7"/><rect x="24" y="48" fill="#b5fff7"/><rect x="28" y="48" fill="#b9fff7"/><rect x="32" y="48" fill="#bdfff6"/><rect x="36" y="48" fill="#c0fff6"/><rect x="40" y="48" fill="#c4fff6"/><rect x="44" y="48" fill="#c8fff6"/><rect x="48" y="48" fill="#cbfff6"/><rect x="52" y="48" fill="#cffff6"/><rect x="56" y="48" fill="#d2fff6"/><rect x="60" y="48" fill="#d6fff6"/><rect x="64" y="48" fill="#d9fff6"/><rect x="68" y="48" fill="#dcfff6"/><rect x="72" y="48" fill="#e0fff6"/><rect x="76" y="48" fill="#e3fff6"/><rect x="80" y="48" fill="#e6fff6"/><rect x="84" y="48" fill="#eafff6"/><rect x="88" y="48" fill="#edfff6"/><rect x="92" y="48" fill="#f0fff6"/><rect x="96" y="48" fill="#f3fff6"/><rect x="100" y="48" fill="#f6fff6"/><rect x="104" y="48" fill="#fafff6"/><rect x="108" y="48" fill="#fdfff6"/><rect x="112" y="48" fill="#fffef5"/><rect x="116" y="48" fill="#fffbf2"/><rect x="120" y="48" fill="#fff8ef"/><rect x="124" y="48" fill="#fff5ec"/><rect x="128" y="48" fill="#fff2e9"/><rect x="132" y="48" fill="#fff0e6"/><rect x="136" y="48" fill="#ffede4"/><rect x="140" y="48" fill="#ffeae1"/><rect x="144" y="48" fill="#ffe8df"/><rect x="148" y="48" fill="#ffe5dc"/><rect x="152" y="48" fill="#ffe3da"/><rect x="156" y="48" fill="#ffe0d7"/><rect x="160" y="48" fill="#ffded5"/><rect x="164" y="48" fill="#ffdcd3"/><rect x="168" y="48" fill="#ffd9d1"/><rect x="172" y="48" fill="#ffd7ce"/><rect x="176" y="48" fill="#ffd5cc"/><rect x="180" y="48" fill="#ffd3ca"/><rect x="184" y="48" fill="#ffd1c8"/><rect x="188" y="48" fill="#ffcfc6"/><rect x="192" y="48" fill="#ffcdc4"/><rect x="196" y="48" fill="#ffcbc2"/><rect x="200" y="48" fill="#ffc9c0"/><rect x="0" y="52" fill="#a0fffa"/><rect x="4" y="52" fill="#a4fffa"/><rect x="8" y="52" fill="#a9fffa"/><rect x="12" y="52" fill="#adfffa"/><rect x="16" y="52" fill="#b1fffa"/><rect x="20" y="52" fill="#b5fffa"/><rect x="24" y="52" fill="#b9fffa"/><rect x="28" y="52" fill="#bcfffa"/><rect x="32" y="52" fill="#c0fffa"/><rect x="36" y="52" fill="#c4fffa"/><rect x="40" y="52" fill="#c7fffa"/><rect x="44" y="52" fill="#cbfffa"/><rect x="48" y="52" fill="#cffffa"/><rect x="52" y="52" fill="#d2fffa"/><rect x="56" y="52" fill="#d6fffa"/><rect x="60" y="52" fill="#d9fffa"/><rect x="64" y="52" fill="#ddfffa"/><rect x="68" y="52" fill="#e0fffa"/><rect x="72" y="52" fill="#e3fffa"/><rect x="76" y="52" fill="#e7fffa"/><rect x="80" y="52" fill="#eafffa"/><rect x="84" y="52" fill="#edfffa"/><rect x="88" y="52" fill="#f0fffa"/><rect x="92" y="52" fill="#f4fffa"/><rect x="96" y="52" fill="#f7fffa"/><rect x="100" y="52" fill="#fafffa"/><rect x="104" y="52" fill="#fdfffa"/><rect x="108" y="52" fill="#fffdf8"/><rect x="112" y="52" fill="#fffaf5"/><rect x="116" y="52" fill="#fff7f2"/><rect x="120" y="52" fill="#fff4ef"/><rect x="124" y="52" fill="#fff2ed"/><rect x="128" y="52" fill="#ffefea"/><rect x="132" y="52" fill="#ffece7"/><rect x="136" y="52" fill="#ffe9e4"/><rect x="140" y="52" fill="#ffe7e2"/><rect x="144" y="52" fill="#ffe4df"/><rect x="148" y="52" fill="#ffe2dd"/><rect x="152" y="52" fill="#ffdfdb"/><rect x="156" y="52" fill="#ffddd8"/><rect x="160" y="52" fill="#ffdbd6"/><rect x="164" y="52" fill="#ffd8d4"/><rect x="168" y="52" fill="#ffd6d1"/><rect x="172" y="52" fill="#ffd4cf"/><rect x="176" y="52" fill="#ffd2cd"/><rect x="180" y="52" fill="#ffd0cb"/><rect x="184" y="52" fill="#ffcec9"/><rect x="188" y="52" fill="#ffccc7"/><rect x="192" y="52" fill="#ffcac5"/><rect x="196" y="52" fill="#ffc8c3"/><rect x="200" y="52" fill="#ffc6c1"/><rect x="0" y="56" fill="#a4fffe"/><rect x="4" y="56" fill="#a8fffe"/><rect x="8" y="56" fill="#acfffe"/><rect x="12" y="56" fill="#b0fffe"/><rect x="16" y="56" fill="#b4fffe"/><rect x="20" y="56" fill="#b8fffe"/><rect x="24" y="56" fill="#bcfffe"/><rect x="28" y="56" fill="#c0fffe"/><rect x="32" y="56" fill="#c4fffe"/><rect x="36" y="56" fill="#c7fffe"/><rect x="40" y="56" fill="#cbfffe"/><rect x="44" y="56" fill="#cffffe"/><rect x="48" y="56" fill="#d2fffe"/><rect x="52" y="56" fill="#d6fffe"/><rect x="56" y="56" fill="#d9fffe"/><rect x="60" y="56" fill="#ddfffe"/><rect x="64" y="56" fill="#e0fffe"/><rect x="68" y="56" fill="#e4fffe"/><rect x="72" y="56" fill="#e7fffe"/><rect x="76" y="56" fill="#eafffe"/><rect x="80" y="56" fill="#eefffe"/><rect x="84" y="56" fill="#f1fffe"/><rect x="88" y="56" fill="#f4fffe"/><rect x="92" y="56" fill="#f8fffe"/><rect x="96" y="56" fill="#fbfffe"/><rect x="100" y="56" fill="#fefffe"/><rect x="104" y="56" fill="#fffdfc"/><rect x="108" y="56" fill="#fffaf9"/><rect x="112" y="56" fill="#fff7f6"/><rect x="116" y="56" fill="#fff4f3"/><rect x="120" y="56" fill="#fff1f0"/><rect x="124" y="56" fill="#ffeeed"/><rect x="128" y="56" fill="#ffebea"/><rect x="132" y="56" fill="#ffe9e8"/><rect x="136" y="56" fill="#ffe6e5"/><rect x="140" y="56" fill="#ffe3e2"/><rect x="144" y="56" fill="#ffe1e0"/><rect x="148" y="56" fill="#ffdede"/><rect x="152" y="56" fill="#ffdcdb"/><rect x="156" y="56" fill="#ffdad9"/><rect x="160" y="56" fill="#ffd7d7"/><rect x="164" y="56" fill="#ffd5d4"/><rect x="168" y="56" fill="#ffd3d2"/><rect x="172" y="56" fill="#ffd1d0"/><rect x="176" y="56" fill="#ffcfce"/><rect x="180" y="56" fill="#ffcdcc"/><rect x="184" y="56" fill="#ffcbca"/><rect x="188" y="56" fill="#ffc9c8"/><rect x="192" y="56" fill="#ffc7c6"/><rect x="196" y="56" fill="#ffc5c4"/><rect x="200" y="56" fill="#ffc3c2"/><rect x="0" y="60" fill="#a6fcff"/><rect x="4" y="60" fill="#aafcff"/><rect x="8" y="60" fill="#aefcff"/><rect x="12" y="60" fill="#b2fcff"/><rect x="16" y="60" fill="#b6fcff"/><rect x="20" y="60" fill="#bafcff"/><rect x="24" y="60" fill="#befcff"/><rect x="28" y="60" fill="#c1fcff"/><rect x="32" y="60" fill="#c5fcff"/><rect x="36" y="60" fill="#c9fcff"/><rect x="40" y="60" fill="#ccfcff"/><rect x="44" y="60" fill="#d0fcff"/><rect x="48" y="60" fill="#d3fcff"/><rect x="52" y="60" fill="#d7fcff"/><rect x="56" y="60" fill="#dafcff"/><rect x="60" y="60" fill="#defcff"/><rect x="64" y="60" fill="#e1fcff"/><rect x="68" y="60" fill="#e5fcff"/><rect x="72" y="60" fill="#e8fcff"/><rect x="76" y="60" fill="#ebfcff"/><rect x="80" y="60" fill="#effcff"/><rect x="84" y="60" fill="#f2fcff"/><rect x="88" y="60" fill="#f5fcff"/><rect x="92" y="60" fill="#f8fcff"/><rect x="96" y="60" fill="#fcfcff"/><rect x="100" y="60" fill="#fffcff"/><rect x="104" y="60" fill="#fff9fc"/><rect x="108" y="60" fill="#fff6f9"/><rect x="112" y="60" fill="#fff3f6"/><rect x="116" y="60" fill="#fff0f3"/><rect x="120" y="60" fill="#ffedf0"/><rect x="124" y="60" fill="#ffeaee"/><rect x="128" y="60" fill="#ffe8eb"/><rect x="132" y="60" fill="#ffe5e8"/><rect x="136" y="60" fill="#ffe3e6"/><rect x="140" y="60" fill="#ffe0e3"/><rect x="144" y="60" fill="#ffdee1"/><rect x="148" y="60" fill="#ffdbde"/><rect x="152" y="60" fill="#ffd9dc"/><rect x="156" y="60" fill="#ffd6da"/><rect x="160" y="60" fill="#ffd4d7"/><rect x="164" y="60" fill="#ffd2d5"/><rect x="168" y="60" fill="#ffd0d3"/><rect x="172" y="60" fill="#ffced1"/><rect x="176" y="60" fill="#ffcccf"/><rect x="180" y="60" fill="#ffcacd"/><rect x="184" y="60" fill="#ffc8cb"/><rect x="188" y="60" fill="#ffc6c9"/><rect x="192" y="60" fill="#ffc4c7"/><rect x="196" y="60" fill="#ffc2c5"/><rect x="200" y="60" fill="#ffc0c3"/><rect x="0" y="64" fill="#a7f9ff"/><rect x="4" y="64" fill="#abf9ff"/><rect x="8" y="64" fill="#aff9ff"/><rect x="12" y="64" fill="#b3f9ff"/><rect x="16" y="64" fill="#b7f9ff"/><rect x="20" y="64" fill="#baf9ff"/><rect x="24" y="64" fill="#bef9ff"/><rect x="28" y="64" fill="#c2f8ff"/><rect x="32" y="64" fill="#c6f8ff"/><rect x="36" y="64" fill="#c9f8ff"/><rect x="40" y="64" fill="#cdf8ff"/><rect x="44" y="64" fill="#d0f8ff"/><rect x="48" y="64" fill="#d4f8ff"/><rect x="52" y="64" fill="#d7f8ff"/><rect x="56" y="64" fill="#dbf8ff"/><rect x="60" y="64" fill="#def8ff"/><rect x="64" y="64" fill="#e1f8ff"/><rect x="68" y="64" fill="#e5f8ff"/><rect x="72" y="64" fill="#e8f8ff"/><rect x="76" y="64" fill="#ebf8ff"/><rect x="80" y="64" fill="#eef8ff"/><rect x="84" y="64" fill="#f2f8ff"/><rect x="88" y="64" fill="#f5f8ff"/><rect x="92" y="64" fill="#f8f8ff"/><rect x="96" y="64" fill="#fbf8ff"/><rect x="100" y="64" fill="#fef8ff"/><rect x="104" y="64" fill="#fff5fc"/><rect x="108" y="64" fill="#fff2f9"/><rect x="112" y="64" fill="#ffeff6"/><rect x="116" y="64" fill="#ffecf4"/><rect x="120" y="64" fill="#ffeaf1"/><rect x="124" y="64" fill="#ffe7ee"/><rect x="128" y="64" fill="#ffe4eb"/><rect x="132" y="64" fill="#ffe2e9"/><rect x="136" y="64" fill="#ffdfe6"/><rect x="140" y="64" fill="#ffdde4"/><rect x="144" y="64" fill="#ffdae1"/><rect x="148" y="64" fill="#ffd8df"/><rect x="152" y="64" fill="#ffd5dd"/><rect x="156" y="64" fill="#ffd3da"/><rect x="160" y="64" fill="#ffd1d8"/><rect x="164" y="64" fill="#ffcfd6"/><rect x="168" y="64" fill="#ffcdd4"/><rect x="172" y="64" fill="#ffcbd1"/><rect x="176" y="64" fill="#ffc8cf"/><rect x="180" y="64" fill="#ffc6cd"/><rect x="184" y="64" fill="#ffc4cb"/><rect x="188" y="64" fill="#ffc3c9"/><rect x="192" y="64" fill="#ffc1c7"/><rect x="196" y="64" fill="#ffbfc6"/><rect x="200" y="64" fill="#ffbdc4"/><rect x="0" y="68" fill="#a8f5ff"/><rect x="4" y="68" fill="#acf5ff"/><rect x="8" y="68" fill="#b0f5ff"/><rect x="12" y="68" fill="#b4f5ff"/><rect x="16" y="68" fill="#b7f5ff"/><rect x="20" y="68" fill="#bbf5ff"/><rect x="24" y="68" fill="#bff5ff"/><rect x="28" y="68" fill="#c3f5ff"/><rect x="32" y="68" fill="#c6f5ff"/><rect x="36" y="68" fill="#caf5ff"/><rect x="40" y="68" fill="#cdf5ff"/><rect x="44" y="68" fill="#d1f5ff"/><rect x="48" y="68" fill="#d4f4ff"/><rect x="52" y="68" fill="#d7f4ff"/><rect x="56" y="68" fill="#dbf4ff"/><rect x="60" y="68" fill="#def4ff"/><rect x="64" y="68" fill="#e1f4ff"/><rect x="68" y="68" fill="#e5f4ff"/><rect x="72" y="68" fill="#e8f4ff"/><rect x="76" y="68" fill="#ebf4ff"/><rect x="80" y="68" fill="#eef4ff"/><rect x="84" y="68" fill="#f2f4ff"/><rect x="88" y="68" fill="#f5f4ff"/><rect x="92" y="68" fill="#f8f4ff"/><rect x="96" y="68" fill="#fbf4ff"/><rect x="100" y="68" fill="#fef4ff"/><rect x="104" y="68" fill="#fff1fd"/><rect x="108" y="68" fill="#ffeefa"/><rect x="112" y="68" fill="#ffebf7"/><rect x="116" y="68" fill="#ffe9f4"/><rect x="120" y="68" fill="#ffe6f1"/><rect x="124" y="68" fill="#ffe3ee"/><rect x="128" y="68" fill="#ffe1ec"/><rect x="132" y="68" fill="#ffdee9"/><rect x="136" y="68" fill="#ffdce7"/><rect x="140" y="68" fill="#ffd9e4"/><rect x="144" y="68" fill="#ffd7e2"/><rect x="148" y="68" fill="#ffd4df"/><rect x="152" y="68" fill="#ffd2dd"/><rect x="156" y="68" fill="#ffd0db"/><rect x="160" y="68" fill="#ffced9"/><rect x="164" y="68" fill="#ffccd6"/><rect x="168" y="68" fill="#ffc9d4"/><rect x="172" y="68" fill="#ffc7d2"/><rect x="176" y="68" fill="#ffc5d0"/><rect x="180" y="68" fill="#ffc3ce"/><rect x="184" y="68" fill="#ffc1cc"/><rect x="188" y="68" fill="#ffbfca"/><rect x="192" y="68" fill="#ffbec8"/><rect x="196" y="68" fill="#ffbcc6"/><rect x="200" y="68" fill="#ffbac5"/><rect x="0" y="72" fill="#a9f2ff"/><rect x="4" y="72" fill="#adf2ff"/><rect x="8" y="72" fill="#b1f1ff"/><rect x="12" y="72" fill="#b4f1ff"/><rect x="16" y="72" fill="#b8f1ff"/><rect x="20" y="72" fill="#bcf1ff"/><rect x="24" y="72" fill="#c0f1ff"/><rect x="28" y="72" fill="#c3f1ff"/><rect x="32" y="72" fill="#c7f1ff"/><rect x="36" y="72" fill="#caf1ff"/><rect x="40" y="72" fill="#cef1ff"/><rect x="44" y="72" fill="#d1f1ff"/><rect x="48" y="72" fill="#d4f1ff"/><rect x="52" y="72" fill="#d8f1ff"/><rect x="56" y="72" fill="#dbf0ff"/><rect x="60" y="72" fill="#def0ff"/><rect x="64" y="72" fill="#e2f0ff"/><rect x="68" y="72" fill="#e5f0ff"/><rect x="72" y="72" fill="#e8f0ff"/><rect x="76" y="72" fill="#ebf0ff"/><rect x="80" y="72" fill="#eef0ff"/><rect x="84" y="72" fill="#f2f0ff"/><rect x="88" y="72" fill="#f5f0ff"/><rect x="92" y="72" fill="#f8f0ff"/><rect x="96" y="72" fill="#fbf0ff"/><rect x="100" y="72" fill="#feefff"/><rect x="104" y="72" fill="#ffedfd"/><rect x="108" y="72" fill="#ffebfa"/><rect x="112" y="72" fill="#ffe8f7"/><rect x="116" y="72" fill="#ffe5f4"/><rect x="120" y="72" fill="#ffe2f2"/><rect x="124" y="72" fill="#ffe0ef"/><rect x="128" y="72" fill="#ffddec"/><rect x="132" y="72" fill="#ffdbea"/><rect x="136" y="72" fill="#ffd8e7"/><rect x="140" y="72" fill="#ffd6e5"/><rect x="144" y="72" fill="#ffd3e2"/><rect x="148" y="72" fill="#ffd1e0"/><rect x="152" y="72" fill="#ffcfde"/><rect x="156" y="72" fill="#ffcddc"/><rect x="160" y="72" fill="#ffcad9"/><rect x="164" y="72" fill="#ffc8d7"/><rect x="168" y="72" fill="#ffc6d5"/><rect x="172" y="72" fill="#ffc4d3"/><rect x="176" y="72" fill="#ffc2d1"/><rect x="180" y="72" fill="#ffc0cf"/><rect x="184" y="72" fill="#ffbecd"/><rect x="188" y="72" fill="#ffbccb"/><rect x="192" y="72" fill="#ffbac9"/><rect x="196" y="72" fill="#ffb9c7"/><rect x="200" y="72" fill="#ffb7c5"/><rect x="0" y="76" fill="#aaeeff"/><rect x="4" y="76" fill="#aeeeff"/><rect x="8" y="76" fill="#b2eeff"/><rect x="12" y="76" fill="#b5eeff"/><rect x="16" y="76" fill="#b9eeff"/><rect x="20" y="76" fill="#bdeeff"/><rect x="24" y="76" fill="#c0edff"/><rect x="28" y="76" fill="#c4edff"/><rect x="32" y="76" fill="#c7edff"/><rect x="36" y="76" fill="#cbedff"/><rect x="40" y="76" fill="#ceedff"/><rect x="44" y="76" fill="#d1edff"/><rect x="48" y="76" fill="#d5edff"/><rect x="52" y="76" fill="#d8edff"/><rect x="56" y="76" fill="#dbedff"/><rect x="60" y="76" fill="#dfedff"/><rect x="64" y="76" fill="#e2ecff"/><rect x="68" y="76" fill="#e5ecff"/><rect x="72" y="76" fill="#e8ecff"/><rect x="76" y="76" fill="#ebecff"/><rect x="80" y="76" fill="#eeecff"/><rect x="84" y="76" fill="#f1ecff"/><rect x="88" y="76" fill="#f4ecff"/><rect x="92" y="76" fill="#f8ecff"/><rect x="96" y="76" fill="#fbebff"/><rect x="100" y="76" fill="#feebff"/><rect x="104" y="76" fill="#ffeafd"/><rect x="108" y="76" fill="#ffe7fa"/><rect x="112" y="76" fill="#ffe4f8"/><rect x="116" y="76" fill="#ffe1f5"/><rect x="120" y="76" fill="#ffdff2"/><rect x="124" y="76" fill="#ffdcef"/><rect x="128" y="76" fill="#ffdaed"/><rect x="132" y="76" fill="#ffd7ea"/><rect x="136" y="76" fill="#ffd5e8"/><rect x="140" y="76" fill="#ffd2e5"/><rect x="144" y="76" fill="#ffd0e3"/><rect x="148" y="76" fill="#ffcee1"/><rect x="152" y="76" fill="#ffccde"/><rect x="156" y="76" fill="#ffc9dc"/><rect x="160" y="76" fill="#ffc7da"/><rect x="164" y="76" fill="#ffc5d8"/><rect x="168" y="76" fill="#ffc3d6"/><rect x="172" y="76" fill="#ffc1d4"/><rect x="176" y="76" fill="#ffbfd2"/><rect x="180" y="76" fill="#ffbdd0"/><rect x="184" y="76" fill="#ffbbce"/><rect x="188" y="76" fill="#ffb9cc"/><rect x="192" y="76" fill="#ffb7ca"/><rect x="196" y="76" fill="#ffb6c8"/><rect x="200" y="76" fill="#ffb4c6"/><rect x="0" y="80" fill="#abeaff"/><rect x="4" y="80" fill="#afeaff"/><rect x="8" y="80" fill="#b2eaff"/><rect x="12" y="80" fill="#b6eaff"/><rect x="16" y="80" fill="#baeaff"/><rect x="20" y="80" fill="#bdeaff"/><rect x="24" y="80" fill="#c1eaff"/><rect x="28" y="80" fill="#c4eaff"/><rect x="32" y="80" fill="#c8eaff"/><rect x="36" y="80" fill="#cbe9ff"/><rect x="40" y="80" fill="#cee9ff"/><rect x="44" y="80" fill="#d2e9ff"/><rect x="48" y="80" fill="#d5e9ff"/><rect x="52" y="80" fill="#d8e9ff"/><rect x="56" y="80" fill="#dbe9ff"/><rect x="60" y="80" fill="#dfe9ff"/><rect x="64" y="80" fill="#e2e9ff"/><rect x="68" y="80" fill="#e5e8ff"/><rect x="72" y="80" fill="#e8e8ff"/><rect x="76" y="80" fill="#ebe8ff"/><rect x="80" y="80" fill="#eee8ff"/><rect x="84" y="80" fill="#f1e8ff"/><rect x="88" y="80" fill="#f4e8ff"/><rect x="92" y="80" fill="#f7e8ff"/><rect x="96" y="80" fill="#fae7ff"/><rect x="100" y="80" fill="#fde7ff"/><rect x="104" y="80" fill="#ffe6fe"/><rect x="108" y="80" fill="#ffe3fb"/><rect x="112" y="80" fill="#ffe0f8"/><rect x="116" y="80" fill="#ffdef5"/><rect x="120" y="80" fill="#ffdbf2"/><rect x="124" y="80" fill="#ffd9f0"/><rect x="128" y="80" fill="#ffd6ed"/><rect x="132" y="80" fill="#ffd4eb"/><rect x="136" y="80" fill="#ffd1e8"/><rect x="140" y="80" fill="#ffcfe6"/><rect x="144" y="80" fill="#ffcde4"/><rect x="148" y="80" fill="#ffcae1"/><rect x="152" y="80" fill="#ffc8df"/><rect x="156" y="80" fill="#ffc6dd"/><rect x="160" y="80" fill="#ffc4db"/><rect x="164" y="80" fill="#ffc2d8"/><rect x="168" y="80" fill="#ffc0d6"/><rect x="172" y="80" fill="#ffbed4"/><rect x="176" y="80" fill="#ffbcd2"/><rect x="180" y="80" fill="#ffbad0"/><rect x="184" y="80" fill="#ffb8ce"/><rect x="188" y="80" fill="#ffb6cc"/><rect x="192" y="80" fill="#ffb4cb"/><rect x="196" y="80" fill="#ffb2c9"/><rect x="200" y="80" fill="#ffb1c7"/><rect x="0" y="84" fill="#ace7ff"/><rect x="4" y="84" fill="#b0e7ff"/><rect x="8" y="84" fill="#b3e7ff"/><rect x="12" y="84" fill="#b7e7ff"/><rect x="16" y="84" fill="#bae6ff"/><rect x="20" y="84" fill="#bee6ff"/><rect x="24" y="84" fill="#c1e6ff"/><rect x="28" y="84" fill="#c5e6ff"/><rect x="32" y="84" fill="#c8e6ff"/><rect x="36" y="84" fill="#cce6ff"/><rect x="40" y="84" fill="#cfe6ff"/><rect x="44" y="84" fill="#d2e5ff"/><rect x="48" y="84" fill="#d5e5ff"/><rect x="52" y="84" fill="#d9e5ff"/><rect x="56" y="84" fill="#dce5ff"/><rect x="60" y="84" fill="#dfe5ff"/><rect x="64" y="84" fill="#e2e5ff"/><rect x="68" y="84" fill="#e5e5ff"/><rect x="72" y="84" fill="#e8e4ff"/><rect x="76" y="84" fill="#ebe4ff"/><rect x="80" y="84" fill="#eee4ff"/><rect x="84" y="84" fill="#f1e4ff"/><rect x="88" y="84" fill="#f4e4ff"/><rect x="92" y="84" fill="#f7e4ff"/><rect x="96" y="84" fill="#fae3ff"/><rect x="100" y="84" fill="#fde3ff"/><rect x="104" y="84" fill="#ffe2fe"/><rect x="108" y="84" fill="#ffdffb"/><rect x="112" y="84" fill="#ffddf8"/><rect x="116" y="84" fill="#ffdaf6"/><rect x="120" y="84" fill="#ffd7f3"/><rect x="124" y="84" fill="#ffd5f0"/><rect x="128" y="84" fill="#ffd3ee"/><rect x="132" y="84" fill="#ffd0eb"/><rect x="136" y="84" fill="#ffcee9"/><rect x="140" y="84" fill="#ffcce6"/><rect x="144" y="84" fill="#ffc9e4"/><rect x="148" y="84" fill="#ffc7e2"/><rect x="152" y="84" fill="#ffc5e0"/><rect x="156" y="84" fill="#ffc3dd"/><rect x="160" y="84" fill="#ffc1db"/><rect x="164" y="84" fill="#ffbfd9"/><rect x="168" y="84" fill="#ffbdd7"/><rect x="172" y="84" fill="#ffbbd5"/><rect x="176" y="84" fill="#ffb9d3"/><rect x="180" y="84" fill="#ffb7d1"/><rect x="184" y="84" fill="#ffb5cf"/><rect x="188" y="84" fill="#ffb3cd"/><rect x="192" y="84" fill="#ffb1cb"/><rect x="196" y="84" fill="#ffafc9"/><rect x="200" y="84" fill="#ffaec8"/><rect x="0" y="88" fill="#ade3ff"/><rect x="4" y="88" fill="#b0e3ff"/><rect x="8" y="88" fill="#b4e3ff"/><rect x="12" y="88" fill="#b8e3ff"/><rect x="16" y="88" fill="#bbe3ff"/><rect x="20" y="88" fill="#bfe3ff"/><rect x="24" y="88" fill="#c2e3ff"/><rect x="28" y="88" fill="#c5e2ff"/><rect x="32" y="88" fill="#c9e2ff"/><rect x="36" y="88" fill="#cce2ff"/><rect x="40" y="88" fill="#cfe2ff"/><rect x="44" y="88" fill="#d2e2ff"/><rect x="48" y="88" fill="#d6e2ff"/><rect x="52" y="88" fill="#d9e1ff"/><rect x="56" y="88" fill="#dce1ff"/><rect x="60" y="88" fill="#dfe1ff"/><rect x="64" y="88" fill="#e2e1ff"/><rect x="68" y="88" fill="#e5e1ff"/><rect x="72" y="88" fill="#e8e1ff"/><rect x="76" y="88" fill="#ebe0ff"/><rect x="80" y="88" fill="#eee0ff"/><rect x="84" y="88" fill="#f1e0ff"/><rect x="88" y="88" fill="#f4e0ff"/><rect x="92" y="88" fill="#f7e0ff"/><rect x="96" y="88" fill="#fadfff"/><rect x="100" y="88" fill="#fddfff"/><rect x="104" y="88" fill="#ffdefe"/><rect x="108" y="88" fill="#ffdcfb"/><rect x="112" y="88" fill="#ffd9f9"/><rect x="116" y="88" fill="#ffd6f6"/><rect x="120" y="88" fill="#ffd4f3"/><rect x="124" y="88" fill="#ffd1f1"/><rect x="128" y="88" fill="#ffcfee"/><rect x="132" y="88" fill="#ffcdec"/><rect x="136" y="88" fill="#ffcae9"/><rect x="140" y="88" fill="#ffc8e7"/><rect x="144" y="88" fill="#ffc6e5"/><rect x="148" y="88" fill="#ffc4e2"/><rect x="152" y="88" fill="#ffc2e0"/><rect x="156" y="88" fill="#ffbfde"/><rect x="160" y="88" fill="#ffbddc"/><rect x="164" y="88" fill="#ffbbda"/><rect x="168" y="88" fill="#ffb9d8"/><rect x="172" y="88" fill="#ffb7d6"/><rect x="176" y="88" fill="#ffb5d4"/><rect x="180" y="88" fill="#ffb4d2"/><rect x="184" y="88" fill="#ffb2d0"/><rect x="188" y="88" fill="#ffb0ce"/><rect x="192" y="88" fill="#ffaecc"/><rect x="196" y="88" fill="#ffacca"/><rect x="200" y="88" fill="#ffaac8"/><rect x="0" y="92" fill="#aee0ff"/><rect x="4" y="92" fill="#b1e0ff"/><rect x="8" y="92" fill="#b5e0ff"/><rect x="12" y="92" fill="#b8dfff"/><rect x="16" y="92" fill="#bcdfff"/><rect x="20" y="92" fill="#bfdfff"/><rect x="24" y="92" fill="#c3dfff"/><rect x="28" y="92" fill="#c6dfff"/><rect x="32" y="92" fill="#c9dfff"/><rect x="36" y="92" fill="#ccdeff"/><rect x="40" y="92" fill="#d0deff"/><rect x="44" y="92" fill="#d3deff"/><rect x="48" y="92" fill="#d6deff"/><rect x="52" y="92" fill="#d9deff"/><rect x="56" y="92" fill="#dcddff"/><rect x="60" y="92" fill="#dfddff"/><rect x="64" y="92" fill="#e2ddff"/><rect x="68" y="92" fill="#e5ddff"/><rect x="72" y="92" fill="#e8ddff"/><rect x="76" y="92" fill="#ebdcff"/><rect x="80" y="92" fill="#eedcff"/><rect x="84" y="92" fill="#f1dcff"/><rect x="88" y="92" fill="#f4dcff"/><rect x="92" y="92" fill="#f7dcff"/><rect x="96" y="92" fill="#fadbff"/><rect x="100" y="92" fill="#fddbff"/><rect x="104" y="92" fill="#ffdbff"/><rect x="108" y="92" fill="#ffd8fc"/><rect x="112" y="92" fill="#ffd5f9"/><rect x="116" y="92" fill="#ffd3f6"/><rect x="120" y="92" fill="#ffd0f4"/><rect x="124" y="92" fill="#ffcef1"/><rect x="128" y="92" fill="#ffcbef"/><rect x="132" y="92" fill="#ffc9ec"/><rect x="136" y="92" fill="#ffc7ea"/><rect x="140" y="92" fill="#ffc5e7"/><rect x="144" y="92" fill="#ffc2e5"/><rect x="148" y="92" fill="#ffc0e3"/><rect x="152" y="92" fill="#ffbee1"/><rect x="156" y="92" fill="#ffbcdf"/><rect x="160" y="92" fill="#ffbadc"/><rect x="164" y="92" fill="#ffb8da"/><rect x="168" y="92" fill="#ffb6d8"/><rect x="172" y="92" fill="#ffb4d6"/><rect x="176" y="92" fill="#ffb2d4"/><rect x="180" y="92" fill="#ffb0d2"/><rect x="184" y="92" fill="#ffaed0"/><rect x="188" y="92" fill="#ffadcf"/><rect x="192" y="92" fill="#ffabcd"/><rect x="196" y="92" fill="#ffa9cb"/><rect x="200" y="92" fill="#ffa7c9"/><rect x="0" y="96" fill="#afdcff"/><rect x="4" y="96" fill="#b2dcff"/><rect x="8" y="96" fill="#b6dcff"/><rect x="12" y="96" fill="#b9dcff"/><rect x="16" y="96" fill="#bcdcff"/><rect x="20" y="96" fill="#c0dcff"/><rect x="24" y="96" fill="#c3dbff"/><rect x="28" y="96" fill="#c6dbff"/><rect x="32" y="96" fill="#cadbff"/><rect x="36" y="96" fill="#cddbff"/><rect x="40" y="96" fill="#d0dbff"/><rect x="44" y="96" fill="#d3daff"/><rect x="48" y="96" fill="#d6daff"/><rect x="52" y="96" fill="#d9daff"/><rect x="56" y="96" fill="#dcdaff"/><rect x="60" y="96" fill="#dfd9ff"/><rect x="64" y="96" fill="#e2d9ff"/><rect x="68" y="96" fill="#e5d9ff"/><rect x="72" y="96" fill="#e8d9ff"/><rect x="76" y="96" fill="#ebd9ff"/><rect x="80" y="96" fill="#eed8ff"/><rect x="84" y="96" fill="#f1d8ff"/><rect x="88" y="96" fill="#f4d8ff"/><rect x="92" y="96" fill="#f7d8ff"/><rect x="96" y="96" fill="#fad7ff"/><rect x="100" y="96" fill="#fcd7ff"/><rect x="104" y="96" fill="#ffd7ff"/><rect x="108" y="96" fill="#ffd4fc"/><rect x="112" y="96" fill="#ffd2f9"/><rect x="116" y="96" fill="#ffcff7"/><rect x="120" y="96" fill="#ffcdf4"/><rect x="124" y="96" fill="#ffcaf2"/><rect x="128" y="96" fill="#ffc8ef"/><rect x="132" y="96" fill="#ffc6ed"/><rect x="136" y="96" fill="#ffc3ea"/><rect x="140" y="96" fill="#ffc1e8"/><rect x="144" y="96" fill="#ffbfe6"/><rect x="148" y="96" fill="#ffbde3"/><rect x="152" y="96" fill="#ffbbe1"/><rect x="156" y="96" fill="#ffb9df"/><rect x="160" y="96" fill="#ffb7dd"/><rect x="164" y="96" fill="#ffb5db"/><rect x="168" y="96" fill="#ffb3d9"/><rect x="172" y="96" fill="#ffb1d7"/><rect x="176" y="96" fill="#ffafd5"/><rect x="180" y="96" fill="#ffadd3"/><rect x="184" y="96" fill="#ffabd1"/><rect x="188" y="96" fill="#ffa9cf"/><rect x="192" y="96" fill="#ffa8cd"/><rect x="196" y="96" fill="#ffa6cc"/><rect x="200" y="96" fill="#ffa4ca"/><rect x="0" y="100" fill="#afd9ff"/><rect x="4" y="100" fill="#b3d9ff"/><rect x="8" y="100" fill="#b6d9ff"/><rect x="12" y="100" fill="#bad8ff"/><rect x="16" y="100" fill="#bdd8ff"/><rect x="20" y="100" fill="#c0d8ff"/><rect x="24" y="100" fill="#c4d8ff"/><rect x="28" y="100" fill="#c7d8ff"/><rect x="32" y="100" fill="#cad7ff"/><rect x="36" y="100" fill="#cdd7ff"/><rect x="40" y="100" fill="#d0d7ff"/><rect x="44" y="100" fill="#d3d7ff"/><rect x="48" y="100" fill="#d6d6ff"/><rect x="52" y="100" fill="#d9d6ff"/><rect x="56" y="100" fill="#dcd6ff"/><rect x="60" y="100" fill="#dfd6ff"/><rect x="64" y="100" fill="#e2d5ff"/><rect x="68" y="100" fill="#e5d5ff"/><rect x="72" y="100" fill="#e8d5ff"/><rect x="76" y="100" fill="#ebd5ff"/><rect x="80" y="100" fill="#eed4ff"/><rect x="84" y="100" fill="#f1d4ff"/><rect x="88" y="100" fill="#f4d4ff"/><rect x="92" y="100" fill="#f7d4ff"/><rect x="96" y="100" fill="#f9d3ff"/><rect x="100" y="100" fill="#fcd3ff"/><rect x="104" y="100" fill="#ffd3ff"/><rect x="108" y="100" fill="#ffd0fc"/><rect x="112" y="100" fill="#ffcefa"/><rect x="116" y="100" fill="#ffcbf7"/><rect x="120" y="100" fill="#ffc9f4"/><rect x="124" y="100" fill="#ffc7f2"/><rect x="128" y="100" fill="#ffc4ef"/><rect x="132" y="100" fill="#ffc2ed"/><rect x="136" y="100" fill="#ffc0eb"/><rect x="140" y="100" fill="#ffbee8"/><rect x="144" y="100" fill="#ffbce6"/><rect x="148" y="100" fill="#ffb9e4"/><rect x="152" y="100" fill="#ffb7e2"/><rect x="156" y="100" fill="#ffb5e0"/><rect x="160" y="100" fill="#ffb3de"/><rect x="164" y="100" fill="#ffb1db"/><rect x="168" y="100" fill="#ffafd9"/><rect x="172" y="100" fill="#ffaed8"/><rect x="176" y="100" fill="#ffacd6"/><rect x="180" y="100" fill="#ffaad4"/><rect x="184" y="100" fill="#ffa8d2"/><rect x="188" y="100" fill="#ffa6d0"/><rect x="192" y="100" fill="#ffa4ce"/><rect x="196" y="100" fill="#ffa3cc"/><rect x="200" y="100" fill="#ffa1cb"/><rect x="0" y="104" fill="#b0d6ff"/><rect x="4" y="104" fill="#b4d5ff"/><rect x="8" y="104" fill="#b7d5ff"/><rect x="12" y="104" fill="#bad5ff"/><rect x="16" y="104" fill="#bed5ff"/><rect x="20" y="104" fill="#c1d4ff"/><rect x="24" y="104" fill="#c4d4ff"/><rect x="28" y="104" fill="#c7d4ff"/><rect x="32" y="104" fill="#cad4ff"/><rect x="36" y="104" fill="#ced3ff"/><rect x="40" y="104" fill="#d1d3ff"/><rect x="44" y="104" fill="#d4d3ff"/><rect x="48" y="104" fill="#d7d3ff"/><rect x="52" y="104" fill="#dad2ff"/><rect x="56" y="104" fill="#ddd2ff"/><rect x="60" y="104" fill="#e0d2ff"/><rect x="64" y="104" fill="#e2d2ff"/><rect x="68" y="104" fill="#e5d1ff"/><rect x="72" y="104" fill="#e8d1ff"/><rect x="76" y="104" fill="#ebd1ff"/><rect x="80" y="104" fill="#eed1ff"/><rect x="84" y="104" fill="#f1d0ff"/><rect x="88" y="104" fill="#f4d0ff"/><rect x="92" y="104" fill="#f6d0ff"/><rect x="96" y="104" fill="#f9cfff"/><rect x="100" y="104" fill="#fccfff"/><rect x="104" y="104" fill="#ffcfff"/><rect x="108" y="104" fill="#ffcdfd"/><rect x="112" y="104" fill="#ffcafa"/><rect x="116" y="104" fill="#ffc8f7"/><rect x="120" y="104" fill="#ffc5f5"/><rect x="124" y="104" fill="#ffc3f2"/><rect x="128" y="104" fill="#ffc1f0"/><rect x="132" y="104" fill="#ffbfed"/><rect x="136" y="104" fill="#ffbceb"/><rect x="140" y="104" fill="#ffbae9"/><rect x="144" y="104" fill="#ffb8e7"/><rect x="148" y="104" fill="#ffb6e4"/><rect x="152" y="104" fill="#ffb4e2"/><rect x="156" y="104" fill="#ffb2e0"/><rect x="160" y="104" fill="#ffb0de"/><rect x="164" y="104" fill="#ffaedc"/><rect x="168" y="104" fill="#ffacda"/><rect x="172" y="104" fill="#ffaad8"/><rect x="176" y="104" fill="#ffa8d6"/><rect x="180" y="104" fill="#ffa6d4"/><rect x="184" y="104" fill="#ffa5d2"/><rect x="188" y="104" fill="#ffa3d1"/><rect x="192" y="104" fill="#ffa1cf"/><rect x="196" y="104" fill="#ff9fcd"/><rect x="200" y="104" fill="#ff9ecb"/><rect x="0" y="108" fill="#b1d2ff"/><rect x="4" y="108" fill="#b4d2ff"/><rect x="8" y="108" fill="#b8d2ff"/><rect x="12" y="108" fill="#bbd1ff"/><rect x="16" y="108" fill="#bed1ff"/><rect x="20" y="108" fill="#c1d1ff"/><rect x="24" y="108" fill="#c5d1ff"/><rect x="28" y="108" fill="#c8d0ff"/><rect x="32" y="108" fill="#cbd0ff"/><rect x="36" y="108" fill="#ced0ff"/><rect x="40" y="108" fill="#d1d0ff"/><rect x="44" y="108" fill="#d4cfff"/><rect x="48" y="108" fill="#d7cfff"/><rect x="52" y="108" fill="#dacfff"/><rect x="56" y="108" fill="#ddceff"/><rect x="60" y="108" fill="#e0ceff"/><rect x="64" y="108" fill="#e3ceff"/><rect x="68" y="108" fill="#e5ceff"/><rect x="72" y="108" fill="#e8cdff"/><rect x="76" y="108" fill="#ebcdff"/><rect x="80" y="108" fill="#eecdff"/><rect x="84" y="108" fill="#f1ccff"/><rect x="88" y="108" fill="#f3ccff"/><rect x="92" y="108" fill="#f6ccff"/><rect x="96" y="108" fill="#f9ccff"/><rect x="100" y="108" fill="#fccbff"/><rect x="104" y="108" fill="#fecbff"/><rect x="108" y="108" fill="#ffc9fd"/><rect x="112" y="108" fill="#ffc6fa"/><rect x="116" y="108" fill="#ffc4f8"/><rect x="120" y="108" fill="#ffc2f5"/><rect x="124" y="108" fill="#ffbff3"/><rect x="128" y="108" fill="#ffbdf0"/><rect x="132" y="108" fill="#ffbbee"/><rect x="136" y="108" fill="#ffb9ec"/><rect x="140" y="108" fill="#ffb7e9"/><rect x="144" y="108" fill="#ffb5e7"/><rect x="148" y="108" fill="#ffb2e5"/><rect x="152" y="108" fill="#ffb0e3"/><rect x="156" y="108" fill="#ffaee1"/><rect x="160" y="108" fill="#ffaddf"/><rect x="164" y="108" fill="#ffabdd"/><rect x="168" y="108" fill="#ffa9db"/><rect x="172" y="108" fill="#ffa7d9"/><rect x="176" y="108" fill="#ffa5d7"/><rect x="180" y="108" fill="#ffa3d5"/><rect x="184" y="108" fill="#ffa1d3"/><rect x="188" y="108" fill="#ffa0d1"/><rect x="192" y="108" fill="#ff9ecf"/><rect x="196" y="108" fill="#ff9cce"/><rect x="200" y="108" fill="#ff9acc"/><rect x="0" y="112" fill="#b2cfff"/><rect x="4" y="112" fill="#b5ceff"/><rect x="8" y="112" fill="#b8ceff"/><rect x="12" y="112" fill="#bcceff"/><rect x="16" y="112" fill="#bfceff"/><rect x="20" y="112" fill="#c2cdff"/><rect x="24" y="112" fill="#c5cdff"/><rect x="28" y="112" fill="#c8cdff"/><rect x="32" y="112" fill="#cbccff"/><rect x="36" y="112" fill="#ceccff"/><rect x="40" y="112" fill="#d1ccff"/><rect x="44" y="112" fill="#d4ccff"/><rect x="48" y="112" fill="#d7cbff"/><rect x="52" y="112" fill="#dacbff"/><rect x="56" y="112" fill="#ddcbff"/><rect x="60" y="112" fill="#e0caff"/><rect x="64" y="112" fill="#e3caff"/><rect x="68" y="112" fill="#e5caff"/><rect x="72" y="112" fill="#e8caff"/><rect x="76" y="112" fill="#ebc9ff"/><rect x="80" y="112" fill="#eec9ff"/><rect x="84" y="112" fill="#f1c9ff"/><rect x="88" y="112" fill="#f3c8ff"/><rect x="92" y="112" fill="#f6c8ff"/><rect x="96" y="112" fill="#f9c8ff"/><rect x="100" y="112" fill="#fcc7ff"/><rect x="104" y="112" fill="#fec7ff"/><rect x="108" y="112" fill="#ffc5fd"/><rect x="112" y="112" fill="#ffc3fb"/><rect x="116" y="112" fill="#ffc0f8"/><rect x="120" y="112" fill="#ffbef5"/><rect x="124" y="112" fill="#ffbcf3"/><rect x="128" y="112" fill="#ffbaf1"/><rect x="132" y="112" fill="#ffb7ee"/><rect x="136" y="112" fill="#ffb5ec"/><rect x="140" y="112" fill="#ffb3ea"/><rect x="144" y="112" fill="#ffb1e8"/><rect x="148" y="112" fill="#ffafe5"/><rect x="152" y="112" fill="#ffade3"/><rect x="156" y="112" fill="#ffabe1"/><rect x="160" y="112" fill="#ffa9df"/><rect x="164" y="112" fill="#ffa7dd"/><rect x="168" y="112" fill="#ffa5db"/><rect x="172" y="112" fill="#ffa3d9"/><rect x="176" y="112" fill="#ffa2d7"/><rect x="180" y="112" fill="#ffa0d6"/><rect x="184" y="112" fill="#ff9ed4"/><rect x="188" y="112" fill="#ff9cd2"/><rect x="192" y="112" fill="#ff9bd0"/><rect x="196" y="112" fill="#ff99ce"/><rect x="200" y="112" fill="#ff97cd"/><rect x="0" y="116" fill="#b3cbff"/><rect x="4" y="116" fill="#b6cbff"/><rect x="8" y="116" fill="#b9cbff"/><rect x="12" y="116" fill="#bccaff"/><rect x="16" y="116" fill="#bfcaff"/><rect x="20" y="116" fill="#c3caff"/><rect x="24" y="116" fill="#c6c9ff"/><rect x="28" y="116" fill="#c9c9ff"/><rect x="32" y="116" fill="#ccc9ff"/><rect x="36" y="116" fill="#cfc9ff"/><rect x="40" y="116" fill="#d2c8ff"/><rect x="44" y="116" fill="#d4c8ff"/><rect x="48" y="116" fill="#d7c8ff"/><rect x="52" y="116" fill="#dac7ff"/><rect x="56" y="116" fill="#ddc7ff"/><rect x="60" y="116" fill="#e0c7ff"/><rect x="64" y="116" fill="#e3c6ff"/><rect x="68" y="116" fill="#e6c6ff"/><rect x="72" y="116" fill="#e8c6ff"/><rect x="76" y="116" fill="#ebc5ff"/><rect x="80" y="116" fill="#eec5ff"/><rect x="84" y="116" fill="#f1c5ff"/><rect x="88" y="116" fill="#f3c4ff"/><rect x="92" y="116" fill="#f6c4ff"/><rect x="96" y="116" fill="#f9c4ff"/><rect x="100" y="116" fill="#fbc3ff"/><rect x="104" y="116" fill="#fec3ff"/><rect x="108" y="116" fill="#ffc1fd"/><rect x="112" y="116" fill="#ffbffb"/><rect x="116" y="116" fill="#ffbdf8"/><rect x="120" y="116" fill="#ffbaf6"/><rect x="124" y="116" fill="#ffb8f3"/><rect x="128" y="116" fill="#ffb6f1"/><rect x="132" y="116" fill="#ffb4ef"/><rect x="136" y="116" fill="#ffb2ec"/><rect x="140" y="116" fill="#ffafea"/><rect x="144" y="116" fill="#ffade8"/><rect x="148" y="116" fill="#ffabe6"/><rect x="152" y="116" fill="#ffa9e4"/><rect x="156" y="116" fill="#ffa7e2"/><rect x="160" y="116" fill="#ffa6e0"/><rect x="164" y="116" fill="#ffa4de"/><rect x="168" y="116" fill="#ffa2dc"/><rect x="172" y="116" fill="#ffa0da"/><rect x="176" y="116" fill="#ff9ed8"/><rect x="180" y="116" fill="#ff9cd6"/><rect x="184" y="116" fill="#ff9bd4"/><rect x="188" y="116" fill="#ff99d2"/><rect x="192" y="116" fill="#ff97d1"/><rect x="196" y="116" fill="#ff95cf"/><rect x="200" y="116" fill="#ff94cd"/></svg>
<canvas id="xy" class="a" style="left:382px;top:381px;width:204px;height:117.5px" width="204" height="118"></canvas>
<svg width="1000" height="533" viewBox="0 0 1000 533">
<rect x="480.3" y="435.6" width="8.2" height="7.6" fill="none" stroke="#111" stroke-width="1.2"/>
<circle cx="480.3" cy="432" r="2.4" fill="#bbb" stroke="#333" stroke-width="0.8"/>
<circle cx="480.2" cy="434.8" r="2.6" fill="#fff" stroke="#222" stroke-width="0.9"/>
</svg>
<script>(function(){var cv=document.getElementById("xy");if(!cv.getContext)return;var c=cv.getContext("2d");var W=204,H=118;var im=c.createImageData(W,H);var d=im.data;function g(v){v=v<=0.0031308?12.92*v:1.055*Math.pow(v,1/2.4)-0.055;return Math.max(0,Math.min(255,Math.round(v*255)));}for(var j=0;j<H;j++){for(var i=0;i<W;i++){var x=0.3127+(i-W/2)*0.0005,y=0.329-(j-H/2)*0.0010;var X=x/y,Z=(1-x-y)/y;var R=3.2406*X-1.5372-0.4986*Z,G=-0.9689*X+1.8758+0.0415*Z,B=0.0557*X-0.2040+1.0570*Z;if(R<0)R=0;if(G<0)G=0;if(B<0)B=0;var m=Math.max(R,G,B);R/=m;G/=m;B/=m;var p=(j*W+i)*4;d[p]=g(R);d[p+1]=g(G);d[p+2]=g(B);d[p+3]=255;}}c.putImageData(im,0,0);})();</script>
<div class="a" style="left:597px;top:372.5px;width:380px;height:119.5px;overflow:hidden">
<div class="a" style="left:0;top:0;width:380px;height:10.5px;background:#2b2b2b"></div>
<div class="a" style="left:0;top:10.5px;width:380px;height:8.5px;background:#1a1a1a"></div>
<div class="a" style="left:0;top:19px;width:9px;height:100.5px;background:#2a2a2a"></div>
<div class="a" style="left:0;top:0;width:9px;height:19px;background:#050505"></div>
<div class="t" style="left:54.89999999999998px;top:5.5px;font-size:11px;color:#f0f0f0;transform-origin:0 0;transform:scaleX(0.93)">White</div>
<div class="t" style="left:102px;top:5.5px;font-size:11px;color:#f0f0f0;transform-origin:0 0;transform:scaleX(0.93)">Red</div>
<div class="t" style="left:143.89999999999998px;top:5.5px;font-size:11px;color:#f0f0f0;transform-origin:0 0;transform:scaleX(0.93)">Green</div>
<div class="t" style="left:191.39999999999998px;top:5.5px;font-size:11px;color:#f0f0f0;transform-origin:0 0;transform:scaleX(0.93)">Blue</div>
<div class="t" style="left:232.89999999999998px;top:5.5px;font-size:11px;color:#f0f0f0;transform-origin:0 0;transform:scaleX(0.93)">Cyan</div>
<div class="t" style="left:280.79999999999995px;top:5.5px;font-size:11px;color:#f0f0f0;transform-origin:0 0;transform:scaleX(0.93)">Magenta</div>
<div class="t" style="left:323.5px;top:5.5px;font-size:11px;color:#f0f0f0;transform-origin:0 0;transform:scaleX(0.93)">Yellow</div>
<div class="t" style="left:370.20000000000005px;top:5.5px;font-size:11px;color:#f0f0f0;transform-origin:0 0;transform:scaleX(0.93)">100W</div>
<div class="a" style="left:9px;top:19.0px;width:371px;height:18.6px;background:#454545"></div>
<div class="t" style="left:11px;top:23.6px;font-size:11px;color:#eeeeee;transform-origin:0 0;transform:scaleX(0.93)">x: CIE31</div>
<div class="t" style="left:54.89999999999998px;top:23.6px;font-size:11px;color:#eeeeee;transform-origin:0 0;transform:scaleX(0.93)">0,3119</div>
<div class="t" style="left:102px;top:23.6px;font-size:11px;color:#eeeeee;transform-origin:0 0;transform:scaleX(0.93)">0,6541</div>
<div class="t" style="left:143.89999999999998px;top:23.6px;font-size:11px;color:#eeeeee;transform-origin:0 0;transform:scaleX(0.93)">0,2981</div>
<div class="t" style="left:191.39999999999998px;top:23.6px;font-size:11px;color:#eeeeee;transform-origin:0 0;transform:scaleX(0.93)">0,1548</div>
<div class="t" style="left:232.89999999999998px;top:23.6px;font-size:11px;color:#eeeeee;transform-origin:0 0;transform:scaleX(0.93)">0,2220</div>
<div class="t" style="left:280.79999999999995px;top:23.6px;font-size:11px;color:#eeeeee;transform-origin:0 0;transform:scaleX(0.93)">0,3192</div>
<div class="t" style="left:323.5px;top:23.6px;font-size:11px;color:#eeeeee;transform-origin:0 0;transform:scaleX(0.93)">0,4277</div>
<div class="t" style="left:370.20000000000005px;top:23.6px;font-size:11px;color:#eeeeee;transform-origin:0 0;transform:scaleX(0.93)">0,3</div>
<div class="a" style="left:9px;top:37.6px;width:371px;height:18.6px;background:#767676"></div>
<div class="t" style="left:11px;top:42.2px;font-size:11px;color:#eeeeee;transform-origin:0 0;transform:scaleX(0.93)">y: CIE31</div>
<div class="t" style="left:54.89999999999998px;top:42.2px;font-size:11px;color:#eeeeee;transform-origin:0 0;transform:scaleX(0.93)">0,3321</div>
<div class="t" style="left:102px;top:42.2px;font-size:11px;color:#eeeeee;transform-origin:0 0;transform:scaleX(0.93)">0,3326</div>
<div class="t" style="left:143.89999999999998px;top:42.2px;font-size:11px;color:#eeeeee;transform-origin:0 0;transform:scaleX(0.93)">0,6492</div>
<div class="t" style="left:191.39999999999998px;top:42.2px;font-size:11px;color:#eeeeee;transform-origin:0 0;transform:scaleX(0.93)">0,0519</div>
<div class="t" style="left:232.89999999999998px;top:42.2px;font-size:11px;color:#eeeeee;transform-origin:0 0;transform:scaleX(0.93)">0,3324</div>
<div class="t" style="left:280.79999999999995px;top:42.2px;font-size:11px;color:#eeeeee;transform-origin:0 0;transform:scaleX(0.93)">0,1439</div>
<div class="t" style="left:323.5px;top:42.2px;font-size:11px;color:#eeeeee;transform-origin:0 0;transform:scaleX(0.93)">0,5355</div>
<div class="t" style="left:370.20000000000005px;top:42.2px;font-size:11px;color:#eeeeee;transform-origin:0 0;transform:scaleX(0.93)">0,3</div>
<div class="a" style="left:9px;top:56.2px;width:371px;height:18.6px;background:#454545"></div>
<div class="t" style="left:11px;top:60.8px;font-size:11px;color:#eeeeee;transform-origin:0 0;transform:scaleX(0.93)">Y</div>
<div class="t" style="left:54.89999999999998px;top:60.8px;font-size:11px;color:#eeeeee;transform-origin:0 0;transform:scaleX(0.93)">226,6356</div>
<div class="t" style="left:102px;top:60.8px;font-size:11px;color:#eeeeee;transform-origin:0 0;transform:scaleX(0.93)">50,6238</div>
<div class="t" style="left:143.89999999999998px;top:60.8px;font-size:11px;color:#eeeeee;transform-origin:0 0;transform:scaleX(0.93)">166,2083</div>
<div class="t" style="left:191.39999999999998px;top:60.8px;font-size:11px;color:#eeeeee;transform-origin:0 0;transform:scaleX(0.93)">16,0505</div>
<div class="t" style="left:232.89999999999998px;top:60.8px;font-size:11px;color:#eeeeee;transform-origin:0 0;transform:scaleX(0.93)">181,5705</div>
<div class="t" style="left:280.79999999999995px;top:60.8px;font-size:11px;color:#eeeeee;transform-origin:0 0;transform:scaleX(0.93)">65,9656</div>
<div class="t" style="left:323.5px;top:60.8px;font-size:11px;color:#eeeeee;transform-origin:0 0;transform:scaleX(0.93)">210,9460</div>
<div class="t" style="left:370.20000000000005px;top:60.8px;font-size:11px;color:#eeeeee;transform-origin:0 0;transform:scaleX(0.93)">435</div>
<div class="a" style="left:9px;top:74.8px;width:371px;height:18.6px;background:#767676"></div>
<div class="t" style="left:11px;top:79.4px;font-size:11px;color:#eeeeee;transform-origin:0 0;transform:scaleX(0.93)">Target Y</div>
<div class="t" style="left:54.89999999999998px;top:79.4px;font-size:11px;color:#eeeeee;transform-origin:0 0;transform:scaleX(0.93)">217,4285</div>
<div class="t" style="left:102px;top:79.4px;font-size:11px;color:#eeeeee;transform-origin:0 0;transform:scaleX(0.93)">46,2375</div>
<div class="t" style="left:143.89999999999998px;top:79.4px;font-size:11px;color:#eeeeee;transform-origin:0 0;transform:scaleX(0.93)">155,4958</div>
<div class="t" style="left:191.39999999999998px;top:79.4px;font-size:11px;color:#eeeeee;transform-origin:0 0;transform:scaleX(0.93)">15,6952</div>
<div class="t" style="left:232.89999999999998px;top:79.4px;font-size:11px;color:#eeeeee;transform-origin:0 0;transform:scaleX(0.93)">171,1910</div>
<div class="t" style="left:280.79999999999995px;top:79.4px;font-size:11px;color:#eeeeee;transform-origin:0 0;transform:scaleX(0.93)">61,9327</div>
<div class="t" style="left:323.5px;top:79.4px;font-size:11px;color:#eeeeee;transform-origin:0 0;transform:scaleX(0.93)">201,7333</div>
<div class="t" style="left:370.20000000000005px;top:79.4px;font-size:11px;color:#eeeeee;transform-origin:0 0;transform:scaleX(0.93)">435</div>
<div class="a" style="left:9px;top:93.4px;width:371px;height:18.6px;background:#454545"></div>
<div class="t" style="left:11px;top:98.0px;font-size:11px;color:#eeeeee;transform-origin:0 0;transform:scaleX(0.93)">ΔE 2000</div>
<div class="t" style="left:54.89999999999998px;top:98.0px;font-size:11px;color:#eeeeee;transform-origin:0 0;transform:scaleX(0.93)">2,5532</div>
<div class="t" style="left:102px;top:98.0px;font-size:11px;color:#eeeeee;transform-origin:0 0;transform:scaleX(0.93)">3,6283</div>
<div class="t" style="left:143.89999999999998px;top:98.0px;font-size:11px;color:#eeeeee;transform-origin:0 0;transform:scaleX(0.93)">4,1750</div>
<div class="t" style="left:191.39999999999998px;top:98.0px;font-size:11px;color:#eeeeee;transform-origin:0 0;transform:scaleX(0.93)">3,5418</div>
<div class="t" style="left:232.89999999999998px;top:98.0px;font-size:11px;color:#eeeeee;transform-origin:0 0;transform:scaleX(0.93)">1,8919</div>
<div class="t" style="left:280.79999999999995px;top:98.0px;font-size:11px;color:#eeeeee;transform-origin:0 0;transform:scaleX(0.93)">2,3558</div>
<div class="t" style="left:323.5px;top:98.0px;font-size:11px;color:#eeeeee;transform-origin:0 0;transform:scaleX(0.93)">4,2404</div>
<div class="t" style="left:370.20000000000005px;top:98.0px;font-size:11px;color:#eeeeee;transform-origin:0 0;transform:scaleX(0.93)">2,5</div>
<div class="a" style="left:9px;top:112.0px;width:371px;height:18.6px;background:#767676"></div>
<div class="t" style="left:11px;top:116.6px;font-size:11px;color:#eeeeee;transform-origin:0 0;transform:scaleX(0.93)">ICtCp</div>
<div class="t" style="left:54.89999999999998px;top:116.6px;font-size:11px;color:#eeeeee;transform-origin:0 0;transform:scaleX(0.93)">3,5108</div>
<div class="t" style="left:102px;top:116.6px;font-size:11px;color:#eeeeee;transform-origin:0 0;transform:scaleX(0.93)">17,1116</div>
<div class="t" style="left:143.89999999999998px;top:116.6px;font-size:11px;color:#eeeeee;transform-origin:0 0;transform:scaleX(0.93)">24,3867</div>
<div class="t" style="left:191.39999999999998px;top:116.6px;font-size:11px;color:#eeeeee;transform-origin:0 0;transform:scaleX(0.93)">14,5138</div>
<div class="t" style="left:232.89999999999998px;top:116.6px;font-size:11px;color:#eeeeee;transform-origin:0 0;transform:scaleX(0.93)">5,9274</div>
<div class="t" style="left:280.79999999999995px;top:116.6px;font-size:11px;color:#eeeeee;transform-origin:0 0;transform:scaleX(0.93)">13,0188</div>
<div class="t" style="left:323.5px;top:116.6px;font-size:11px;color:#eeeeee;transform-origin:0 0;transform:scaleX(0.93)">22,7154</div>
<div class="t" style="left:370.20000000000005px;top:116.6px;font-size:11px;color:#eeeeee;transform-origin:0 0;transform:scaleX(0.93)">4,1</div>
</div>
<div class="a" style="left:977px;top:392.8px;width:10px;height:98.5px;background:#5e5e5e"></div>
<div class="a" style="left:978.5px;top:405px;width:7px;height:61px;border-radius:3.5px;background:#3a3a3a"></div>
<div class="a" style="left:979px;top:396px;width:0;height:0;border-left:3px solid transparent;border-right:3px solid transparent;border-bottom:3.5px solid #333"></div>
<div class="a" style="left:979px;top:484px;width:0;height:0;border-left:3px solid transparent;border-right:3px solid transparent;border-top:3.5px solid #333"></div>
<div class="a" style="left:606px;top:492px;width:370.5px;height:11px;background:#5e5e5e"></div>
<div class="a" style="left:616px;top:493.5px;width:318px;height:8px;border-radius:4px;background:#3a3a3a"></div>
<div class="a" style="left:608.5px;top:494.5px;width:0;height:0;border-top:3px solid transparent;border-bottom:3px solid transparent;border-right:3.5px solid #333"></div>
<div class="a" style="left:969.5px;top:494.5px;width:0;height:0;border-top:3px solid transparent;border-bottom:3px solid transparent;border-left:3.5px solid #333"></div>
<div class="a" style="left:987px;top:372px;width:13px;height:136px;background:#2a2a2a"></div>
<div class="a" style="left:0;top:507.5px;width:1000px;height:25.5px;background:linear-gradient(#3a3a3a,#2a2a2a)"></div>
<div class="a" style="left:0.0px;top:507.5px;width:58.5px;height:25.5px;background:linear-gradient(#8e8e8e,#626262)"></div>
<div class="a" style="left:2.8px;top:510px;width:53.5px;height:14.3px;background:#c8c8c8;border-radius:1.5px;box-shadow:0 0 0 0.8px #d8d8d8"></div>
<div class="t" style="left:0.0px;width:58.5px;text-align:center;top:525.5px;font-size:5px;font-weight:bold;color:#333">White</div>
<div class="a" style="left:58.5px;top:507.5px;width:0.8px;height:25.5px;background:#222"></div>
<div class="a" style="left:59.0px;top:507.5px;width:58.5px;height:25.5px;background:linear-gradient(#8e8e8e,#626262)"></div>
<div class="a" style="left:61.8px;top:510px;width:53.5px;height:14.3px;background:#c00000;border-radius:1.5px;box-shadow:0 0 0 0.8px #d8d8d8"></div>
<div class="t" style="left:59.0px;width:58.5px;text-align:center;top:525.5px;font-size:5px;font-weight:bold;color:#333">Red</div>
<div class="a" style="left:117.5px;top:507.5px;width:0.8px;height:25.5px;background:#222"></div>
<div class="a" style="left:118.1px;top:507.5px;width:58.5px;height:25.5px;background:linear-gradient(#8e8e8e,#626262)"></div>
<div class="a" style="left:120.9px;top:510px;width:53.5px;height:14.3px;background:#00c000;border-radius:1.5px;box-shadow:0 0 0 0.8px #d8d8d8"></div>
<div class="t" style="left:118.1px;width:58.5px;text-align:center;top:525.5px;font-size:5px;font-weight:bold;color:#333">Green</div>
<div class="a" style="left:176.6px;top:507.5px;width:0.8px;height:25.5px;background:#222"></div>
<div class="a" style="left:177.1px;top:507.5px;width:58.5px;height:25.5px;background:linear-gradient(#8e8e8e,#626262)"></div>
<div class="a" style="left:179.9px;top:510px;width:53.5px;height:14.3px;background:#0000c0;border-radius:1.5px;box-shadow:0 0 0 0.8px #d8d8d8"></div>
<div class="t" style="left:177.1px;width:58.5px;text-align:center;top:525.5px;font-size:5px;font-weight:bold;color:#333">Blue</div>
<div class="a" style="left:235.6px;top:507.5px;width:0.8px;height:25.5px;background:#222"></div>
<div class="a" style="left:236.2px;top:507.5px;width:58.5px;height:25.5px;background:linear-gradient(#8e8e8e,#626262)"></div>
<div class="a" style="left:239.0px;top:510px;width:53.5px;height:14.3px;background:#00c0c0;border-radius:1.5px;box-shadow:0 0 0 0.8px #d8d8d8"></div>
<div class="t" style="left:236.2px;width:58.5px;text-align:center;top:525.5px;font-size:5px;font-weight:bold;color:#333">Cyan</div>
<div class="a" style="left:294.7px;top:507.5px;width:0.8px;height:25.5px;background:#222"></div>
<div class="a" style="left:295.2px;top:507.5px;width:58.5px;height:25.5px;background:linear-gradient(#8e8e8e,#626262)"></div>
<div class="a" style="left:298.1px;top:510px;width:53.5px;height:14.3px;background:#c000c0;border-radius:1.5px;box-shadow:0 0 0 0.8px #d8d8d8"></div>
<div class="t" style="left:295.2px;width:58.5px;text-align:center;top:525.5px;font-size:5px;font-weight:bold;color:#333">Magenta</div>
<div class="a" style="left:353.8px;top:507.5px;width:0.8px;height:25.5px;background:#222"></div>
<div class="a" style="left:354.3px;top:507.5px;width:58.5px;height:25.5px;background:linear-gradient(#8e8e8e,#626262)"></div>
<div class="a" style="left:357.1px;top:510px;width:53.5px;height:14.3px;background:#c0c000;border-radius:1.5px;box-shadow:0 0 0 0.8px #d8d8d8"></div>
<div class="t" style="left:354.3px;width:58.5px;text-align:center;top:525.5px;font-size:5px;font-weight:bold;color:#333">Yellow</div>
<div class="a" style="left:412.8px;top:507.5px;width:0.8px;height:25.5px;background:#222"></div>
<div class="a" style="left:413.3px;top:507.5px;width:58.5px;height:25.5px;background:#2e2e2e"></div>
<div class="a" style="left:415.8px;top:509.5px;width:54px;height:15px;background:#ffffff;border-radius:2px;box-shadow:0 0 0 1.2px #111"></div>
<div class="t" style="left:413.3px;width:58.5px;text-align:center;top:525.5px;font-size:5px;font-weight:bold;color:#eee">100W</div>
<div class="a" style="left:471.8px;top:507.5px;width:0.8px;height:25.5px;background:#222"></div>
<div class="a" style="left:874.5px;top:508px;width:19px;height:25px;background:linear-gradient(#a8a8a8,#7a7a7a)"></div>
<div class="a" style="left:874.5px;top:515px;width:19px;height:0.8px;background:#555"></div>
<div class="a" style="left:878px;top:518px;width:10px;height:10.5px;border:1px solid #222;background:#ddd"></div>
<div class="a" style="left:881px;top:521px;width:5px;height:5.5px;background:#000"></div>
<div class="a" style="left:893.5px;top:508px;width:17.75px;height:11.5px;background:linear-gradient(#b8b8b8,#8a8a8a);box-shadow:inset -0.7px 0 0 #5a5a5a"></div>
<div class="a" style="left:898.1px;top:509.3px;width:8.5px;height:8.5px;border-radius:50%;background:linear-gradient(#7a7a7a,#aaa);box-shadow:0 0.6px 0 0.4px #d0d0d0"></div>
<div class="a" style="left:911.2px;top:508px;width:17.75px;height:11.5px;background:linear-gradient(#b8b8b8,#8a8a8a);box-shadow:inset -0.7px 0 0 #5a5a5a"></div>
<div class="a" style="left:915.9px;top:509.3px;width:8.5px;height:8.5px;border-radius:50%;background:linear-gradient(#7a7a7a,#aaa);box-shadow:0 0.6px 0 0.4px #d0d0d0"></div>
<div class="a" style="left:929.0px;top:508px;width:17.75px;height:11.5px;background:linear-gradient(#b8b8b8,#8a8a8a);box-shadow:inset -0.7px 0 0 #5a5a5a"></div>
<div class="a" style="left:933.6px;top:509.3px;width:8.5px;height:8.5px;border-radius:50%;background:linear-gradient(#7a7a7a,#aaa);box-shadow:0 0.6px 0 0.4px #d0d0d0"></div>
<div class="a" style="left:946.8px;top:508px;width:17.75px;height:11.5px;background:linear-gradient(#b8b8b8,#8a8a8a);box-shadow:inset -0.7px 0 0 #5a5a5a"></div>
<div class="a" style="left:951.4px;top:509.3px;width:8.5px;height:8.5px;border-radius:50%;background:linear-gradient(#7a7a7a,#aaa);box-shadow:0 0.6px 0 0.4px #d0d0d0"></div>
<div class="a" style="left:964.5px;top:508px;width:17.75px;height:11.5px;background:linear-gradient(#b8b8b8,#8a8a8a);box-shadow:inset -0.7px 0 0 #5a5a5a"></div>
<div class="a" style="left:969.1px;top:509.3px;width:8.5px;height:8.5px;border-radius:50%;background:linear-gradient(#7a7a7a,#aaa);box-shadow:0 0.6px 0 0.4px #d0d0d0"></div>
<svg width="1000" height="533" viewBox="0 0 1000 533">
<circle cx="902.1" cy="513.6" r="1.8" fill="#222"/>
<path d="M918.5,511.3 L922.3,513.6 L918.5,515.9 Z" fill="#222"/>
<path d="M935.3,516.5 L935.3,512.3 Q937.3,509.8 939.3,512.3 L939.3,516.5 M935.3,514 L939.3,514" fill="none" stroke="#222" stroke-width="1.1"/>
<path d="M952.6,513.6 q1.3,-2 2.6,0 q1.3,2 2.6,0 q-1.3,-2 -2.6,0 q-1.3,2 -2.6,0" fill="none" stroke="#222" stroke-width="0.9"/>
<path d="M970.5,511.8 a2,2 0 1 0 2,2.2 M971.5,510.8 l1.2,1.2 l-1.5,0.8" fill="none" stroke="#222" stroke-width="1"/>
<g stroke="#e00010" stroke-width="2"><line x1="991" y1="508" x2="991" y2="519.5"/><line x1="986" y1="510.8" x2="996" y2="516.7"/><line x1="986" y1="516.7" x2="996" y2="510.8"/></g>
</svg>
<div class="a" style="left:893.5px;top:520.3px;width:52.5px;height:12.7px;background:linear-gradient(#c0c0c0,#909090)"></div>
<div class="a" style="left:946.7px;top:520.3px;width:53.3px;height:12.7px;background:linear-gradient(#c0c0c0,#909090)"></div>
<div class="t" style="left:915px;top:521px;font-size:10.5px;color:#1a1a1a;-webkit-text-stroke:0.2px #1a1a1a">Back</div>
<div class="a" style="left:901.5px;top:522px;width:8.5px;height:8.5px;border-radius:50%;background:linear-gradient(#8a8a8a,#b0b0b0);box-shadow:0 0.6px 0 0.4px #d0d0d0"></div>
<div class="a" style="left:983.5px;top:522px;width:8.5px;height:8.5px;border-radius:50%;background:linear-gradient(#8a8a8a,#b0b0b0);box-shadow:0 0.6px 0 0.4px #d0d0d0"></div>
<div class="t" style="left:956px;top:521px;font-size:10.5px;color:#1a1a1a;-webkit-text-stroke:0.2px #1a1a1a">Next</div>
</div></body></html>
